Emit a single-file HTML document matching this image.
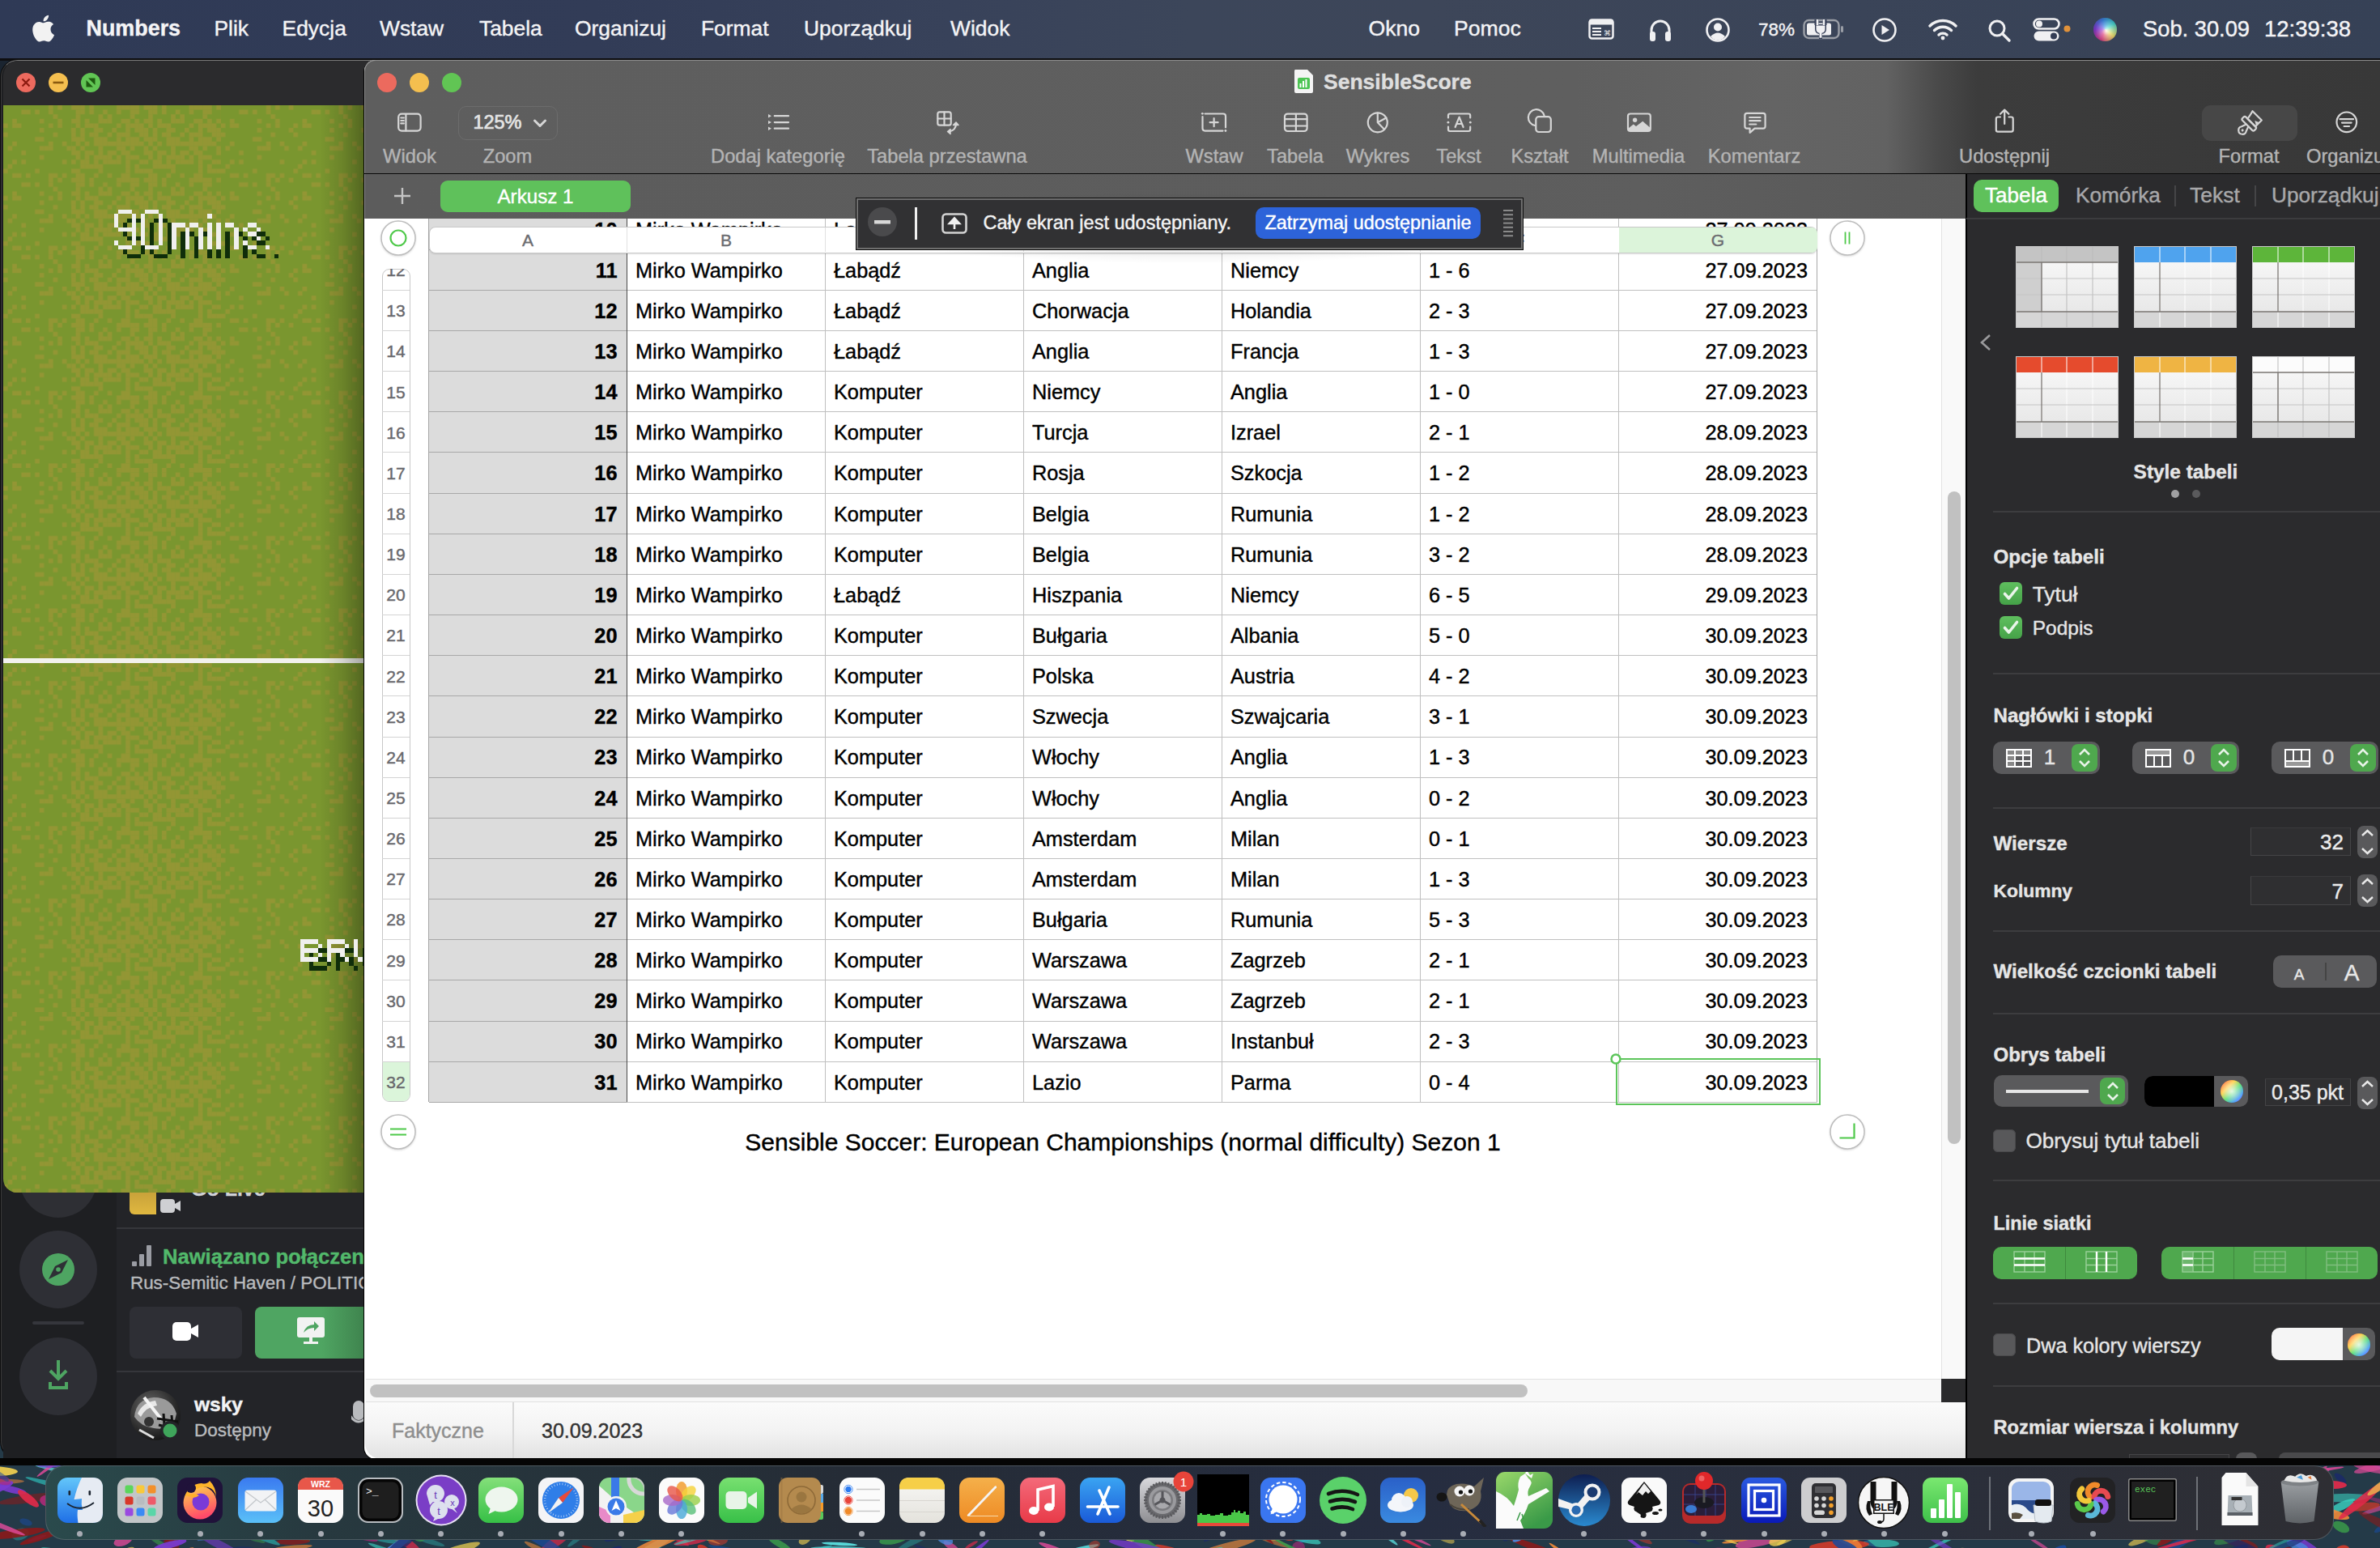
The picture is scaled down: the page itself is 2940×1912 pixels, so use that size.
<!DOCTYPE html>
<html><head><meta charset="utf-8"><title>Numbers</title>
<style>
*{margin:0;padding:0;box-sizing:border-box}
html,body{width:2940px;height:1912px;overflow:hidden}
body{position:relative;font-family:"Liberation Sans",sans-serif;background:#1a2430}
.abs{position:absolute}
.t{position:absolute;white-space:nowrap;line-height:1;-webkit-text-stroke:0.4px currentColor}
</style></head><body>

<div class="abs" style="left:0.00px;top:1760.00px;width:2940.00px;height:152.00px;background:#243a48"></div>
<svg class="abs" style="left:0.00px;top:1760.00px;" width="2940" height="152" viewBox="0 1760 2940 152"><ellipse cx="689" cy="1863" rx="18" ry="5" fill="#8a1a1a" opacity="0.77" transform="rotate(6 689 1863)"/><ellipse cx="2688" cy="1853" rx="24" ry="3" fill="#1a2a6a" opacity="0.88" transform="rotate(-2 2688 1853)"/><ellipse cx="1400" cy="1876" rx="10" ry="5" fill="#e02a4a" opacity="0.68" transform="rotate(34 1400 1876)"/><ellipse cx="25" cy="1895" rx="11" ry="7" fill="#2a9a9a" opacity="0.51" transform="rotate(-16 25 1895)"/><ellipse cx="2559" cy="1854" rx="30" ry="6" fill="#1a2a6a" opacity="0.69" transform="rotate(23 2559 1854)"/><ellipse cx="2150" cy="1868" rx="39" ry="2" fill="#b02a7a" opacity="0.56" transform="rotate(-32 2150 1868)"/><ellipse cx="627" cy="1920" rx="20" ry="5" fill="#3ad0c0" opacity="0.88" transform="rotate(-6 627 1920)"/><ellipse cx="1691" cy="1862" rx="19" ry="3" fill="#b02a7a" opacity="0.92" transform="rotate(15 1691 1862)"/><ellipse cx="2532" cy="1924" rx="28" ry="2" fill="#e02a4a" opacity="0.74" transform="rotate(-14 2532 1924)"/><ellipse cx="1684" cy="1804" rx="28" ry="5" fill="#f0d050" opacity="0.56" transform="rotate(-19 1684 1804)"/><ellipse cx="1416" cy="1876" rx="22" ry="3" fill="#d03a2a" opacity="0.57" transform="rotate(-7 1416 1876)"/><ellipse cx="856" cy="1894" rx="36" ry="2" fill="#f0d050" opacity="0.67" transform="rotate(21 856 1894)"/><ellipse cx="1727" cy="1864" rx="37" ry="3" fill="#f08a3a" opacity="0.64" transform="rotate(40 1727 1864)"/><ellipse cx="209" cy="1871" rx="6" ry="3" fill="#3a9a4a" opacity="0.62" transform="rotate(-17 209 1871)"/><ellipse cx="2035" cy="1922" rx="17" ry="3" fill="#1a4a9a" opacity="0.67" transform="rotate(32 2035 1922)"/><ellipse cx="1352" cy="1860" rx="28" ry="5" fill="#4a8ae0" opacity="0.94" transform="rotate(-32 1352 1860)"/><ellipse cx="2398" cy="1827" rx="27" ry="5" fill="#7a3ad0" opacity="0.94" transform="rotate(-16 2398 1827)"/><ellipse cx="1533" cy="1864" rx="5" ry="4" fill="#f0d050" opacity="0.67" transform="rotate(-15 1533 1864)"/><ellipse cx="1736" cy="1808" rx="27" ry="3" fill="#b02a7a" opacity="0.66" transform="rotate(14 1736 1808)"/><ellipse cx="2087" cy="1890" rx="6" ry="2" fill="#8a1a1a" opacity="0.67" transform="rotate(-38 2087 1890)"/><ellipse cx="1851" cy="1830" rx="26" ry="2" fill="#1a4a9a" opacity="0.67" transform="rotate(-15 1851 1830)"/><ellipse cx="1755" cy="1831" rx="18" ry="6" fill="#2a9a9a" opacity="0.81" transform="rotate(38 1755 1831)"/><ellipse cx="372" cy="1858" rx="28" ry="3" fill="#b02a7a" opacity="0.70" transform="rotate(-25 372 1858)"/><ellipse cx="2060" cy="1804" rx="16" ry="3" fill="#e02a4a" opacity="0.86" transform="rotate(-22 2060 1804)"/><ellipse cx="2843" cy="1801" rx="31" ry="3" fill="#f0d050" opacity="0.60" transform="rotate(-4 2843 1801)"/><ellipse cx="340" cy="1861" rx="12" ry="6" fill="#e02a4a" opacity="0.89" transform="rotate(6 340 1861)"/><ellipse cx="994" cy="1902" rx="8" ry="5" fill="#f0d050" opacity="0.63" transform="rotate(-30 994 1902)"/><ellipse cx="2346" cy="1827" rx="17" ry="4" fill="#3a9a4a" opacity="0.52" transform="rotate(5 2346 1827)"/><ellipse cx="1212" cy="1817" rx="22" ry="6" fill="#f0d050" opacity="0.70" transform="rotate(39 1212 1817)"/><ellipse cx="2811" cy="1915" rx="13" ry="6" fill="#e02a4a" opacity="0.84" transform="rotate(20 2811 1915)"/><ellipse cx="2851" cy="1863" rx="36" ry="6" fill="#e02a4a" opacity="0.63" transform="rotate(7 2851 1863)"/><ellipse cx="2394" cy="1796" rx="37" ry="5" fill="#7a3ad0" opacity="0.90" transform="rotate(-24 2394 1796)"/><ellipse cx="1261" cy="1797" rx="22" ry="2" fill="#4a8ae0" opacity="0.80" transform="rotate(-16 1261 1797)"/><ellipse cx="1544" cy="1846" rx="38" ry="5" fill="#b02a7a" opacity="0.94" transform="rotate(-30 1544 1846)"/><ellipse cx="1592" cy="1900" rx="7" ry="3" fill="#d03a2a" opacity="0.87" transform="rotate(3 1592 1900)"/><ellipse cx="490" cy="1897" rx="37" ry="6" fill="#e02a4a" opacity="0.72" transform="rotate(34 490 1897)"/><ellipse cx="1681" cy="1844" rx="31" ry="3" fill="#f0d050" opacity="0.69" transform="rotate(2 1681 1844)"/><ellipse cx="1389" cy="1895" rx="5" ry="2" fill="#1a4a9a" opacity="0.52" transform="rotate(-36 1389 1895)"/><ellipse cx="1419" cy="1794" rx="30" ry="4" fill="#e04a9a" opacity="0.64" transform="rotate(-15 1419 1794)"/><ellipse cx="1027" cy="1877" rx="26" ry="3" fill="#f08a3a" opacity="0.69" transform="rotate(39 1027 1877)"/><ellipse cx="360" cy="1790" rx="30" ry="6" fill="#f0d050" opacity="0.67" transform="rotate(-26 360 1790)"/><ellipse cx="1781" cy="1896" rx="18" ry="6" fill="#f0d050" opacity="0.52" transform="rotate(31 1781 1896)"/><ellipse cx="1850" cy="1893" rx="16" ry="7" fill="#3a9a4a" opacity="0.61" transform="rotate(-3 1850 1893)"/><ellipse cx="1577" cy="1884" rx="8" ry="4" fill="#3a9a4a" opacity="0.51" transform="rotate(-30 1577 1884)"/><ellipse cx="950" cy="1921" rx="25" ry="6" fill="#d03a2a" opacity="0.56" transform="rotate(-3 950 1921)"/><ellipse cx="2403" cy="1879" rx="36" ry="6" fill="#8a1a1a" opacity="0.64" transform="rotate(-31 2403 1879)"/><ellipse cx="1565" cy="1900" rx="30" ry="4" fill="#f08a3a" opacity="0.52" transform="rotate(22 1565 1900)"/><ellipse cx="254" cy="1803" rx="36" ry="2" fill="#2a9a9a" opacity="0.88" transform="rotate(-13 254 1803)"/><ellipse cx="56" cy="1806" rx="22" ry="5" fill="#3ad0c0" opacity="0.86" transform="rotate(6 56 1806)"/><ellipse cx="88" cy="1894" rx="23" ry="5" fill="#d03a2a" opacity="0.54" transform="rotate(4 88 1894)"/><ellipse cx="1629" cy="1864" rx="35" ry="2" fill="#d03a2a" opacity="0.58" transform="rotate(-21 1629 1864)"/><ellipse cx="725" cy="1873" rx="31" ry="4" fill="#b02a7a" opacity="0.92" transform="rotate(8 725 1873)"/><ellipse cx="1639" cy="1920" rx="18" ry="3" fill="#7a3ad0" opacity="0.84" transform="rotate(-7 1639 1920)"/><ellipse cx="459" cy="1883" rx="31" ry="5" fill="#4a8ae0" opacity="0.57" transform="rotate(15 459 1883)"/><ellipse cx="1175" cy="1910" rx="11" ry="4" fill="#e04a9a" opacity="0.73" transform="rotate(33 1175 1910)"/><ellipse cx="1300" cy="1887" rx="12" ry="3" fill="#f08a3a" opacity="0.73" transform="rotate(-28 1300 1887)"/><ellipse cx="2766" cy="1905" rx="24" ry="6" fill="#8a1a1a" opacity="0.69" transform="rotate(16 2766 1905)"/><ellipse cx="2524" cy="1869" rx="14" ry="3" fill="#2a9a9a" opacity="0.86" transform="rotate(-19 2524 1869)"/><ellipse cx="578" cy="1867" rx="13" ry="4" fill="#e02a4a" opacity="0.95" transform="rotate(-29 578 1867)"/><ellipse cx="1409" cy="1871" rx="21" ry="6" fill="#e02a4a" opacity="0.51" transform="rotate(12 1409 1871)"/><ellipse cx="2939" cy="1800" rx="38" ry="6" fill="#7a3ad0" opacity="0.71" transform="rotate(37 2939 1800)"/><ellipse cx="664" cy="1822" rx="30" ry="5" fill="#f08a3a" opacity="0.61" transform="rotate(28 664 1822)"/><ellipse cx="545" cy="1825" rx="12" ry="5" fill="#e02a4a" opacity="0.92" transform="rotate(-37 545 1825)"/><ellipse cx="486" cy="1796" rx="11" ry="2" fill="#5ae0e0" opacity="0.54" transform="rotate(-33 486 1796)"/><ellipse cx="2465" cy="1829" rx="17" ry="5" fill="#8a1a1a" opacity="0.51" transform="rotate(-13 2465 1829)"/><ellipse cx="968" cy="1841" rx="8" ry="5" fill="#1a2a6a" opacity="0.68" transform="rotate(36 968 1841)"/><ellipse cx="1602" cy="1806" rx="15" ry="5" fill="#d03a2a" opacity="0.74" transform="rotate(-5 1602 1806)"/><ellipse cx="728" cy="1861" rx="30" ry="5" fill="#b02a7a" opacity="0.63" transform="rotate(21 728 1861)"/><ellipse cx="1994" cy="1878" rx="33" ry="3" fill="#5ae0e0" opacity="0.65" transform="rotate(36 1994 1878)"/><ellipse cx="1667" cy="1861" rx="28" ry="4" fill="#2a9a9a" opacity="0.81" transform="rotate(17 1667 1861)"/><ellipse cx="1668" cy="1815" rx="28" ry="5" fill="#1a4a9a" opacity="0.91" transform="rotate(-10 1668 1815)"/><ellipse cx="1334" cy="1805" rx="25" ry="7" fill="#8a1a1a" opacity="0.77" transform="rotate(18 1334 1805)"/><ellipse cx="1634" cy="1877" rx="21" ry="3" fill="#1a4a9a" opacity="0.55" transform="rotate(16 1634 1877)"/><ellipse cx="520" cy="1865" rx="25" ry="4" fill="#d03a2a" opacity="0.67" transform="rotate(-19 520 1865)"/><ellipse cx="2580" cy="1796" rx="23" ry="3" fill="#5ae0e0" opacity="0.89" transform="rotate(1 2580 1796)"/><ellipse cx="2796" cy="1851" rx="33" ry="2" fill="#e04a9a" opacity="0.55" transform="rotate(28 2796 1851)"/><ellipse cx="786" cy="1803" rx="9" ry="6" fill="#1a2a6a" opacity="0.81" transform="rotate(-31 786 1803)"/><ellipse cx="1670" cy="1880" rx="19" ry="7" fill="#1a4a9a" opacity="0.57" transform="rotate(7 1670 1880)"/><ellipse cx="1167" cy="1816" rx="23" ry="5" fill="#f08a3a" opacity="0.67" transform="rotate(29 1167 1816)"/><ellipse cx="853" cy="1904" rx="21" ry="4" fill="#e02a4a" opacity="0.75" transform="rotate(-9 853 1904)"/><ellipse cx="1718" cy="1876" rx="39" ry="5" fill="#3ad0c0" opacity="0.80" transform="rotate(32 1718 1876)"/><ellipse cx="70" cy="1816" rx="27" ry="2" fill="#5ae0e0" opacity="0.72" transform="rotate(13 70 1816)"/><ellipse cx="1540" cy="1852" rx="12" ry="4" fill="#2a9a9a" opacity="0.92" transform="rotate(25 1540 1852)"/><ellipse cx="2801" cy="1805" rx="15" ry="5" fill="#1a4a9a" opacity="0.86" transform="rotate(-29 2801 1805)"/><ellipse cx="1837" cy="1797" rx="18" ry="3" fill="#d03a2a" opacity="0.51" transform="rotate(-0 1837 1797)"/><ellipse cx="992" cy="1834" rx="17" ry="5" fill="#d03a2a" opacity="0.77" transform="rotate(29 992 1834)"/><ellipse cx="2742" cy="1887" rx="31" ry="3" fill="#5ae0e0" opacity="0.53" transform="rotate(-24 2742 1887)"/><ellipse cx="576" cy="1884" rx="13" ry="3" fill="#5ae0e0" opacity="0.54" transform="rotate(-37 576 1884)"/><ellipse cx="577" cy="1812" rx="22" ry="5" fill="#4a8ae0" opacity="0.59" transform="rotate(28 577 1812)"/><ellipse cx="1437" cy="1793" rx="21" ry="5" fill="#e04a9a" opacity="0.90" transform="rotate(-26 1437 1793)"/><ellipse cx="2125" cy="1840" rx="18" ry="4" fill="#f0d050" opacity="0.94" transform="rotate(-8 2125 1840)"/><ellipse cx="2376" cy="1825" rx="18" ry="6" fill="#4a8ae0" opacity="0.59" transform="rotate(-24 2376 1825)"/><ellipse cx="489" cy="1845" rx="11" ry="2" fill="#d03a2a" opacity="0.70" transform="rotate(9 489 1845)"/><ellipse cx="531" cy="1904" rx="19" ry="3" fill="#2a9a9a" opacity="0.52" transform="rotate(16 531 1904)"/><ellipse cx="1182" cy="1844" rx="6" ry="7" fill="#f08a3a" opacity="0.68" transform="rotate(-21 1182 1844)"/><ellipse cx="548" cy="1835" rx="9" ry="7" fill="#f0d050" opacity="0.83" transform="rotate(-36 548 1835)"/><ellipse cx="800" cy="1896" rx="21" ry="7" fill="#3ad0c0" opacity="0.75" transform="rotate(-1 800 1896)"/><ellipse cx="70" cy="1835" rx="40" ry="3" fill="#2a9a9a" opacity="0.94" transform="rotate(15 70 1835)"/><ellipse cx="1745" cy="1790" rx="6" ry="2" fill="#1a4a9a" opacity="0.72" transform="rotate(0 1745 1790)"/><ellipse cx="544" cy="1859" rx="17" ry="6" fill="#5ae0e0" opacity="0.86" transform="rotate(-2 544 1859)"/><ellipse cx="2714" cy="1917" rx="6" ry="3" fill="#f0d050" opacity="0.68" transform="rotate(11 2714 1917)"/><ellipse cx="2803" cy="1815" rx="19" ry="4" fill="#4a8ae0" opacity="0.81" transform="rotate(-13 2803 1815)"/><ellipse cx="2747" cy="1814" rx="31" ry="6" fill="#e02a4a" opacity="0.66" transform="rotate(35 2747 1814)"/><ellipse cx="528" cy="1898" rx="20" ry="4" fill="#1a2a6a" opacity="0.62" transform="rotate(-2 528 1898)"/><ellipse cx="486" cy="1887" rx="26" ry="5" fill="#3a9a4a" opacity="0.52" transform="rotate(36 486 1887)"/><ellipse cx="492" cy="1891" rx="34" ry="2" fill="#1a2a6a" opacity="0.54" transform="rotate(14 492 1891)"/><ellipse cx="687" cy="1904" rx="27" ry="6" fill="#e02a4a" opacity="0.71" transform="rotate(-36 687 1904)"/><ellipse cx="2569" cy="1877" rx="40" ry="2" fill="#f08a3a" opacity="0.93" transform="rotate(-8 2569 1877)"/><ellipse cx="293" cy="1867" rx="9" ry="2" fill="#8a1a1a" opacity="0.81" transform="rotate(-23 293 1867)"/><ellipse cx="2893" cy="1916" rx="10" ry="7" fill="#d03a2a" opacity="0.94" transform="rotate(-22 2893 1916)"/><ellipse cx="636" cy="1866" rx="20" ry="6" fill="#f0d050" opacity="0.90" transform="rotate(-14 636 1866)"/><ellipse cx="2311" cy="1853" rx="27" ry="2" fill="#5ae0e0" opacity="0.51" transform="rotate(-31 2311 1853)"/><ellipse cx="2860" cy="1817" rx="36" ry="2" fill="#e04a9a" opacity="0.87" transform="rotate(-8 2860 1817)"/><ellipse cx="2008" cy="1805" rx="22" ry="5" fill="#1a2a6a" opacity="0.77" transform="rotate(-12 2008 1805)"/><ellipse cx="1308" cy="1805" rx="34" ry="5" fill="#e02a4a" opacity="0.55" transform="rotate(-10 1308 1805)"/><ellipse cx="3" cy="1830" rx="27" ry="3" fill="#f08a3a" opacity="0.53" transform="rotate(-1 3 1830)"/><ellipse cx="1627" cy="1889" rx="20" ry="5" fill="#f0d050" opacity="0.61" transform="rotate(1 1627 1889)"/><ellipse cx="2477" cy="1798" rx="13" ry="4" fill="#3ad0c0" opacity="0.57" transform="rotate(-23 2477 1798)"/><ellipse cx="2754" cy="1888" rx="36" ry="7" fill="#f0d050" opacity="0.82" transform="rotate(-3 2754 1888)"/><ellipse cx="2521" cy="1840" rx="12" ry="5" fill="#3a9a4a" opacity="0.85" transform="rotate(-1 2521 1840)"/><ellipse cx="1193" cy="1925" rx="37" ry="3" fill="#7a3ad0" opacity="0.90" transform="rotate(-39 1193 1925)"/><ellipse cx="64" cy="1810" rx="23" ry="2" fill="#e04a9a" opacity="0.84" transform="rotate(-37 64 1810)"/><ellipse cx="802" cy="1848" rx="17" ry="6" fill="#1a2a6a" opacity="0.56" transform="rotate(23 802 1848)"/><ellipse cx="1303" cy="1913" rx="21" ry="3" fill="#e04a9a" opacity="0.82" transform="rotate(21 1303 1913)"/><ellipse cx="2890" cy="1922" rx="36" ry="4" fill="#1a4a9a" opacity="0.92" transform="rotate(-5 2890 1922)"/><ellipse cx="1393" cy="1925" rx="13" ry="7" fill="#3ad0c0" opacity="0.71" transform="rotate(-17 1393 1925)"/><ellipse cx="2623" cy="1899" rx="15" ry="3" fill="#5ae0e0" opacity="0.51" transform="rotate(2 2623 1899)"/><ellipse cx="1855" cy="1810" rx="6" ry="7" fill="#2a9a9a" opacity="0.85" transform="rotate(-24 1855 1810)"/><ellipse cx="1368" cy="1922" rx="32" ry="7" fill="#2a9a9a" opacity="0.61" transform="rotate(-1 1368 1922)"/><ellipse cx="805" cy="1912" rx="34" ry="5" fill="#5ae0e0" opacity="0.64" transform="rotate(-32 805 1912)"/><ellipse cx="717" cy="1898" rx="20" ry="3" fill="#2a9a9a" opacity="0.52" transform="rotate(-38 717 1898)"/><ellipse cx="2948" cy="1812" rx="32" ry="5" fill="#1a4a9a" opacity="0.88" transform="rotate(19 2948 1812)"/><ellipse cx="1209" cy="1891" rx="17" ry="2" fill="#2a9a9a" opacity="0.51" transform="rotate(-27 1209 1891)"/><ellipse cx="1896" cy="1911" rx="37" ry="4" fill="#8a1a1a" opacity="0.89" transform="rotate(20 1896 1911)"/><ellipse cx="2893" cy="1860" rx="18" ry="5" fill="#3ad0c0" opacity="0.81" transform="rotate(-25 2893 1860)"/><ellipse cx="2936" cy="1864" rx="19" ry="3" fill="#e04a9a" opacity="0.62" transform="rotate(-18 2936 1864)"/><ellipse cx="823" cy="1862" rx="25" ry="2" fill="#2a9a9a" opacity="0.88" transform="rotate(-7 823 1862)"/><ellipse cx="2446" cy="1916" rx="26" ry="2" fill="#f0d050" opacity="0.55" transform="rotate(8 2446 1916)"/><ellipse cx="353" cy="1896" rx="31" ry="3" fill="#3a9a4a" opacity="0.67" transform="rotate(13 353 1896)"/><ellipse cx="1514" cy="1911" rx="39" ry="5" fill="#f08a3a" opacity="0.66" transform="rotate(-15 1514 1911)"/><ellipse cx="1929" cy="1917" rx="19" ry="2" fill="#f08a3a" opacity="0.92" transform="rotate(36 1929 1917)"/><ellipse cx="926" cy="1843" rx="15" ry="2" fill="#3ad0c0" opacity="0.90" transform="rotate(-7 926 1843)"/><ellipse cx="1456" cy="1919" rx="31" ry="5" fill="#d03a2a" opacity="0.88" transform="rotate(19 1456 1919)"/><ellipse cx="1861" cy="1900" rx="5" ry="3" fill="#1a2a6a" opacity="0.62" transform="rotate(-34 1861 1900)"/><ellipse cx="1419" cy="1826" rx="24" ry="2" fill="#f08a3a" opacity="0.58" transform="rotate(-1 1419 1826)"/><ellipse cx="427" cy="1885" rx="29" ry="4" fill="#3a9a4a" opacity="0.56" transform="rotate(12 427 1885)"/><ellipse cx="143" cy="1893" rx="11" ry="3" fill="#e02a4a" opacity="0.57" transform="rotate(-30 143 1893)"/><ellipse cx="1542" cy="1811" rx="12" ry="6" fill="#3a9a4a" opacity="0.94" transform="rotate(-9 1542 1811)"/><ellipse cx="817" cy="1808" rx="10" ry="2" fill="#b02a7a" opacity="0.77" transform="rotate(35 817 1808)"/><ellipse cx="2765" cy="1791" rx="18" ry="2" fill="#e04a9a" opacity="0.66" transform="rotate(-20 2765 1791)"/><ellipse cx="2813" cy="1855" rx="30" ry="3" fill="#2a9a9a" opacity="0.74" transform="rotate(19 2813 1855)"/><ellipse cx="2525" cy="1850" rx="19" ry="4" fill="#3ad0c0" opacity="0.74" transform="rotate(-5 2525 1850)"/><ellipse cx="2462" cy="1817" rx="26" ry="7" fill="#e02a4a" opacity="0.64" transform="rotate(20 2462 1817)"/><ellipse cx="2539" cy="1919" rx="16" ry="6" fill="#1a4a9a" opacity="0.94" transform="rotate(-36 2539 1919)"/><ellipse cx="1200" cy="1908" rx="9" ry="2" fill="#e02a4a" opacity="0.68" transform="rotate(-30 1200 1908)"/><ellipse cx="1675" cy="1841" rx="29" ry="3" fill="#e04a9a" opacity="0.70" transform="rotate(3 1675 1841)"/><ellipse cx="416" cy="1871" rx="16" ry="4" fill="#b02a7a" opacity="0.77" transform="rotate(11 416 1871)"/><ellipse cx="2073" cy="1894" rx="30" ry="3" fill="#1a2a6a" opacity="0.63" transform="rotate(27 2073 1894)"/><ellipse cx="2891" cy="1826" rx="9" ry="4" fill="#1a2a6a" opacity="0.83" transform="rotate(40 2891 1826)"/><ellipse cx="721" cy="1849" rx="14" ry="2" fill="#b02a7a" opacity="0.89" transform="rotate(3 721 1849)"/><ellipse cx="2920" cy="1861" rx="20" ry="5" fill="#d03a2a" opacity="0.75" transform="rotate(-7 2920 1861)"/><ellipse cx="1799" cy="1829" rx="13" ry="4" fill="#f08a3a" opacity="0.66" transform="rotate(39 1799 1829)"/><ellipse cx="620" cy="1864" rx="36" ry="4" fill="#e02a4a" opacity="0.75" transform="rotate(-9 620 1864)"/><ellipse cx="15" cy="1840" rx="18" ry="4" fill="#7a3ad0" opacity="0.89" transform="rotate(12 15 1840)"/><ellipse cx="1722" cy="1810" rx="13" ry="4" fill="#f0d050" opacity="0.90" transform="rotate(-40 1722 1810)"/><ellipse cx="603" cy="1849" rx="12" ry="2" fill="#1a2a6a" opacity="0.74" transform="rotate(34 603 1849)"/><ellipse cx="2177" cy="1902" rx="34" ry="7" fill="#e04a9a" opacity="0.76" transform="rotate(-13 2177 1902)"/><ellipse cx="1498" cy="1915" rx="13" ry="2" fill="#3ad0c0" opacity="0.59" transform="rotate(-17 1498 1915)"/><ellipse cx="2434" cy="1871" rx="8" ry="2" fill="#b02a7a" opacity="0.72" transform="rotate(-9 2434 1871)"/><ellipse cx="2917" cy="1854" rx="10" ry="3" fill="#8a1a1a" opacity="0.78" transform="rotate(-5 2917 1854)"/><ellipse cx="1946" cy="1849" rx="8" ry="7" fill="#1a2a6a" opacity="0.53" transform="rotate(30 1946 1849)"/><ellipse cx="2594" cy="1891" rx="16" ry="6" fill="#b02a7a" opacity="0.69" transform="rotate(-2 2594 1891)"/><ellipse cx="2645" cy="1902" rx="17" ry="4" fill="#f0d050" opacity="0.65" transform="rotate(-22 2645 1902)"/><ellipse cx="1912" cy="1919" rx="7" ry="4" fill="#7a3ad0" opacity="0.74" transform="rotate(35 1912 1919)"/><ellipse cx="1690" cy="1802" rx="13" ry="4" fill="#e02a4a" opacity="0.68" transform="rotate(33 1690 1802)"/><ellipse cx="1005" cy="1852" rx="39" ry="3" fill="#f0d050" opacity="0.90" transform="rotate(-16 1005 1852)"/><ellipse cx="376" cy="1862" rx="27" ry="3" fill="#5ae0e0" opacity="0.76" transform="rotate(29 376 1862)"/><ellipse cx="2133" cy="1861" rx="21" ry="5" fill="#e02a4a" opacity="0.59" transform="rotate(-15 2133 1861)"/><ellipse cx="2577" cy="1819" rx="34" ry="7" fill="#d03a2a" opacity="0.73" transform="rotate(34 2577 1819)"/><ellipse cx="2490" cy="1833" rx="31" ry="3" fill="#f08a3a" opacity="0.88" transform="rotate(-9 2490 1833)"/><ellipse cx="2462" cy="1798" rx="19" ry="4" fill="#1a4a9a" opacity="0.66" transform="rotate(-17 2462 1798)"/><ellipse cx="137" cy="1920" rx="31" ry="3" fill="#3ad0c0" opacity="0.75" transform="rotate(-5 137 1920)"/><ellipse cx="712" cy="1884" rx="13" ry="5" fill="#f0d050" opacity="0.81" transform="rotate(-21 712 1884)"/><ellipse cx="1561" cy="1871" rx="20" ry="2" fill="#3ad0c0" opacity="0.53" transform="rotate(-5 1561 1871)"/><ellipse cx="2324" cy="1906" rx="22" ry="5" fill="#3ad0c0" opacity="0.69" transform="rotate(2 2324 1906)"/><ellipse cx="1455" cy="1843" rx="23" ry="4" fill="#3a9a4a" opacity="0.72" transform="rotate(40 1455 1843)"/><ellipse cx="513" cy="1887" rx="17" ry="6" fill="#f0d050" opacity="0.66" transform="rotate(-14 513 1887)"/><ellipse cx="417" cy="1830" rx="27" ry="2" fill="#7a3ad0" opacity="0.72" transform="rotate(-4 417 1830)"/><ellipse cx="1717" cy="1901" rx="12" ry="2" fill="#5ae0e0" opacity="0.77" transform="rotate(38 1717 1901)"/><ellipse cx="1721" cy="1882" rx="15" ry="3" fill="#3a9a4a" opacity="0.84" transform="rotate(27 1721 1882)"/><ellipse cx="848" cy="1791" rx="29" ry="6" fill="#b02a7a" opacity="0.67" transform="rotate(-6 848 1791)"/><ellipse cx="521" cy="1830" rx="12" ry="6" fill="#1a2a6a" opacity="0.75" transform="rotate(-31 521 1830)"/><ellipse cx="933" cy="1888" rx="11" ry="4" fill="#f08a3a" opacity="0.75" transform="rotate(33 933 1888)"/><ellipse cx="1070" cy="1888" rx="26" ry="5" fill="#1a4a9a" opacity="0.58" transform="rotate(0 1070 1888)"/><ellipse cx="280" cy="1863" rx="37" ry="6" fill="#4a8ae0" opacity="0.62" transform="rotate(-15 280 1863)"/><ellipse cx="1409" cy="1882" rx="13" ry="3" fill="#f08a3a" opacity="0.71" transform="rotate(36 1409 1882)"/><ellipse cx="1273" cy="1825" rx="39" ry="3" fill="#f0d050" opacity="0.93" transform="rotate(22 1273 1825)"/><ellipse cx="1967" cy="1823" rx="14" ry="3" fill="#b02a7a" opacity="0.54" transform="rotate(32 1967 1823)"/><ellipse cx="2077" cy="1891" rx="13" ry="4" fill="#d03a2a" opacity="0.84" transform="rotate(-14 2077 1891)"/><ellipse cx="473" cy="1880" rx="14" ry="4" fill="#b02a7a" opacity="0.70" transform="rotate(32 473 1880)"/><ellipse cx="1256" cy="1866" rx="25" ry="7" fill="#3a9a4a" opacity="0.74" transform="rotate(-19 1256 1866)"/><ellipse cx="1725" cy="1842" rx="7" ry="2" fill="#8a1a1a" opacity="0.86" transform="rotate(-40 1725 1842)"/><ellipse cx="371" cy="1888" rx="12" ry="5" fill="#8a1a1a" opacity="0.52" transform="rotate(-10 371 1888)"/><ellipse cx="1639" cy="1891" rx="37" ry="3" fill="#1a4a9a" opacity="0.93" transform="rotate(-23 1639 1891)"/><ellipse cx="200" cy="1848" rx="15" ry="2" fill="#b02a7a" opacity="0.77" transform="rotate(13 200 1848)"/><ellipse cx="460" cy="1808" rx="27" ry="6" fill="#1a4a9a" opacity="0.81" transform="rotate(-32 460 1808)"/><ellipse cx="1854" cy="1860" rx="30" ry="5" fill="#8a1a1a" opacity="0.62" transform="rotate(9 1854 1860)"/><ellipse cx="2069" cy="1790" rx="15" ry="5" fill="#1a4a9a" opacity="0.65" transform="rotate(-39 2069 1790)"/><ellipse cx="2145" cy="1903" rx="18" ry="2" fill="#f08a3a" opacity="0.86" transform="rotate(-9 2145 1903)"/><ellipse cx="1306" cy="1880" rx="16" ry="3" fill="#e04a9a" opacity="0.50" transform="rotate(-21 1306 1880)"/><ellipse cx="620" cy="1811" rx="19" ry="4" fill="#f0d050" opacity="0.80" transform="rotate(-31 620 1811)"/><ellipse cx="706" cy="1803" rx="19" ry="5" fill="#f08a3a" opacity="0.76" transform="rotate(-24 706 1803)"/><ellipse cx="771" cy="1893" rx="26" ry="5" fill="#1a2a6a" opacity="0.76" transform="rotate(-23 771 1893)"/><ellipse cx="1878" cy="1898" rx="11" ry="4" fill="#4a8ae0" opacity="0.92" transform="rotate(-32 1878 1898)"/><ellipse cx="1714" cy="1874" rx="20" ry="2" fill="#4a8ae0" opacity="0.66" transform="rotate(-27 1714 1874)"/><ellipse cx="2958" cy="1806" rx="22" ry="4" fill="#f08a3a" opacity="0.85" transform="rotate(19 2958 1806)"/><ellipse cx="41" cy="1793" rx="27" ry="2" fill="#4a8ae0" opacity="0.91" transform="rotate(30 41 1793)"/><ellipse cx="123" cy="1881" rx="16" ry="4" fill="#3ad0c0" opacity="0.86" transform="rotate(22 123 1881)"/><ellipse cx="901" cy="1866" rx="19" ry="5" fill="#d03a2a" opacity="0.59" transform="rotate(37 901 1866)"/><ellipse cx="229" cy="1891" rx="24" ry="6" fill="#4a8ae0" opacity="0.57" transform="rotate(-29 229 1891)"/><ellipse cx="2846" cy="1831" rx="35" ry="4" fill="#e04a9a" opacity="0.80" transform="rotate(-35 2846 1831)"/><ellipse cx="2740" cy="1847" rx="30" ry="5" fill="#3a9a4a" opacity="0.65" transform="rotate(-5 2740 1847)"/><ellipse cx="2775" cy="1834" rx="22" ry="5" fill="#5ae0e0" opacity="0.62" transform="rotate(-2 2775 1834)"/><ellipse cx="1046" cy="1878" rx="31" ry="7" fill="#e04a9a" opacity="0.82" transform="rotate(20 1046 1878)"/><ellipse cx="1768" cy="1880" rx="40" ry="2" fill="#3a9a4a" opacity="0.58" transform="rotate(-21 1768 1880)"/><ellipse cx="272" cy="1814" rx="23" ry="3" fill="#7a3ad0" opacity="0.76" transform="rotate(-6 272 1814)"/><ellipse cx="1104" cy="1901" rx="18" ry="6" fill="#3a9a4a" opacity="0.83" transform="rotate(-11 1104 1901)"/><ellipse cx="792" cy="1820" rx="13" ry="3" fill="#f0d050" opacity="0.69" transform="rotate(-38 792 1820)"/><ellipse cx="2498" cy="1872" rx="19" ry="4" fill="#4a8ae0" opacity="0.69" transform="rotate(0 2498 1872)"/><ellipse cx="576" cy="1843" rx="28" ry="5" fill="#7a3ad0" opacity="0.75" transform="rotate(-38 576 1843)"/><ellipse cx="2017" cy="1920" rx="8" ry="6" fill="#3a9a4a" opacity="0.90" transform="rotate(22 2017 1920)"/><ellipse cx="344" cy="1870" rx="38" ry="3" fill="#e02a4a" opacity="0.69" transform="rotate(-30 344 1870)"/><ellipse cx="2936" cy="1811" rx="29" ry="5" fill="#e04a9a" opacity="0.70" transform="rotate(-15 2936 1811)"/><ellipse cx="2746" cy="1824" rx="6" ry="7" fill="#b02a7a" opacity="0.60" transform="rotate(4 2746 1824)"/><ellipse cx="341" cy="1817" rx="12" ry="4" fill="#e02a4a" opacity="0.92" transform="rotate(-22 341 1817)"/><ellipse cx="663" cy="1912" rx="17" ry="3" fill="#f08a3a" opacity="0.59" transform="rotate(27 663 1912)"/><ellipse cx="2154" cy="1790" rx="28" ry="6" fill="#f08a3a" opacity="0.84" transform="rotate(35 2154 1790)"/><ellipse cx="2423" cy="1800" rx="14" ry="3" fill="#1a4a9a" opacity="0.60" transform="rotate(-12 2423 1800)"/><ellipse cx="576" cy="1874" rx="32" ry="4" fill="#3ad0c0" opacity="0.91" transform="rotate(-36 576 1874)"/><ellipse cx="771" cy="1829" rx="38" ry="3" fill="#7a3ad0" opacity="0.66" transform="rotate(-24 771 1829)"/><ellipse cx="244" cy="1847" rx="32" ry="5" fill="#5ae0e0" opacity="0.77" transform="rotate(12 244 1847)"/><ellipse cx="728" cy="1807" rx="25" ry="2" fill="#e02a4a" opacity="0.77" transform="rotate(-14 728 1807)"/><ellipse cx="646" cy="1796" rx="32" ry="5" fill="#d03a2a" opacity="0.65" transform="rotate(-7 646 1796)"/><ellipse cx="847" cy="1856" rx="32" ry="4" fill="#5ae0e0" opacity="0.50" transform="rotate(-27 847 1856)"/><ellipse cx="2313" cy="1840" rx="35" ry="3" fill="#e02a4a" opacity="0.88" transform="rotate(1 2313 1840)"/><ellipse cx="1098" cy="1839" rx="18" ry="2" fill="#4a8ae0" opacity="0.75" transform="rotate(-14 1098 1839)"/><ellipse cx="1576" cy="1791" rx="8" ry="3" fill="#f08a3a" opacity="0.55" transform="rotate(39 1576 1791)"/><ellipse cx="2562" cy="1814" rx="33" ry="3" fill="#d03a2a" opacity="0.50" transform="rotate(-11 2562 1814)"/><ellipse cx="639" cy="1835" rx="6" ry="5" fill="#3a9a4a" opacity="0.79" transform="rotate(-27 639 1835)"/><ellipse cx="1476" cy="1837" rx="22" ry="2" fill="#e04a9a" opacity="0.89" transform="rotate(14 1476 1837)"/><ellipse cx="1614" cy="1801" rx="36" ry="2" fill="#d03a2a" opacity="0.55" transform="rotate(-24 1614 1801)"/><ellipse cx="228" cy="1835" rx="33" ry="2" fill="#e04a9a" opacity="0.73" transform="rotate(-37 228 1835)"/><ellipse cx="2774" cy="1819" rx="30" ry="6" fill="#f0d050" opacity="0.64" transform="rotate(-16 2774 1819)"/><ellipse cx="2825" cy="1906" rx="30" ry="5" fill="#2a9a9a" opacity="0.76" transform="rotate(-23 2825 1906)"/><ellipse cx="362" cy="1904" rx="21" ry="4" fill="#8a1a1a" opacity="0.78" transform="rotate(-2 362 1904)"/><ellipse cx="2705" cy="1831" rx="27" ry="2" fill="#5ae0e0" opacity="0.90" transform="rotate(-27 2705 1831)"/><ellipse cx="1285" cy="1843" rx="23" ry="5" fill="#b02a7a" opacity="0.66" transform="rotate(-17 1285 1843)"/><ellipse cx="2218" cy="1813" rx="18" ry="3" fill="#3a9a4a" opacity="0.77" transform="rotate(18 2218 1813)"/><ellipse cx="1186" cy="1919" rx="20" ry="3" fill="#d03a2a" opacity="0.50" transform="rotate(10 1186 1919)"/><ellipse cx="2168" cy="1849" rx="7" ry="5" fill="#4a8ae0" opacity="0.77" transform="rotate(13 2168 1849)"/><ellipse cx="1820" cy="1857" rx="23" ry="4" fill="#e02a4a" opacity="0.88" transform="rotate(19 1820 1857)"/><ellipse cx="2955" cy="1802" rx="29" ry="6" fill="#5ae0e0" opacity="0.82" transform="rotate(-5 2955 1802)"/><ellipse cx="583" cy="1825" rx="10" ry="5" fill="#f0d050" opacity="0.95" transform="rotate(-19 583 1825)"/><ellipse cx="2771" cy="1874" rx="13" ry="5" fill="#d03a2a" opacity="0.80" transform="rotate(-17 2771 1874)"/><ellipse cx="2403" cy="1881" rx="5" ry="4" fill="#e04a9a" opacity="0.91" transform="rotate(8 2403 1881)"/><ellipse cx="1877" cy="1896" rx="11" ry="4" fill="#f0d050" opacity="0.89" transform="rotate(-0 1877 1896)"/><ellipse cx="1526" cy="1836" rx="7" ry="5" fill="#b02a7a" opacity="0.53" transform="rotate(30 1526 1836)"/><ellipse cx="2429" cy="1814" rx="22" ry="3" fill="#1a4a9a" opacity="0.76" transform="rotate(28 2429 1814)"/><ellipse cx="691" cy="1886" rx="27" ry="2" fill="#5ae0e0" opacity="0.81" transform="rotate(4 691 1886)"/><ellipse cx="930" cy="1867" rx="25" ry="3" fill="#5ae0e0" opacity="0.76" transform="rotate(25 930 1867)"/><ellipse cx="424" cy="1848" rx="30" ry="2" fill="#7a3ad0" opacity="0.51" transform="rotate(-8 424 1848)"/><ellipse cx="1908" cy="1894" rx="8" ry="7" fill="#3a9a4a" opacity="0.56" transform="rotate(-16 1908 1894)"/><ellipse cx="518" cy="1898" rx="8" ry="6" fill="#3a9a4a" opacity="0.69" transform="rotate(15 518 1898)"/><ellipse cx="725" cy="1800" rx="20" ry="7" fill="#b02a7a" opacity="0.91" transform="rotate(-25 725 1800)"/><ellipse cx="1018" cy="1846" rx="6" ry="3" fill="#f0d050" opacity="0.73" transform="rotate(-11 1018 1846)"/><ellipse cx="2211" cy="1900" rx="18" ry="3" fill="#f0d050" opacity="0.66" transform="rotate(-27 2211 1900)"/><ellipse cx="2175" cy="1823" rx="10" ry="3" fill="#1a4a9a" opacity="0.71" transform="rotate(6 2175 1823)"/><ellipse cx="2847" cy="1909" rx="26" ry="6" fill="#7a3ad0" opacity="0.84" transform="rotate(31 2847 1909)"/><ellipse cx="1186" cy="1825" rx="18" ry="5" fill="#d03a2a" opacity="0.79" transform="rotate(-23 1186 1825)"/><ellipse cx="608" cy="1892" rx="25" ry="6" fill="#b02a7a" opacity="0.88" transform="rotate(-19 608 1892)"/><ellipse cx="2063" cy="1877" rx="28" ry="6" fill="#1a4a9a" opacity="0.73" transform="rotate(11 2063 1877)"/><ellipse cx="831" cy="1922" rx="36" ry="6" fill="#3ad0c0" opacity="0.59" transform="rotate(18 831 1922)"/><ellipse cx="2049" cy="1844" rx="34" ry="5" fill="#f08a3a" opacity="0.67" transform="rotate(2 2049 1844)"/><ellipse cx="1735" cy="1851" rx="28" ry="6" fill="#1a2a6a" opacity="0.76" transform="rotate(-31 1735 1851)"/><ellipse cx="2797" cy="1879" rx="25" ry="6" fill="#2a9a9a" opacity="0.87" transform="rotate(36 2797 1879)"/><ellipse cx="1609" cy="1917" rx="16" ry="3" fill="#1a2a6a" opacity="0.62" transform="rotate(2 1609 1917)"/><ellipse cx="2756" cy="1899" rx="22" ry="6" fill="#3a9a4a" opacity="0.61" transform="rotate(-19 2756 1899)"/><ellipse cx="1995" cy="1869" rx="32" ry="4" fill="#f08a3a" opacity="0.51" transform="rotate(26 1995 1869)"/><ellipse cx="1664" cy="1856" rx="7" ry="4" fill="#7a3ad0" opacity="0.68" transform="rotate(-31 1664 1856)"/><ellipse cx="1205" cy="1831" rx="27" ry="5" fill="#e02a4a" opacity="0.94" transform="rotate(-34 1205 1831)"/><ellipse cx="192" cy="1824" rx="32" ry="2" fill="#4a8ae0" opacity="0.61" transform="rotate(-35 192 1824)"/><ellipse cx="1589" cy="1828" rx="27" ry="3" fill="#8a1a1a" opacity="0.65" transform="rotate(10 1589 1828)"/><ellipse cx="1194" cy="1924" rx="39" ry="2" fill="#f08a3a" opacity="0.79" transform="rotate(10 1194 1924)"/><ellipse cx="296" cy="1838" rx="24" ry="2" fill="#3a9a4a" opacity="0.70" transform="rotate(38 296 1838)"/><ellipse cx="2658" cy="1901" rx="12" ry="6" fill="#3a9a4a" opacity="0.55" transform="rotate(22 2658 1901)"/><ellipse cx="243" cy="1799" rx="30" ry="5" fill="#e02a4a" opacity="0.70" transform="rotate(-24 243 1799)"/><ellipse cx="240" cy="1837" rx="36" ry="4" fill="#1a4a9a" opacity="0.60" transform="rotate(-29 240 1837)"/><ellipse cx="1425" cy="1845" rx="29" ry="6" fill="#f08a3a" opacity="0.87" transform="rotate(10 1425 1845)"/><ellipse cx="1036" cy="1799" rx="11" ry="5" fill="#2a9a9a" opacity="0.85" transform="rotate(-4 1036 1799)"/><ellipse cx="684" cy="1805" rx="11" ry="2" fill="#7a3ad0" opacity="0.60" transform="rotate(-15 684 1805)"/><ellipse cx="2292" cy="1916" rx="15" ry="4" fill="#4a8ae0" opacity="0.55" transform="rotate(-3 2292 1916)"/><ellipse cx="2872" cy="1868" rx="31" ry="6" fill="#f08a3a" opacity="0.90" transform="rotate(13 2872 1868)"/><ellipse cx="1552" cy="1803" rx="21" ry="6" fill="#7a3ad0" opacity="0.68" transform="rotate(24 1552 1803)"/><ellipse cx="1774" cy="1805" rx="13" ry="4" fill="#1a2a6a" opacity="0.53" transform="rotate(-27 1774 1805)"/><ellipse cx="1391" cy="1899" rx="11" ry="3" fill="#f0d050" opacity="0.93" transform="rotate(25 1391 1899)"/><ellipse cx="1381" cy="1884" rx="15" ry="6" fill="#d03a2a" opacity="0.66" transform="rotate(24 1381 1884)"/><ellipse cx="1686" cy="1793" rx="18" ry="2" fill="#1a4a9a" opacity="0.51" transform="rotate(-19 1686 1793)"/><ellipse cx="818" cy="1886" rx="40" ry="5" fill="#e02a4a" opacity="0.69" transform="rotate(35 818 1886)"/><ellipse cx="2652" cy="1797" rx="17" ry="6" fill="#b02a7a" opacity="0.83" transform="rotate(-24 2652 1797)"/><ellipse cx="935" cy="1868" rx="24" ry="5" fill="#1a4a9a" opacity="0.54" transform="rotate(-9 935 1868)"/><ellipse cx="1723" cy="1856" rx="23" ry="2" fill="#3ad0c0" opacity="0.78" transform="rotate(37 1723 1856)"/><ellipse cx="2794" cy="1861" rx="31" ry="5" fill="#f08a3a" opacity="0.83" transform="rotate(-22 2794 1861)"/><ellipse cx="1153" cy="1919" rx="27" ry="3" fill="#1a2a6a" opacity="0.56" transform="rotate(25 1153 1919)"/><ellipse cx="2075" cy="1875" rx="38" ry="2" fill="#1a4a9a" opacity="0.70" transform="rotate(0 2075 1875)"/><ellipse cx="2179" cy="1846" rx="33" ry="6" fill="#4a8ae0" opacity="0.94" transform="rotate(5 2179 1846)"/><ellipse cx="1569" cy="1897" rx="16" ry="5" fill="#f0d050" opacity="0.64" transform="rotate(9 1569 1897)"/><ellipse cx="296" cy="1914" rx="18" ry="4" fill="#1a2a6a" opacity="0.54" transform="rotate(-3 296 1914)"/><ellipse cx="669" cy="1903" rx="30" ry="6" fill="#1a4a9a" opacity="0.76" transform="rotate(29 669 1903)"/><ellipse cx="2112" cy="1819" rx="20" ry="2" fill="#7a3ad0" opacity="0.63" transform="rotate(7 2112 1819)"/><ellipse cx="2328" cy="1800" rx="26" ry="3" fill="#2a9a9a" opacity="0.69" transform="rotate(-37 2328 1800)"/><ellipse cx="1138" cy="1899" rx="35" ry="4" fill="#2a9a9a" opacity="0.50" transform="rotate(-28 1138 1899)"/><ellipse cx="2843" cy="1845" rx="9" ry="2" fill="#1a2a6a" opacity="0.79" transform="rotate(15 2843 1845)"/><ellipse cx="316" cy="1867" rx="37" ry="7" fill="#7a3ad0" opacity="0.78" transform="rotate(23 316 1867)"/><ellipse cx="1844" cy="1832" rx="27" ry="5" fill="#f0d050" opacity="0.65" transform="rotate(-18 1844 1832)"/><ellipse cx="-12" cy="1841" rx="30" ry="6" fill="#7a3ad0" opacity="0.94" transform="rotate(-20 -12 1841)"/><ellipse cx="226" cy="1900" rx="25" ry="2" fill="#8a1a1a" opacity="0.67" transform="rotate(-8 226 1900)"/><ellipse cx="37" cy="1851" rx="39" ry="5" fill="#8a1a1a" opacity="0.57" transform="rotate(-8 37 1851)"/><ellipse cx="2238" cy="1803" rx="8" ry="2" fill="#e02a4a" opacity="0.81" transform="rotate(-39 2238 1803)"/><ellipse cx="913" cy="1897" rx="7" ry="3" fill="#d03a2a" opacity="0.71" transform="rotate(-13 913 1897)"/><ellipse cx="2549" cy="1823" rx="11" ry="6" fill="#b02a7a" opacity="0.93" transform="rotate(-26 2549 1823)"/><ellipse cx="1049" cy="1865" rx="36" ry="6" fill="#1a4a9a" opacity="0.65" transform="rotate(-5 1049 1865)"/><ellipse cx="506" cy="1820" rx="36" ry="2" fill="#4a8ae0" opacity="0.71" transform="rotate(-16 506 1820)"/><ellipse cx="845" cy="1803" rx="7" ry="2" fill="#d03a2a" opacity="0.75" transform="rotate(32 845 1803)"/><ellipse cx="730" cy="1913" rx="12" ry="2" fill="#8a1a1a" opacity="0.85" transform="rotate(19 730 1913)"/><ellipse cx="1546" cy="1885" rx="35" ry="3" fill="#8a1a1a" opacity="0.86" transform="rotate(39 1546 1885)"/><ellipse cx="2232" cy="1800" rx="35" ry="4" fill="#2a9a9a" opacity="0.63" transform="rotate(-20 2232 1800)"/><ellipse cx="900" cy="1840" rx="40" ry="4" fill="#4a8ae0" opacity="0.85" transform="rotate(-16 900 1840)"/><ellipse cx="1295" cy="1925" rx="35" ry="6" fill="#1a2a6a" opacity="0.81" transform="rotate(17 1295 1925)"/><ellipse cx="756" cy="1916" rx="13" ry="4" fill="#1a2a6a" opacity="0.91" transform="rotate(-24 756 1916)"/><ellipse cx="1073" cy="1804" rx="39" ry="4" fill="#8a1a1a" opacity="0.80" transform="rotate(-25 1073 1804)"/><ellipse cx="130" cy="1798" rx="26" ry="2" fill="#f08a3a" opacity="0.90" transform="rotate(-16 130 1798)"/><ellipse cx="513" cy="1850" rx="10" ry="2" fill="#4a8ae0" opacity="0.77" transform="rotate(39 513 1850)"/><ellipse cx="1517" cy="1884" rx="36" ry="4" fill="#1a2a6a" opacity="0.69" transform="rotate(-34 1517 1884)"/><ellipse cx="2526" cy="1867" rx="14" ry="7" fill="#d03a2a" opacity="0.73" transform="rotate(28 2526 1867)"/><ellipse cx="1434" cy="1825" rx="16" ry="3" fill="#3a9a4a" opacity="0.53" transform="rotate(24 1434 1825)"/><ellipse cx="32" cy="1880" rx="8" ry="4" fill="#1a4a9a" opacity="0.57" transform="rotate(18 32 1880)"/><ellipse cx="1488" cy="1822" rx="17" ry="4" fill="#2a9a9a" opacity="0.50" transform="rotate(-8 1488 1822)"/><ellipse cx="2457" cy="1865" rx="15" ry="7" fill="#1a4a9a" opacity="0.66" transform="rotate(32 2457 1865)"/><ellipse cx="640" cy="1801" rx="9" ry="3" fill="#7a3ad0" opacity="0.50" transform="rotate(-34 640 1801)"/><ellipse cx="1200" cy="1883" rx="23" ry="4" fill="#d03a2a" opacity="0.73" transform="rotate(-14 1200 1883)"/><ellipse cx="749" cy="1837" rx="12" ry="3" fill="#1a2a6a" opacity="0.77" transform="rotate(25 749 1837)"/><ellipse cx="1773" cy="1877" rx="27" ry="6" fill="#1a2a6a" opacity="0.71" transform="rotate(27 1773 1877)"/><ellipse cx="999" cy="1919" rx="31" ry="3" fill="#2a9a9a" opacity="0.74" transform="rotate(-20 999 1919)"/><ellipse cx="913" cy="1870" rx="6" ry="5" fill="#1a4a9a" opacity="0.74" transform="rotate(21 913 1870)"/><ellipse cx="853" cy="1902" rx="21" ry="2" fill="#3ad0c0" opacity="0.66" transform="rotate(-16 853 1902)"/><ellipse cx="806" cy="1820" rx="40" ry="3" fill="#7a3ad0" opacity="0.59" transform="rotate(-21 806 1820)"/><ellipse cx="1091" cy="1876" rx="6" ry="4" fill="#3a9a4a" opacity="0.76" transform="rotate(-17 1091 1876)"/><ellipse cx="2124" cy="1884" rx="18" ry="4" fill="#1a2a6a" opacity="0.52" transform="rotate(11 2124 1884)"/><ellipse cx="1512" cy="1858" rx="11" ry="3" fill="#e02a4a" opacity="0.53" transform="rotate(-15 1512 1858)"/><ellipse cx="2954" cy="1858" rx="32" ry="3" fill="#b02a7a" opacity="0.50" transform="rotate(16 2954 1858)"/><ellipse cx="35" cy="1851" rx="16" ry="5" fill="#e02a4a" opacity="0.92" transform="rotate(38 35 1851)"/><ellipse cx="371" cy="1884" rx="17" ry="2" fill="#7a3ad0" opacity="0.78" transform="rotate(-30 371 1884)"/><ellipse cx="2147" cy="1869" rx="12" ry="3" fill="#e04a9a" opacity="0.89" transform="rotate(12 2147 1869)"/><ellipse cx="2531" cy="1831" rx="12" ry="5" fill="#f0d050" opacity="0.79" transform="rotate(-16 2531 1831)"/><ellipse cx="2316" cy="1838" rx="25" ry="5" fill="#1a2a6a" opacity="0.86" transform="rotate(-24 2316 1838)"/><ellipse cx="359" cy="1912" rx="27" ry="3" fill="#f08a3a" opacity="0.66" transform="rotate(-6 359 1912)"/><ellipse cx="2604" cy="1852" rx="8" ry="2" fill="#8a1a1a" opacity="0.83" transform="rotate(-5 2604 1852)"/><ellipse cx="1787" cy="1850" rx="15" ry="4" fill="#2a9a9a" opacity="0.57" transform="rotate(20 1787 1850)"/><ellipse cx="2690" cy="1797" rx="7" ry="3" fill="#e04a9a" opacity="0.76" transform="rotate(2 2690 1797)"/><ellipse cx="2119" cy="1833" rx="32" ry="2" fill="#e02a4a" opacity="0.76" transform="rotate(-24 2119 1833)"/><ellipse cx="1333" cy="1914" rx="25" ry="3" fill="#5ae0e0" opacity="0.87" transform="rotate(-14 1333 1914)"/><ellipse cx="2295" cy="1817" rx="31" ry="7" fill="#f08a3a" opacity="0.73" transform="rotate(28 2295 1817)"/><ellipse cx="2332" cy="1819" rx="40" ry="2" fill="#1a2a6a" opacity="0.85" transform="rotate(-19 2332 1819)"/><ellipse cx="866" cy="1896" rx="23" ry="4" fill="#d03a2a" opacity="0.67" transform="rotate(-6 866 1896)"/><ellipse cx="1374" cy="1822" rx="22" ry="6" fill="#d03a2a" opacity="0.83" transform="rotate(40 1374 1822)"/><ellipse cx="2650" cy="1891" rx="10" ry="4" fill="#8a1a1a" opacity="0.95" transform="rotate(28 2650 1891)"/><ellipse cx="2423" cy="1886" rx="32" ry="7" fill="#3a9a4a" opacity="0.77" transform="rotate(-13 2423 1886)"/><ellipse cx="340" cy="1872" rx="27" ry="3" fill="#7a3ad0" opacity="0.54" transform="rotate(-20 340 1872)"/><ellipse cx="1047" cy="1860" rx="26" ry="7" fill="#d03a2a" opacity="0.75" transform="rotate(-2 1047 1860)"/><ellipse cx="1101" cy="1862" rx="21" ry="2" fill="#2a9a9a" opacity="0.64" transform="rotate(-15 1101 1862)"/><ellipse cx="2562" cy="1832" rx="26" ry="2" fill="#b02a7a" opacity="0.61" transform="rotate(-18 2562 1832)"/><ellipse cx="2140" cy="1852" rx="10" ry="3" fill="#f0d050" opacity="0.87" transform="rotate(-20 2140 1852)"/><ellipse cx="235" cy="1867" rx="18" ry="3" fill="#1a2a6a" opacity="0.92" transform="rotate(30 235 1867)"/><ellipse cx="1559" cy="1793" rx="8" ry="6" fill="#e02a4a" opacity="0.75" transform="rotate(19 1559 1793)"/><ellipse cx="1148" cy="1872" rx="38" ry="2" fill="#1a2a6a" opacity="0.77" transform="rotate(-24 1148 1872)"/><ellipse cx="2515" cy="1878" rx="17" ry="3" fill="#1a2a6a" opacity="0.90" transform="rotate(29 2515 1878)"/><ellipse cx="1684" cy="1800" rx="38" ry="4" fill="#f08a3a" opacity="0.67" transform="rotate(20 1684 1800)"/><ellipse cx="577" cy="1790" rx="30" ry="6" fill="#2a9a9a" opacity="0.65" transform="rotate(22 577 1790)"/><ellipse cx="303" cy="1861" rx="21" ry="3" fill="#b02a7a" opacity="0.66" transform="rotate(4 303 1861)"/><ellipse cx="2527" cy="1849" rx="23" ry="5" fill="#3a9a4a" opacity="0.67" transform="rotate(37 2527 1849)"/><ellipse cx="749" cy="1891" rx="19" ry="5" fill="#7a3ad0" opacity="0.53" transform="rotate(-16 749 1891)"/><ellipse cx="1604" cy="1911" rx="8" ry="7" fill="#b02a7a" opacity="0.62" transform="rotate(-1 1604 1911)"/><ellipse cx="1745" cy="1899" rx="25" ry="2" fill="#e04a9a" opacity="0.76" transform="rotate(24 1745 1899)"/><ellipse cx="1599" cy="1896" rx="34" ry="6" fill="#3ad0c0" opacity="0.72" transform="rotate(17 1599 1896)"/><ellipse cx="2562" cy="1793" rx="36" ry="3" fill="#3a9a4a" opacity="0.78" transform="rotate(-11 2562 1793)"/><ellipse cx="1309" cy="1868" rx="16" ry="3" fill="#b02a7a" opacity="0.91" transform="rotate(33 1309 1868)"/><ellipse cx="766" cy="1858" rx="39" ry="2" fill="#d03a2a" opacity="0.67" transform="rotate(9 766 1858)"/><ellipse cx="2363" cy="1820" rx="33" ry="4" fill="#2a9a9a" opacity="0.81" transform="rotate(-37 2363 1820)"/><ellipse cx="2359" cy="1885" rx="35" ry="6" fill="#f0d050" opacity="0.76" transform="rotate(-13 2359 1885)"/><ellipse cx="2662" cy="1800" rx="26" ry="6" fill="#f08a3a" opacity="0.89" transform="rotate(-2 2662 1800)"/><ellipse cx="2022" cy="1897" rx="21" ry="4" fill="#d03a2a" opacity="0.52" transform="rotate(27 2022 1897)"/><ellipse cx="624" cy="1871" rx="19" ry="7" fill="#8a1a1a" opacity="0.67" transform="rotate(-32 624 1871)"/><ellipse cx="59" cy="1854" rx="10" ry="7" fill="#b02a7a" opacity="0.88" transform="rotate(13 59 1854)"/><ellipse cx="1986" cy="1852" rx="31" ry="6" fill="#e02a4a" opacity="0.95" transform="rotate(11 1986 1852)"/><ellipse cx="2077" cy="1797" rx="21" ry="7" fill="#e02a4a" opacity="0.93" transform="rotate(5 2077 1797)"/><ellipse cx="46" cy="1900" rx="12" ry="2" fill="#7a3ad0" opacity="0.81" transform="rotate(-19 46 1900)"/><ellipse cx="2047" cy="1823" rx="23" ry="5" fill="#3ad0c0" opacity="0.79" transform="rotate(-30 2047 1823)"/><ellipse cx="481" cy="1900" rx="27" ry="6" fill="#2a9a9a" opacity="0.72" transform="rotate(8 481 1900)"/><ellipse cx="2700" cy="1817" rx="23" ry="4" fill="#f08a3a" opacity="0.54" transform="rotate(-19 2700 1817)"/><ellipse cx="2953" cy="1830" rx="17" ry="4" fill="#4a8ae0" opacity="0.67" transform="rotate(-23 2953 1830)"/><ellipse cx="2809" cy="1801" rx="8" ry="2" fill="#7a3ad0" opacity="0.69" transform="rotate(0 2809 1801)"/><ellipse cx="273" cy="1909" rx="40" ry="5" fill="#7a3ad0" opacity="0.58" transform="rotate(28 273 1909)"/><ellipse cx="202" cy="1828" rx="39" ry="4" fill="#2a9a9a" opacity="0.58" transform="rotate(39 202 1828)"/><ellipse cx="2131" cy="1917" rx="26" ry="5" fill="#b02a7a" opacity="0.85" transform="rotate(3 2131 1917)"/><ellipse cx="885" cy="1859" rx="24" ry="6" fill="#b02a7a" opacity="0.68" transform="rotate(13 885 1859)"/><ellipse cx="2395" cy="1801" rx="11" ry="2" fill="#b02a7a" opacity="0.78" transform="rotate(-18 2395 1801)"/><ellipse cx="286" cy="1851" rx="26" ry="4" fill="#5ae0e0" opacity="0.52" transform="rotate(28 286 1851)"/><ellipse cx="583" cy="1923" rx="21" ry="5" fill="#3ad0c0" opacity="0.83" transform="rotate(5 583 1923)"/><ellipse cx="2039" cy="1827" rx="28" ry="5" fill="#e04a9a" opacity="0.58" transform="rotate(22 2039 1827)"/><ellipse cx="2516" cy="1814" rx="12" ry="4" fill="#3a9a4a" opacity="0.55" transform="rotate(13 2516 1814)"/><ellipse cx="1569" cy="1851" rx="29" ry="6" fill="#f08a3a" opacity="0.91" transform="rotate(-22 1569 1851)"/><ellipse cx="1387" cy="1858" rx="6" ry="6" fill="#f08a3a" opacity="0.65" transform="rotate(-8 1387 1858)"/><ellipse cx="853" cy="1794" rx="12" ry="5" fill="#e02a4a" opacity="0.84" transform="rotate(-11 853 1794)"/><ellipse cx="2760" cy="1916" rx="18" ry="5" fill="#1a2a6a" opacity="0.70" transform="rotate(-22 2760 1916)"/><ellipse cx="1901" cy="1839" rx="30" ry="2" fill="#2a9a9a" opacity="0.53" transform="rotate(13 1901 1839)"/><ellipse cx="2315" cy="1911" rx="39" ry="2" fill="#1a2a6a" opacity="0.60" transform="rotate(39 2315 1911)"/><ellipse cx="1849" cy="1836" rx="35" ry="5" fill="#8a1a1a" opacity="0.88" transform="rotate(-18 1849 1836)"/><ellipse cx="1728" cy="1898" rx="39" ry="2" fill="#e02a4a" opacity="0.88" transform="rotate(27 1728 1898)"/><ellipse cx="893" cy="1836" rx="31" ry="7" fill="#4a8ae0" opacity="0.80" transform="rotate(-19 893 1836)"/><ellipse cx="1873" cy="1825" rx="11" ry="4" fill="#1a2a6a" opacity="0.80" transform="rotate(5 1873 1825)"/><ellipse cx="1080" cy="1880" rx="20" ry="5" fill="#3a9a4a" opacity="0.65" transform="rotate(13 1080 1880)"/><ellipse cx="479" cy="1841" rx="30" ry="6" fill="#3ad0c0" opacity="0.81" transform="rotate(-9 479 1841)"/><ellipse cx="484" cy="1914" rx="31" ry="5" fill="#4a8ae0" opacity="0.93" transform="rotate(-36 484 1914)"/><ellipse cx="491" cy="1920" rx="39" ry="3" fill="#3ad0c0" opacity="0.64" transform="rotate(21 491 1920)"/><ellipse cx="535" cy="1871" rx="15" ry="5" fill="#5ae0e0" opacity="0.66" transform="rotate(22 535 1871)"/><ellipse cx="962" cy="1847" rx="30" ry="3" fill="#4a8ae0" opacity="0.63" transform="rotate(26 962 1847)"/><ellipse cx="83" cy="1923" rx="34" ry="5" fill="#3ad0c0" opacity="0.55" transform="rotate(19 83 1923)"/><ellipse cx="510" cy="1795" rx="19" ry="6" fill="#f0d050" opacity="0.89" transform="rotate(-1 510 1795)"/><ellipse cx="1188" cy="1892" rx="9" ry="2" fill="#1a2a6a" opacity="0.77" transform="rotate(-22 1188 1892)"/><ellipse cx="216" cy="1843" rx="30" ry="3" fill="#1a4a9a" opacity="0.74" transform="rotate(21 216 1843)"/><ellipse cx="106" cy="1871" rx="15" ry="4" fill="#d03a2a" opacity="0.62" transform="rotate(-1 106 1871)"/><ellipse cx="153" cy="1919" rx="13" ry="2" fill="#7a3ad0" opacity="0.51" transform="rotate(-6 153 1919)"/><ellipse cx="2459" cy="1884" rx="15" ry="5" fill="#1a4a9a" opacity="0.81" transform="rotate(13 2459 1884)"/><ellipse cx="651" cy="1824" rx="23" ry="2" fill="#5ae0e0" opacity="0.95" transform="rotate(32 651 1824)"/><ellipse cx="1031" cy="1883" rx="21" ry="6" fill="#1a2a6a" opacity="0.70" transform="rotate(23 1031 1883)"/><ellipse cx="2146" cy="1822" rx="40" ry="5" fill="#4a8ae0" opacity="0.57" transform="rotate(-32 2146 1822)"/><ellipse cx="193" cy="1833" rx="8" ry="2" fill="#7a3ad0" opacity="0.57" transform="rotate(-16 193 1833)"/><ellipse cx="825" cy="1858" rx="10" ry="5" fill="#1a2a6a" opacity="0.93" transform="rotate(18 825 1858)"/><ellipse cx="304" cy="1879" rx="13" ry="7" fill="#e04a9a" opacity="0.60" transform="rotate(-28 304 1879)"/><ellipse cx="1322" cy="1893" rx="24" ry="7" fill="#3ad0c0" opacity="0.51" transform="rotate(-5 1322 1893)"/><ellipse cx="52" cy="1898" rx="29" ry="4" fill="#8a1a1a" opacity="0.90" transform="rotate(-19 52 1898)"/><ellipse cx="1819" cy="1806" rx="39" ry="4" fill="#5ae0e0" opacity="0.77" transform="rotate(-5 1819 1806)"/><ellipse cx="320" cy="1897" rx="28" ry="4" fill="#2a9a9a" opacity="0.81" transform="rotate(23 320 1897)"/><ellipse cx="1896" cy="1802" rx="23" ry="2" fill="#1a2a6a" opacity="0.61" transform="rotate(-20 1896 1802)"/><ellipse cx="837" cy="1897" rx="18" ry="3" fill="#8a1a1a" opacity="0.75" transform="rotate(15 837 1897)"/><ellipse cx="2215" cy="1863" rx="6" ry="4" fill="#f0d050" opacity="0.94" transform="rotate(-4 2215 1863)"/><ellipse cx="2793" cy="1867" rx="22" ry="2" fill="#e02a4a" opacity="0.56" transform="rotate(-10 2793 1867)"/><ellipse cx="557" cy="1918" rx="38" ry="6" fill="#f0d050" opacity="0.73" transform="rotate(-19 557 1918)"/><ellipse cx="1458" cy="1791" rx="7" ry="4" fill="#1a2a6a" opacity="0.57" transform="rotate(8 1458 1791)"/><ellipse cx="1581" cy="1812" rx="27" ry="2" fill="#5ae0e0" opacity="0.63" transform="rotate(38 1581 1812)"/><ellipse cx="517" cy="1793" rx="22" ry="4" fill="#5ae0e0" opacity="0.55" transform="rotate(-20 517 1793)"/><ellipse cx="2687" cy="1909" rx="23" ry="5" fill="#1a4a9a" opacity="0.76" transform="rotate(-26 2687 1909)"/><ellipse cx="1932" cy="1833" rx="14" ry="2" fill="#f0d050" opacity="0.54" transform="rotate(17 1932 1833)"/><ellipse cx="900" cy="1847" rx="23" ry="3" fill="#3ad0c0" opacity="0.82" transform="rotate(39 900 1847)"/><ellipse cx="2112" cy="1833" rx="39" ry="4" fill="#8a1a1a" opacity="0.69" transform="rotate(-22 2112 1833)"/><ellipse cx="68" cy="1800" rx="22" ry="5" fill="#4a8ae0" opacity="0.74" transform="rotate(31 68 1800)"/><ellipse cx="1399" cy="1840" rx="22" ry="4" fill="#1a2a6a" opacity="0.51" transform="rotate(-26 1399 1840)"/><ellipse cx="512" cy="1846" rx="18" ry="5" fill="#d03a2a" opacity="0.88" transform="rotate(-6 512 1846)"/><ellipse cx="1042" cy="1867" rx="12" ry="6" fill="#b02a7a" opacity="0.69" transform="rotate(-0 1042 1867)"/><ellipse cx="2434" cy="1887" rx="12" ry="2" fill="#e04a9a" opacity="0.68" transform="rotate(-31 2434 1887)"/><ellipse cx="2272" cy="1909" rx="37" ry="6" fill="#d03a2a" opacity="0.91" transform="rotate(-3 2272 1909)"/><ellipse cx="866" cy="1830" rx="24" ry="6" fill="#1a2a6a" opacity="0.62" transform="rotate(14 866 1830)"/><ellipse cx="1000" cy="1851" rx="12" ry="2" fill="#3a9a4a" opacity="0.73" transform="rotate(-12 1000 1851)"/><ellipse cx="1" cy="1827" rx="13" ry="6" fill="#b02a7a" opacity="0.62" transform="rotate(21 1 1827)"/><ellipse cx="279" cy="1892" rx="37" ry="3" fill="#4a8ae0" opacity="0.51" transform="rotate(-17 279 1892)"/><ellipse cx="336" cy="1882" rx="18" ry="3" fill="#8a1a1a" opacity="0.58" transform="rotate(25 336 1882)"/><ellipse cx="1904" cy="1816" rx="31" ry="4" fill="#1a2a6a" opacity="0.80" transform="rotate(-37 1904 1816)"/><ellipse cx="966" cy="1876" rx="9" ry="6" fill="#b02a7a" opacity="0.82" transform="rotate(-18 966 1876)"/><ellipse cx="2892" cy="1850" rx="35" ry="5" fill="#3ad0c0" opacity="0.58" transform="rotate(-2 2892 1850)"/><ellipse cx="887" cy="1882" rx="37" ry="3" fill="#3a9a4a" opacity="0.73" transform="rotate(-3 887 1882)"/><ellipse cx="1671" cy="1883" rx="14" ry="4" fill="#e04a9a" opacity="0.56" transform="rotate(-3 1671 1883)"/><ellipse cx="2596" cy="1891" rx="24" ry="4" fill="#7a3ad0" opacity="0.67" transform="rotate(-4 2596 1891)"/><ellipse cx="789" cy="1918" rx="18" ry="3" fill="#8a1a1a" opacity="0.82" transform="rotate(-2 789 1918)"/><ellipse cx="2867" cy="1859" rx="11" ry="7" fill="#f08a3a" opacity="0.51" transform="rotate(37 2867 1859)"/><ellipse cx="1227" cy="1859" rx="40" ry="3" fill="#f08a3a" opacity="0.70" transform="rotate(-16 1227 1859)"/><ellipse cx="2196" cy="1903" rx="11" ry="6" fill="#f0d050" opacity="0.80" transform="rotate(-18 2196 1903)"/><ellipse cx="2699" cy="1821" rx="38" ry="3" fill="#1a2a6a" opacity="0.71" transform="rotate(14 2699 1821)"/><ellipse cx="905" cy="1799" rx="25" ry="5" fill="#1a2a6a" opacity="0.52" transform="rotate(8 905 1799)"/><ellipse cx="426" cy="1862" rx="17" ry="2" fill="#e02a4a" opacity="0.55" transform="rotate(4 426 1862)"/><ellipse cx="2274" cy="1896" rx="31" ry="7" fill="#f08a3a" opacity="0.75" transform="rotate(32 2274 1896)"/><ellipse cx="730" cy="1861" rx="14" ry="3" fill="#2a9a9a" opacity="0.83" transform="rotate(-21 730 1861)"/><ellipse cx="1167" cy="1901" rx="11" ry="6" fill="#4a8ae0" opacity="0.78" transform="rotate(26 1167 1901)"/><ellipse cx="2126" cy="1848" rx="20" ry="6" fill="#b02a7a" opacity="0.50" transform="rotate(38 2126 1848)"/><ellipse cx="654" cy="1887" rx="14" ry="6" fill="#4a8ae0" opacity="0.69" transform="rotate(-30 654 1887)"/><ellipse cx="2285" cy="1822" rx="20" ry="7" fill="#e02a4a" opacity="0.61" transform="rotate(-35 2285 1822)"/><ellipse cx="203" cy="1857" rx="28" ry="6" fill="#3ad0c0" opacity="0.94" transform="rotate(-30 203 1857)"/><ellipse cx="72" cy="1801" rx="22" ry="5" fill="#f0d050" opacity="0.87" transform="rotate(25 72 1801)"/><ellipse cx="926" cy="1791" rx="34" ry="5" fill="#d03a2a" opacity="0.56" transform="rotate(15 926 1791)"/><ellipse cx="2704" cy="1829" rx="12" ry="4" fill="#5ae0e0" opacity="0.73" transform="rotate(-13 2704 1829)"/><ellipse cx="2335" cy="1883" rx="38" ry="2" fill="#1a2a6a" opacity="0.81" transform="rotate(17 2335 1883)"/><ellipse cx="612" cy="1879" rx="34" ry="5" fill="#1a4a9a" opacity="0.61" transform="rotate(-23 612 1879)"/><ellipse cx="2552" cy="1894" rx="29" ry="2" fill="#1a4a9a" opacity="0.66" transform="rotate(10 2552 1894)"/><ellipse cx="1971" cy="1842" rx="18" ry="3" fill="#1a2a6a" opacity="0.92" transform="rotate(38 1971 1842)"/><ellipse cx="2918" cy="1853" rx="37" ry="5" fill="#e02a4a" opacity="0.88" transform="rotate(-39 2918 1853)"/><ellipse cx="1274" cy="1799" rx="31" ry="4" fill="#e02a4a" opacity="0.80" transform="rotate(14 1274 1799)"/><ellipse cx="331" cy="1825" rx="17" ry="6" fill="#8a1a1a" opacity="0.87" transform="rotate(31 331 1825)"/><ellipse cx="2472" cy="1797" rx="6" ry="2" fill="#8a1a1a" opacity="0.87" transform="rotate(27 2472 1797)"/><ellipse cx="2529" cy="1847" rx="7" ry="7" fill="#3ad0c0" opacity="0.82" transform="rotate(1 2529 1847)"/><ellipse cx="1674" cy="1857" rx="16" ry="2" fill="#e04a9a" opacity="0.58" transform="rotate(7 1674 1857)"/><ellipse cx="1566" cy="1803" rx="35" ry="2" fill="#b02a7a" opacity="0.84" transform="rotate(28 1566 1803)"/><ellipse cx="855" cy="1892" rx="10" ry="5" fill="#b02a7a" opacity="0.73" transform="rotate(19 855 1892)"/><ellipse cx="1876" cy="1835" rx="25" ry="5" fill="#7a3ad0" opacity="0.72" transform="rotate(-40 1876 1835)"/><ellipse cx="2950" cy="1882" rx="20" ry="4" fill="#1a4a9a" opacity="0.63" transform="rotate(-32 2950 1882)"/><ellipse cx="1376" cy="1886" rx="28" ry="2" fill="#3a9a4a" opacity="0.52" transform="rotate(40 1376 1886)"/><ellipse cx="1191" cy="1852" rx="8" ry="6" fill="#b02a7a" opacity="0.88" transform="rotate(-25 1191 1852)"/><ellipse cx="1018" cy="1848" rx="24" ry="6" fill="#2a9a9a" opacity="0.94" transform="rotate(29 1018 1848)"/><ellipse cx="2129" cy="1829" rx="29" ry="3" fill="#1a4a9a" opacity="0.65" transform="rotate(-35 2129 1829)"/><ellipse cx="161" cy="1913" rx="5" ry="2" fill="#f0d050" opacity="0.65" transform="rotate(-8 161 1913)"/><ellipse cx="2404" cy="1903" rx="38" ry="2" fill="#3ad0c0" opacity="0.72" transform="rotate(-26 2404 1903)"/><ellipse cx="2285" cy="1887" rx="30" ry="4" fill="#7a3ad0" opacity="0.65" transform="rotate(-15 2285 1887)"/><ellipse cx="212" cy="1908" rx="10" ry="6" fill="#8a1a1a" opacity="0.63" transform="rotate(22 212 1908)"/><ellipse cx="1172" cy="1892" rx="18" ry="3" fill="#4a8ae0" opacity="0.72" transform="rotate(-6 1172 1892)"/><ellipse cx="1910" cy="1827" rx="34" ry="6" fill="#5ae0e0" opacity="0.73" transform="rotate(-15 1910 1827)"/><ellipse cx="913" cy="1917" rx="39" ry="3" fill="#1a4a9a" opacity="0.67" transform="rotate(12 913 1917)"/><ellipse cx="1544" cy="1871" rx="14" ry="6" fill="#1a2a6a" opacity="0.71" transform="rotate(15 1544 1871)"/><ellipse cx="973" cy="1827" rx="18" ry="4" fill="#f0d050" opacity="0.70" transform="rotate(27 973 1827)"/><ellipse cx="1197" cy="1804" rx="36" ry="4" fill="#4a8ae0" opacity="0.79" transform="rotate(22 1197 1804)"/><ellipse cx="670" cy="1808" rx="34" ry="2" fill="#d03a2a" opacity="0.72" transform="rotate(27 670 1808)"/><ellipse cx="2221" cy="1868" rx="23" ry="5" fill="#f08a3a" opacity="0.57" transform="rotate(-2 2221 1868)"/><ellipse cx="2509" cy="1884" rx="15" ry="3" fill="#3ad0c0" opacity="0.84" transform="rotate(-29 2509 1884)"/><ellipse cx="2723" cy="1825" rx="9" ry="3" fill="#e02a4a" opacity="0.66" transform="rotate(-17 2723 1825)"/><ellipse cx="1398" cy="1796" rx="19" ry="3" fill="#d03a2a" opacity="0.76" transform="rotate(-29 1398 1796)"/><ellipse cx="1407" cy="1902" rx="40" ry="6" fill="#3a9a4a" opacity="0.79" transform="rotate(31 1407 1902)"/><ellipse cx="695" cy="1892" rx="26" ry="3" fill="#5ae0e0" opacity="0.89" transform="rotate(-10 695 1892)"/><ellipse cx="1963" cy="1832" rx="31" ry="3" fill="#7a3ad0" opacity="0.85" transform="rotate(-36 1963 1832)"/><ellipse cx="812" cy="1906" rx="36" ry="6" fill="#f08a3a" opacity="0.85" transform="rotate(-22 812 1906)"/><ellipse cx="204" cy="1910" rx="27" ry="3" fill="#3a9a4a" opacity="0.63" transform="rotate(32 204 1910)"/><ellipse cx="276" cy="1795" rx="24" ry="3" fill="#3ad0c0" opacity="0.68" transform="rotate(-39 276 1795)"/><ellipse cx="2101" cy="1872" rx="34" ry="5" fill="#e02a4a" opacity="0.80" transform="rotate(-7 2101 1872)"/><ellipse cx="695" cy="1893" rx="13" ry="5" fill="#f0d050" opacity="0.73" transform="rotate(-20 695 1893)"/><ellipse cx="1286" cy="1842" rx="8" ry="7" fill="#b02a7a" opacity="0.88" transform="rotate(-39 1286 1842)"/><ellipse cx="1823" cy="1837" rx="14" ry="3" fill="#3ad0c0" opacity="0.66" transform="rotate(35 1823 1837)"/><ellipse cx="1390" cy="1836" rx="39" ry="2" fill="#f08a3a" opacity="0.71" transform="rotate(6 1390 1836)"/><ellipse cx="890" cy="1842" rx="38" ry="5" fill="#8a1a1a" opacity="0.66" transform="rotate(-21 890 1842)"/><ellipse cx="836" cy="1814" rx="23" ry="3" fill="#f08a3a" opacity="0.74" transform="rotate(-21 836 1814)"/><ellipse cx="-10" cy="1817" rx="32" ry="6" fill="#f0d050" opacity="0.93" transform="rotate(1 -10 1817)"/><ellipse cx="214" cy="1851" rx="33" ry="2" fill="#f0d050" opacity="0.64" transform="rotate(22 214 1851)"/><ellipse cx="449" cy="1899" rx="18" ry="3" fill="#b02a7a" opacity="0.75" transform="rotate(13 449 1899)"/><ellipse cx="878" cy="1817" rx="22" ry="4" fill="#3a9a4a" opacity="0.68" transform="rotate(18 878 1817)"/><ellipse cx="2611" cy="1799" rx="29" ry="6" fill="#2a9a9a" opacity="0.71" transform="rotate(-8 2611 1799)"/><ellipse cx="377" cy="1820" rx="19" ry="3" fill="#e02a4a" opacity="0.78" transform="rotate(-36 377 1820)"/><ellipse cx="975" cy="1881" rx="13" ry="6" fill="#3ad0c0" opacity="0.72" transform="rotate(31 975 1881)"/><ellipse cx="2881" cy="1834" rx="18" ry="5" fill="#e02a4a" opacity="0.93" transform="rotate(1 2881 1834)"/><ellipse cx="887" cy="1903" rx="12" ry="6" fill="#d03a2a" opacity="0.56" transform="rotate(-5 887 1903)"/><ellipse cx="2574" cy="1853" rx="31" ry="4" fill="#d03a2a" opacity="0.62" transform="rotate(-16 2574 1853)"/><ellipse cx="544" cy="1827" rx="22" ry="3" fill="#4a8ae0" opacity="0.79" transform="rotate(-22 544 1827)"/><ellipse cx="254" cy="1805" rx="7" ry="2" fill="#4a8ae0" opacity="0.78" transform="rotate(13 254 1805)"/><ellipse cx="2696" cy="1905" rx="40" ry="2" fill="#e02a4a" opacity="0.85" transform="rotate(-15 2696 1905)"/><ellipse cx="2048" cy="1815" rx="32" ry="2" fill="#8a1a1a" opacity="0.78" transform="rotate(10 2048 1815)"/><ellipse cx="1019" cy="1925" rx="13" ry="6" fill="#f0d050" opacity="0.64" transform="rotate(-10 1019 1925)"/><ellipse cx="2401" cy="1909" rx="39" ry="3" fill="#7a3ad0" opacity="0.65" transform="rotate(32 2401 1909)"/><ellipse cx="418" cy="1890" rx="17" ry="4" fill="#e02a4a" opacity="0.58" transform="rotate(16 418 1890)"/><ellipse cx="938" cy="1855" rx="24" ry="2" fill="#1a4a9a" opacity="0.55" transform="rotate(28 938 1855)"/><ellipse cx="963" cy="1907" rx="16" ry="4" fill="#3a9a4a" opacity="0.86" transform="rotate(29 963 1907)"/><ellipse cx="164" cy="1835" rx="34" ry="5" fill="#e02a4a" opacity="0.93" transform="rotate(11 164 1835)"/><ellipse cx="2517" cy="1810" rx="5" ry="4" fill="#3a9a4a" opacity="0.51" transform="rotate(2 2517 1810)"/><ellipse cx="2768" cy="1908" rx="28" ry="5" fill="#1a2a6a" opacity="0.71" transform="rotate(23 2768 1908)"/><ellipse cx="232" cy="1915" rx="8" ry="2" fill="#f08a3a" opacity="0.64" transform="rotate(-27 232 1915)"/><ellipse cx="816" cy="1866" rx="37" ry="5" fill="#f0d050" opacity="0.88" transform="rotate(31 816 1866)"/><ellipse cx="1694" cy="1885" rx="38" ry="7" fill="#8a1a1a" opacity="0.60" transform="rotate(15 1694 1885)"/><ellipse cx="49" cy="1793" rx="6" ry="3" fill="#f08a3a" opacity="0.60" transform="rotate(6 49 1793)"/><ellipse cx="252" cy="1792" rx="5" ry="2" fill="#b02a7a" opacity="0.92" transform="rotate(30 252 1792)"/><ellipse cx="1611" cy="1840" rx="10" ry="5" fill="#f0d050" opacity="0.78" transform="rotate(-18 1611 1840)"/><ellipse cx="829" cy="1884" rx="5" ry="3" fill="#e02a4a" opacity="0.50" transform="rotate(-14 829 1884)"/><ellipse cx="2116" cy="1897" rx="10" ry="5" fill="#3a9a4a" opacity="0.74" transform="rotate(-37 2116 1897)"/><ellipse cx="1241" cy="1838" rx="32" ry="6" fill="#3a9a4a" opacity="0.64" transform="rotate(22 1241 1838)"/><ellipse cx="2838" cy="1909" rx="14" ry="5" fill="#4a8ae0" opacity="0.76" transform="rotate(18 2838 1909)"/><ellipse cx="2540" cy="1831" rx="7" ry="6" fill="#f0d050" opacity="0.79" transform="rotate(-14 2540 1831)"/><ellipse cx="2377" cy="1819" rx="33" ry="6" fill="#2a9a9a" opacity="0.58" transform="rotate(-7 2377 1819)"/><ellipse cx="264" cy="1821" rx="16" ry="3" fill="#f0d050" opacity="0.59" transform="rotate(26 264 1821)"/><ellipse cx="2124" cy="1898" rx="25" ry="2" fill="#f0d050" opacity="0.66" transform="rotate(22 2124 1898)"/><ellipse cx="1899" cy="1859" rx="32" ry="4" fill="#e02a4a" opacity="0.54" transform="rotate(-23 1899 1859)"/><ellipse cx="156" cy="1824" rx="30" ry="2" fill="#3a9a4a" opacity="0.72" transform="rotate(35 156 1824)"/><ellipse cx="2029" cy="1804" rx="37" ry="5" fill="#2a9a9a" opacity="0.89" transform="rotate(-29 2029 1804)"/><ellipse cx="1140" cy="1880" rx="7" ry="3" fill="#e02a4a" opacity="0.91" transform="rotate(-1 1140 1880)"/><ellipse cx="1858" cy="1796" rx="12" ry="2" fill="#e02a4a" opacity="0.57" transform="rotate(-9 1858 1796)"/><ellipse cx="2020" cy="1917" rx="20" ry="6" fill="#7a3ad0" opacity="0.68" transform="rotate(-12 2020 1917)"/><ellipse cx="991" cy="1888" rx="35" ry="4" fill="#e02a4a" opacity="0.63" transform="rotate(-9 991 1888)"/><ellipse cx="902" cy="1874" rx="36" ry="6" fill="#3a9a4a" opacity="0.68" transform="rotate(-2 902 1874)"/><ellipse cx="2280" cy="1910" rx="18" ry="6" fill="#1a4a9a" opacity="0.88" transform="rotate(25 2280 1910)"/><ellipse cx="1165" cy="1818" rx="19" ry="6" fill="#7a3ad0" opacity="0.80" transform="rotate(-31 1165 1818)"/><ellipse cx="2950" cy="1829" rx="31" ry="5" fill="#f0d050" opacity="0.68" transform="rotate(-35 2950 1829)"/><ellipse cx="861" cy="1794" rx="22" ry="3" fill="#e04a9a" opacity="0.60" transform="rotate(-24 861 1794)"/><ellipse cx="2805" cy="1876" rx="22" ry="4" fill="#e02a4a" opacity="0.76" transform="rotate(6 2805 1876)"/><ellipse cx="827" cy="1876" rx="18" ry="4" fill="#5ae0e0" opacity="0.65" transform="rotate(14 827 1876)"/><ellipse cx="2892" cy="1886" rx="11" ry="6" fill="#3a9a4a" opacity="0.85" transform="rotate(26 2892 1886)"/><ellipse cx="2763" cy="1860" rx="36" ry="5" fill="#d03a2a" opacity="0.87" transform="rotate(3 2763 1860)"/><ellipse cx="2822" cy="1910" rx="28" ry="4" fill="#1a2a6a" opacity="0.64" transform="rotate(-22 2822 1910)"/><ellipse cx="1663" cy="1840" rx="25" ry="2" fill="#f08a3a" opacity="0.94" transform="rotate(22 1663 1840)"/><ellipse cx="2044" cy="1875" rx="12" ry="5" fill="#2a9a9a" opacity="0.59" transform="rotate(17 2044 1875)"/><ellipse cx="2480" cy="1862" rx="10" ry="5" fill="#b02a7a" opacity="0.75" transform="rotate(-15 2480 1862)"/><ellipse cx="1608" cy="1918" rx="40" ry="2" fill="#3a9a4a" opacity="0.92" transform="rotate(27 1608 1918)"/><ellipse cx="2519" cy="1907" rx="17" ry="2" fill="#e04a9a" opacity="0.68" transform="rotate(32 2519 1907)"/><ellipse cx="1303" cy="1865" rx="31" ry="6" fill="#d03a2a" opacity="0.55" transform="rotate(0 1303 1865)"/><ellipse cx="1541" cy="1829" rx="24" ry="4" fill="#4a8ae0" opacity="0.81" transform="rotate(28 1541 1829)"/><ellipse cx="2706" cy="1863" rx="16" ry="5" fill="#e04a9a" opacity="0.92" transform="rotate(-28 2706 1863)"/><ellipse cx="1983" cy="1852" rx="33" ry="3" fill="#4a8ae0" opacity="0.52" transform="rotate(21 1983 1852)"/><ellipse cx="2928" cy="1813" rx="23" ry="5" fill="#e04a9a" opacity="0.67" transform="rotate(14 2928 1813)"/><ellipse cx="2827" cy="1918" rx="8" ry="7" fill="#8a1a1a" opacity="0.71" transform="rotate(24 2827 1918)"/><ellipse cx="1038" cy="1913" rx="37" ry="3" fill="#5ae0e0" opacity="0.71" transform="rotate(1 1038 1913)"/><ellipse cx="176" cy="1844" rx="12" ry="5" fill="#b02a7a" opacity="0.86" transform="rotate(27 176 1844)"/><ellipse cx="869" cy="1913" rx="8" ry="4" fill="#d03a2a" opacity="0.90" transform="rotate(28 869 1913)"/><ellipse cx="2867" cy="1820" rx="11" ry="4" fill="#e04a9a" opacity="0.72" transform="rotate(-27 2867 1820)"/><ellipse cx="2682" cy="1836" rx="35" ry="3" fill="#5ae0e0" opacity="0.86" transform="rotate(3 2682 1836)"/><ellipse cx="992" cy="1826" rx="27" ry="4" fill="#1a4a9a" opacity="0.68" transform="rotate(17 992 1826)"/><ellipse cx="2108" cy="1818" rx="16" ry="3" fill="#f08a3a" opacity="0.90" transform="rotate(-36 2108 1818)"/><ellipse cx="768" cy="1879" rx="14" ry="4" fill="#b02a7a" opacity="0.86" transform="rotate(-14 768 1879)"/><ellipse cx="20" cy="1894" rx="36" ry="5" fill="#8a1a1a" opacity="0.90" transform="rotate(-8 20 1894)"/><ellipse cx="61" cy="1806" rx="19" ry="7" fill="#7a3ad0" opacity="0.69" transform="rotate(-1 61 1806)"/><ellipse cx="1352" cy="1908" rx="7" ry="5" fill="#d03a2a" opacity="0.51" transform="rotate(-13 1352 1908)"/><ellipse cx="1455" cy="1839" rx="9" ry="2" fill="#f0d050" opacity="0.71" transform="rotate(36 1455 1839)"/><ellipse cx="1506" cy="1858" rx="14" ry="7" fill="#b02a7a" opacity="0.92" transform="rotate(11 1506 1858)"/><ellipse cx="1669" cy="1828" rx="15" ry="2" fill="#4a8ae0" opacity="0.90" transform="rotate(-22 1669 1828)"/><ellipse cx="2269" cy="1819" rx="8" ry="4" fill="#3a9a4a" opacity="0.79" transform="rotate(13 2269 1819)"/><ellipse cx="2766" cy="1860" rx="25" ry="3" fill="#4a8ae0" opacity="0.77" transform="rotate(-5 2766 1860)"/><ellipse cx="792" cy="1808" rx="31" ry="2" fill="#e02a4a" opacity="0.60" transform="rotate(-21 792 1808)"/><ellipse cx="654" cy="1824" rx="33" ry="2" fill="#7a3ad0" opacity="0.81" transform="rotate(3 654 1824)"/><ellipse cx="579" cy="1889" rx="14" ry="5" fill="#3ad0c0" opacity="0.57" transform="rotate(8 579 1889)"/><ellipse cx="702" cy="1845" rx="34" ry="6" fill="#3a9a4a" opacity="0.79" transform="rotate(33 702 1845)"/><ellipse cx="1958" cy="1839" rx="34" ry="7" fill="#5ae0e0" opacity="0.78" transform="rotate(-15 1958 1839)"/><ellipse cx="635" cy="1805" rx="21" ry="6" fill="#b02a7a" opacity="0.52" transform="rotate(-27 635 1805)"/><ellipse cx="1951" cy="1812" rx="25" ry="5" fill="#b02a7a" opacity="0.64" transform="rotate(-37 1951 1812)"/><ellipse cx="2427" cy="1818" rx="31" ry="2" fill="#e04a9a" opacity="0.91" transform="rotate(-16 2427 1818)"/><ellipse cx="1046" cy="1918" rx="23" ry="5" fill="#2a9a9a" opacity="0.89" transform="rotate(0 1046 1918)"/><ellipse cx="1564" cy="1923" rx="8" ry="6" fill="#3ad0c0" opacity="0.91" transform="rotate(-16 1564 1923)"/><ellipse cx="2305" cy="1814" rx="35" ry="4" fill="#2a9a9a" opacity="0.60" transform="rotate(-20 2305 1814)"/><ellipse cx="1294" cy="1833" rx="13" ry="3" fill="#3ad0c0" opacity="0.69" transform="rotate(-36 1294 1833)"/><ellipse cx="2020" cy="1907" rx="32" ry="2" fill="#7a3ad0" opacity="0.92" transform="rotate(37 2020 1907)"/><ellipse cx="256" cy="1796" rx="17" ry="4" fill="#e04a9a" opacity="0.81" transform="rotate(-38 256 1796)"/><ellipse cx="2342" cy="1825" rx="32" ry="6" fill="#d03a2a" opacity="0.55" transform="rotate(-19 2342 1825)"/><ellipse cx="2456" cy="1798" rx="17" ry="5" fill="#3a9a4a" opacity="0.69" transform="rotate(-37 2456 1798)"/><ellipse cx="1013" cy="1848" rx="12" ry="7" fill="#3a9a4a" opacity="0.65" transform="rotate(34 1013 1848)"/><ellipse cx="2082" cy="1851" rx="26" ry="2" fill="#d03a2a" opacity="0.69" transform="rotate(30 2082 1851)"/><ellipse cx="1766" cy="1822" rx="34" ry="3" fill="#5ae0e0" opacity="0.55" transform="rotate(5 1766 1822)"/><ellipse cx="2681" cy="1899" rx="19" ry="4" fill="#8a1a1a" opacity="0.86" transform="rotate(-32 2681 1899)"/><ellipse cx="2728" cy="1809" rx="6" ry="6" fill="#b02a7a" opacity="0.91" transform="rotate(10 2728 1809)"/><ellipse cx="302" cy="1796" rx="12" ry="2" fill="#e02a4a" opacity="0.67" transform="rotate(22 302 1796)"/><ellipse cx="2711" cy="1847" rx="37" ry="4" fill="#e04a9a" opacity="0.84" transform="rotate(8 2711 1847)"/><ellipse cx="2210" cy="1806" rx="39" ry="2" fill="#1a4a9a" opacity="0.74" transform="rotate(18 2210 1806)"/><ellipse cx="408" cy="1833" rx="27" ry="2" fill="#f0d050" opacity="0.75" transform="rotate(-35 408 1833)"/><ellipse cx="2576" cy="1889" rx="10" ry="2" fill="#1a2a6a" opacity="0.87" transform="rotate(-14 2576 1889)"/><ellipse cx="385" cy="1859" rx="23" ry="3" fill="#8a1a1a" opacity="0.61" transform="rotate(35 385 1859)"/><ellipse cx="2516" cy="1794" rx="12" ry="2" fill="#1a2a6a" opacity="0.75" transform="rotate(4 2516 1794)"/><ellipse cx="1524" cy="1828" rx="8" ry="7" fill="#4a8ae0" opacity="0.86" transform="rotate(-37 1524 1828)"/><ellipse cx="1100" cy="1853" rx="36" ry="7" fill="#f0d050" opacity="0.53" transform="rotate(-5 1100 1853)"/><ellipse cx="2076" cy="1874" rx="12" ry="3" fill="#b02a7a" opacity="0.91" transform="rotate(39 2076 1874)"/><ellipse cx="1430" cy="1812" rx="36" ry="3" fill="#f0d050" opacity="0.52" transform="rotate(-38 1430 1812)"/><ellipse cx="2629" cy="1863" rx="36" ry="5" fill="#2a9a9a" opacity="0.55" transform="rotate(40 2629 1863)"/><ellipse cx="371" cy="1881" rx="22" ry="6" fill="#e04a9a" opacity="0.63" transform="rotate(31 371 1881)"/><ellipse cx="977" cy="1829" rx="18" ry="3" fill="#e02a4a" opacity="0.75" transform="rotate(-31 977 1829)"/><ellipse cx="571" cy="1922" rx="10" ry="5" fill="#1a2a6a" opacity="0.89" transform="rotate(-17 571 1922)"/><ellipse cx="1327" cy="1824" rx="37" ry="3" fill="#5ae0e0" opacity="0.81" transform="rotate(-5 1327 1824)"/><ellipse cx="2737" cy="1825" rx="22" ry="5" fill="#b02a7a" opacity="0.92" transform="rotate(-5 2737 1825)"/><ellipse cx="1270" cy="1841" rx="38" ry="5" fill="#e04a9a" opacity="0.63" transform="rotate(-15 1270 1841)"/><ellipse cx="660" cy="1811" rx="19" ry="6" fill="#8a1a1a" opacity="0.93" transform="rotate(11 660 1811)"/><ellipse cx="1275" cy="1801" rx="9" ry="2" fill="#d03a2a" opacity="0.69" transform="rotate(24 1275 1801)"/><ellipse cx="105" cy="1858" rx="20" ry="3" fill="#3ad0c0" opacity="0.61" transform="rotate(-15 105 1858)"/><ellipse cx="1060" cy="1844" rx="37" ry="6" fill="#f08a3a" opacity="0.65" transform="rotate(-21 1060 1844)"/><ellipse cx="968" cy="1846" rx="7" ry="5" fill="#3ad0c0" opacity="0.92" transform="rotate(18 968 1846)"/><ellipse cx="1672" cy="1890" rx="20" ry="5" fill="#e02a4a" opacity="0.57" transform="rotate(-30 1672 1890)"/><ellipse cx="1549" cy="1880" rx="28" ry="6" fill="#3ad0c0" opacity="0.57" transform="rotate(-21 1549 1880)"/><ellipse cx="2" cy="1823" rx="11" ry="3" fill="#1a4a9a" opacity="0.52" transform="rotate(37 2 1823)"/><ellipse cx="1532" cy="1866" rx="38" ry="6" fill="#1a4a9a" opacity="0.84" transform="rotate(-9 1532 1866)"/><ellipse cx="931" cy="1792" rx="6" ry="7" fill="#2a9a9a" opacity="0.72" transform="rotate(-4 931 1792)"/><ellipse cx="1037" cy="1907" rx="22" ry="2" fill="#5ae0e0" opacity="0.94" transform="rotate(3 1037 1907)"/><ellipse cx="1565" cy="1919" rx="7" ry="6" fill="#3a9a4a" opacity="0.58" transform="rotate(20 1565 1919)"/><ellipse cx="271" cy="1794" rx="26" ry="2" fill="#8a1a1a" opacity="0.58" transform="rotate(19 271 1794)"/><ellipse cx="152" cy="1903" rx="12" ry="6" fill="#e04a9a" opacity="0.79" transform="rotate(-20 152 1903)"/><ellipse cx="210" cy="1908" rx="21" ry="4" fill="#7a3ad0" opacity="0.94" transform="rotate(-14 210 1908)"/><ellipse cx="304" cy="1897" rx="25" ry="3" fill="#3a9a4a" opacity="0.52" transform="rotate(20 304 1897)"/><ellipse cx="500" cy="1870" rx="9" ry="2" fill="#1a4a9a" opacity="0.72" transform="rotate(-33 500 1870)"/><ellipse cx="2560" cy="1822" rx="14" ry="7" fill="#1a4a9a" opacity="0.76" transform="rotate(-22 2560 1822)"/><ellipse cx="2318" cy="1894" rx="31" ry="2" fill="#f0d050" opacity="0.56" transform="rotate(-18 2318 1894)"/><ellipse cx="2" cy="1885" rx="31" ry="3" fill="#e04a9a" opacity="0.82" transform="rotate(21 2 1885)"/><ellipse cx="2529" cy="1857" rx="17" ry="2" fill="#5ae0e0" opacity="0.64" transform="rotate(10 2529 1857)"/><ellipse cx="2010" cy="1831" rx="19" ry="6" fill="#5ae0e0" opacity="0.61" transform="rotate(-28 2010 1831)"/><ellipse cx="1442" cy="1859" rx="10" ry="5" fill="#8a1a1a" opacity="0.70" transform="rotate(-35 1442 1859)"/><ellipse cx="283" cy="1863" rx="32" ry="2" fill="#e04a9a" opacity="0.86" transform="rotate(5 283 1863)"/><ellipse cx="1631" cy="1923" rx="11" ry="2" fill="#b02a7a" opacity="0.57" transform="rotate(-3 1631 1923)"/><ellipse cx="2540" cy="1839" rx="18" ry="3" fill="#4a8ae0" opacity="0.67" transform="rotate(26 2540 1839)"/><ellipse cx="1409" cy="1911" rx="40" ry="5" fill="#7a3ad0" opacity="0.78" transform="rotate(11 1409 1911)"/><ellipse cx="2947" cy="1885" rx="38" ry="5" fill="#8a1a1a" opacity="0.58" transform="rotate(28 2947 1885)"/><ellipse cx="2790" cy="1884" rx="30" ry="3" fill="#3a9a4a" opacity="0.68" transform="rotate(-38 2790 1884)"/><ellipse cx="2476" cy="1830" rx="22" ry="3" fill="#8a1a1a" opacity="0.75" transform="rotate(-37 2476 1830)"/><ellipse cx="1185" cy="1823" rx="30" ry="2" fill="#d03a2a" opacity="0.73" transform="rotate(-18 1185 1823)"/><ellipse cx="496" cy="1907" rx="22" ry="6" fill="#1a2a6a" opacity="0.75" transform="rotate(-35 496 1907)"/><ellipse cx="467" cy="1897" rx="23" ry="2" fill="#e04a9a" opacity="0.66" transform="rotate(6 467 1897)"/><ellipse cx="1376" cy="1918" rx="21" ry="5" fill="#2a9a9a" opacity="0.78" transform="rotate(-6 1376 1918)"/><ellipse cx="790" cy="1797" rx="13" ry="6" fill="#3a9a4a" opacity="0.92" transform="rotate(6 790 1797)"/><ellipse cx="933" cy="1794" rx="31" ry="5" fill="#f08a3a" opacity="0.63" transform="rotate(25 933 1794)"/></svg>
<div class="abs" style="left:0.00px;top:0.00px;width:2940.00px;height:72.00px;background:linear-gradient(90deg,#2f3a56 0%,#323c57 25%,#38425a 40%,#3c465a 50%,#3d4659 60%,#3a4458 78%,#364156 100%)"></div>
<div class="abs" style="left:0.00px;top:72.00px;width:2940.00px;height:3.00px;background:#0e0e10"></div>
<div class="t" style="top:21.73px;font-size:26.9px;color:#f4f4f6;font-weight:bold;left:106.50px;">Numbers</div>
<div class="t" style="top:22.15px;font-size:26.4px;color:#f4f4f6;left:264.50px;">Plik</div>
<div class="t" style="top:22.15px;font-size:26.4px;color:#f4f4f6;left:348.60px;">Edycja</div>
<div class="t" style="top:22.15px;font-size:26.4px;color:#f4f4f6;left:469.00px;">Wstaw</div>
<div class="t" style="top:22.15px;font-size:26.4px;color:#f4f4f6;left:592.00px;">Tabela</div>
<div class="t" style="top:22.15px;font-size:26.4px;color:#f4f4f6;left:710.00px;">Organizuj</div>
<div class="t" style="top:22.15px;font-size:26.4px;color:#f4f4f6;left:866.00px;">Format</div>
<div class="t" style="top:22.15px;font-size:26.4px;color:#f4f4f6;left:993.00px;">Uporządkuj</div>
<div class="t" style="top:22.15px;font-size:26.4px;color:#f4f4f6;left:1174.00px;">Widok</div>
<div class="t" style="top:21.98px;font-size:26.6px;color:#f4f4f6;left:1690.50px;">Okno</div>
<div class="t" style="top:21.98px;font-size:26.6px;color:#f4f4f6;left:1796.00px;">Pomoc</div>
<svg class="abs" style="left:38.00px;top:16.00px;" width="30" height="38" viewBox="0 0 30 38"><path fill="#f2f2f2" d="M24.5 20.2c0-4.1 3.4-6.1 3.5-6.2-1.9-2.8-4.9-3.2-6-3.2-2.5-.3-5 1.5-6.2 1.5-1.3 0-3.3-1.5-5.4-1.4-2.8 0-5.3 1.6-6.8 4.1-2.9 5-.7 12.4 2.1 16.5 1.4 2 3 4.2 5.2 4.1 2.1-.1 2.9-1.3 5.4-1.3s3.2 1.3 5.4 1.3c2.3 0 3.7-2 5.1-4 1.6-2.3 2.2-4.5 2.3-4.6-.1 0-4.5-1.7-4.6-6.8zM20.4 8c1.1-1.4 1.9-3.3 1.7-5.2-1.6.1-3.6 1.1-4.8 2.5-1 1.2-2 3.1-1.7 5 1.8.1 3.6-.9 4.8-2.3z"/></svg>
<svg class="abs" style="left:1962.00px;top:23.00px;" width="32" height="26" viewBox="0 0 32 26"><rect x="1.5" y="1.5" width="29" height="23" rx="3" fill="none" stroke="#f0f0f2" stroke-width="2.5"/><rect x="1.5" y="1.5" width="29" height="6" fill="#f0f0f2"/><g fill="#f0f0f2"><rect x="5" y="11" width="11" height="2"/><rect x="5" y="15" width="11" height="2"/><rect x="5" y="19" width="11" height="2"/></g><text x="23" y="21" font-size="9" fill="#f0f0f2" text-anchor="middle" font-family="Liberation Sans">&#8984;</text></svg>
<svg class="abs" style="left:2036.00px;top:22.00px;" width="30" height="30" viewBox="0 0 30 30"><path d="M4 20 V15 A11 11 0 0 1 26 15 V20" fill="none" stroke="#f0f0f2" stroke-width="3"/><rect x="2" y="17" width="7" height="12" rx="3" fill="#f0f0f2"/><rect x="21" y="17" width="7" height="12" rx="3" fill="#f0f0f2"/></svg>
<svg class="abs" style="left:2106.00px;top:21.00px;" width="32" height="32" viewBox="0 0 32 32"><circle cx="16" cy="16" r="13.5" fill="none" stroke="#f0f0f2" stroke-width="2.6"/><circle cx="16" cy="12.5" r="5" fill="#f0f0f2"/><path d="M7 24 Q16 15 25 24 L22 27 Q16 30 10 27Z" fill="#f0f0f2"/></svg>
<div class="t" style="top:25.95px;font-size:22.5px;color:#f2f2f4;left:2172.00px;">78%</div>
<svg class="abs" style="left:2227.00px;top:22.00px;" width="52" height="28" viewBox="0 0 52 28"><rect x="1.5" y="3" width="43" height="22" rx="6" fill="none" stroke="#9a9ea6" stroke-width="2.4"/><rect x="47" y="10" width="3" height="8" rx="1.5" fill="#9a9ea6"/><rect x="5" y="6.5" width="30" height="15" rx="2.5" fill="#f0f0f2"/><path d="M17 2 v7 M27 2 v7" stroke="#343d55" stroke-width="5"/><path d="M15 8 h14 v6 q0 5 -5 6 v6 h-4 v-6 q-5 -1 -5 -6z" fill="#343d55"/><path d="M18 2 v7 M26 2 v7" stroke="#f0f0f2" stroke-width="2.6"/><path d="M16.5 9.5 h11 v4.5 q0 4 -4 4.8 v6 h-3 v-6 q-4 -.8 -4 -4.8z" fill="#f0f0f2"/></svg>
<svg class="abs" style="left:2312.00px;top:21.00px;" width="32" height="32" viewBox="0 0 32 32"><circle cx="16" cy="16" r="13.5" fill="none" stroke="#f0f0f2" stroke-width="2.6"/><path d="M12.5 10 L22 16 L12.5 22Z" fill="#f0f0f2"/></svg>
<svg class="abs" style="left:2382.00px;top:22.00px;" width="36" height="28" viewBox="0 0 36 28"><path d="M2 10 A23 23 0 0 1 34 10" fill="none" stroke="#f0f0f2" stroke-width="3.4" stroke-linecap="round"/><path d="M7.5 15.5 A15 15 0 0 1 28.5 15.5" fill="none" stroke="#f0f0f2" stroke-width="3.4" stroke-linecap="round"/><path d="M13 21 A7.5 7.5 0 0 1 23 21" fill="none" stroke="#f0f0f2" stroke-width="3.4" stroke-linecap="round"/><circle cx="18" cy="25" r="2.4" fill="#f0f0f2"/></svg>
<svg class="abs" style="left:2455.00px;top:23.00px;" width="30" height="30" viewBox="0 0 30 30"><circle cx="12" cy="12" r="9" fill="none" stroke="#f0f0f2" stroke-width="3"/><path d="M18.5 18.5 L27 27" stroke="#f0f0f2" stroke-width="3.4" stroke-linecap="round"/></svg>
<svg class="abs" style="left:2511.00px;top:22.00px;" width="34" height="30" viewBox="0 0 34 30"><rect x="1.5" y="1.5" width="31" height="12" rx="6" fill="none" stroke="#f0f0f2" stroke-width="2.6"/><circle cx="8" cy="7.5" r="4" fill="#f0f0f2"/><rect x="1.5" y="16.5" width="31" height="12" rx="6" fill="#f0f0f2"/><circle cx="26" cy="22.5" r="4" fill="#343d55"/></svg>
<svg class="abs" style="left:2549.00px;top:31.00px;" width="9" height="9" viewBox="0 0 9 9"><circle cx="4.5" cy="4.5" r="4" fill="#e0913a"/></svg>
<div class="abs" style="left:2586.00px;top:22.00px;width:29.00px;height:29.00px;border-radius:50%;background:conic-gradient(from 200deg,#e23a7a,#8a3ad8,#3a8ae8,#3ad8c8,#e8d84a,#e23a7a)"></div>
<div class="abs" style="left:2586.00px;top:22.00px;width:29.00px;height:29.00px;border-radius:50%;background:radial-gradient(circle at 55% 55%,rgba(255,255,255,.9) 0,rgba(255,255,255,.35) 25%,rgba(40,30,80,.2) 60%,rgba(30,20,60,.55) 100%)"></div>
<div class="t" style="top:21.89px;font-size:27.3px;color:#f4f4f6;left:2647.00px;">Sob. 30.09</div>
<div class="t" style="top:21.72px;font-size:27.5px;color:#f4f4f6;left:2797.00px;">12:39:38</div>
<div class="abs" style="left:0.00px;top:73.00px;width:470.00px;height:1730.00px;background:#0c0c0d;border-radius:22px 0 0 22px"></div>
<div class="abs" style="left:1.00px;top:74.00px;width:470.00px;height:1727.00px;background:#1e1f22;border-radius:21px 0 0 21px;border-top:1.5px solid #7a7a7a;border-left:1px solid #3a3a3a"></div>
<div class="abs" style="left:4.00px;top:75.00px;width:460.00px;height:55.00px;background:#2b2b2d;border-radius:19px 0 0 0"></div>
<svg class="abs" style="left:19.00px;top:89.00px;" width="26" height="26" viewBox="0 0 26 26"><circle cx="13" cy="13" r="12" fill="#ed6a5e"/><path d="M8.5 8.5 L17.5 17.5 M17.5 8.5 L8.5 17.5" stroke="#8c1a10" stroke-width="2.2"/></svg>
<svg class="abs" style="left:59.00px;top:89.00px;" width="26" height="26" viewBox="0 0 26 26"><circle cx="13" cy="13" r="12" fill="#f5bf4f"/><path d="M6.5 13 H19.5" stroke="#8a5a10" stroke-width="2.6"/></svg>
<svg class="abs" style="left:99.00px;top:89.00px;" width="26" height="26" viewBox="0 0 26 26"><circle cx="13" cy="13" r="12" fill="#61c554"/><path d="M7.5 18.5 L7.5 10 L16 18.5Z M18.5 7.5 L10 7.5 L18.5 16Z" fill="#1e5a10"/></svg>
<div class="abs" style="left:4px;top:130px;width:446px;height:1343px;overflow:hidden;border-radius:0 0 0 17px;background:#7a962f">
<svg class="abs" style="left:0;top:0" width="446" height="1343"><defs><pattern id="pitchS" width="89.6" height="89.6" patternUnits="userSpaceOnUse"><g fill="#939634" transform="scale(5.6)"><rect x="10" y="0" width="1" height="1"/><rect x="12" y="0" width="1" height="1"/><rect x="15" y="0" width="1" height="1"/><rect x="4" y="1" width="1" height="1"/><rect x="5" y="1" width="1" height="1"/><rect x="7" y="1" width="1" height="1"/><rect x="10" y="1" width="1" height="1"/><rect x="11" y="2" width="1" height="1"/><rect x="2" y="3" width="1" height="1"/><rect x="8" y="3" width="1" height="1"/><rect x="12" y="3" width="1" height="1"/><rect x="0" y="4" width="1" height="1"/><rect x="2" y="4" width="1" height="1"/><rect x="3" y="4" width="1" height="1"/><rect x="10" y="4" width="1" height="1"/><rect x="12" y="4" width="1" height="1"/><rect x="8" y="5" width="1" height="1"/><rect x="15" y="5" width="1" height="1"/><rect x="0" y="6" width="1" height="1"/><rect x="11" y="6" width="1" height="1"/><rect x="7" y="7" width="1" height="1"/><rect x="8" y="7" width="1" height="1"/><rect x="2" y="8" width="1" height="1"/><rect x="10" y="8" width="1" height="1"/><rect x="13" y="8" width="1" height="1"/><rect x="1" y="9" width="1" height="1"/><rect x="8" y="9" width="1" height="1"/><rect x="9" y="9" width="1" height="1"/><rect x="10" y="9" width="1" height="1"/><rect x="14" y="9" width="1" height="1"/><rect x="4" y="10" width="1" height="1"/><rect x="8" y="11" width="1" height="1"/><rect x="2" y="12" width="1" height="1"/><rect x="4" y="12" width="1" height="1"/><rect x="13" y="12" width="1" height="1"/><rect x="1" y="13" width="1" height="1"/><rect x="0" y="14" width="1" height="1"/><rect x="7" y="14" width="1" height="1"/><rect x="2" y="15" width="1" height="1"/><rect x="3" y="15" width="1" height="1"/><rect x="5" y="15" width="1" height="1"/><rect x="10" y="15" width="1" height="1"/><rect x="11" y="15" width="1" height="1"/><rect x="13" y="15" width="1" height="1"/></g></pattern><pattern id="pitchD" width="89.6" height="89.6" patternUnits="userSpaceOnUse"><g fill="#939634" transform="scale(5.6)"><rect x="0" y="0" width="1" height="1"/><rect x="1" y="0" width="1" height="1"/><rect x="3" y="0" width="1" height="1"/><rect x="9" y="0" width="1" height="1"/><rect x="10" y="0" width="1" height="1"/><rect x="11" y="0" width="1" height="1"/><rect x="12" y="0" width="1" height="1"/><rect x="13" y="0" width="1" height="1"/><rect x="15" y="0" width="1" height="1"/><rect x="0" y="1" width="1" height="1"/><rect x="1" y="1" width="1" height="1"/><rect x="3" y="1" width="1" height="1"/><rect x="6" y="1" width="1" height="1"/><rect x="9" y="1" width="1" height="1"/><rect x="12" y="1" width="1" height="1"/><rect x="13" y="1" width="1" height="1"/><rect x="0" y="2" width="1" height="1"/><rect x="5" y="2" width="1" height="1"/><rect x="7" y="2" width="1" height="1"/><rect x="12" y="2" width="1" height="1"/><rect x="0" y="3" width="1" height="1"/><rect x="2" y="3" width="1" height="1"/><rect x="5" y="3" width="1" height="1"/><rect x="6" y="3" width="1" height="1"/><rect x="7" y="3" width="1" height="1"/><rect x="10" y="3" width="1" height="1"/><rect x="11" y="3" width="1" height="1"/><rect x="13" y="3" width="1" height="1"/><rect x="15" y="3" width="1" height="1"/><rect x="0" y="4" width="1" height="1"/><rect x="2" y="4" width="1" height="1"/><rect x="3" y="4" width="1" height="1"/><rect x="4" y="4" width="1" height="1"/><rect x="9" y="4" width="1" height="1"/><rect x="11" y="4" width="1" height="1"/><rect x="12" y="4" width="1" height="1"/><rect x="13" y="4" width="1" height="1"/><rect x="14" y="4" width="1" height="1"/><rect x="1" y="5" width="1" height="1"/><rect x="4" y="5" width="1" height="1"/><rect x="5" y="5" width="1" height="1"/><rect x="8" y="5" width="1" height="1"/><rect x="11" y="5" width="1" height="1"/><rect x="13" y="5" width="1" height="1"/><rect x="14" y="5" width="1" height="1"/><rect x="15" y="5" width="1" height="1"/><rect x="1" y="6" width="1" height="1"/><rect x="3" y="6" width="1" height="1"/><rect x="4" y="6" width="1" height="1"/><rect x="7" y="6" width="1" height="1"/><rect x="9" y="6" width="1" height="1"/><rect x="10" y="6" width="1" height="1"/><rect x="11" y="6" width="1" height="1"/><rect x="14" y="6" width="1" height="1"/><rect x="15" y="6" width="1" height="1"/><rect x="0" y="7" width="1" height="1"/><rect x="1" y="7" width="1" height="1"/><rect x="4" y="7" width="1" height="1"/><rect x="5" y="7" width="1" height="1"/><rect x="6" y="7" width="1" height="1"/><rect x="9" y="7" width="1" height="1"/><rect x="11" y="7" width="1" height="1"/><rect x="12" y="7" width="1" height="1"/><rect x="13" y="7" width="1" height="1"/><rect x="15" y="7" width="1" height="1"/><rect x="0" y="8" width="1" height="1"/><rect x="2" y="8" width="1" height="1"/><rect x="4" y="8" width="1" height="1"/><rect x="5" y="8" width="1" height="1"/><rect x="6" y="8" width="1" height="1"/><rect x="7" y="8" width="1" height="1"/><rect x="8" y="8" width="1" height="1"/><rect x="9" y="8" width="1" height="1"/><rect x="10" y="8" width="1" height="1"/><rect x="11" y="8" width="1" height="1"/><rect x="12" y="8" width="1" height="1"/><rect x="13" y="8" width="1" height="1"/><rect x="14" y="8" width="1" height="1"/><rect x="1" y="9" width="1" height="1"/><rect x="5" y="9" width="1" height="1"/><rect x="9" y="9" width="1" height="1"/><rect x="10" y="9" width="1" height="1"/><rect x="12" y="9" width="1" height="1"/><rect x="15" y="9" width="1" height="1"/><rect x="0" y="10" width="1" height="1"/><rect x="2" y="10" width="1" height="1"/><rect x="3" y="10" width="1" height="1"/><rect x="5" y="10" width="1" height="1"/><rect x="7" y="10" width="1" height="1"/><rect x="8" y="10" width="1" height="1"/><rect x="10" y="10" width="1" height="1"/><rect x="11" y="10" width="1" height="1"/><rect x="15" y="10" width="1" height="1"/><rect x="0" y="11" width="1" height="1"/><rect x="2" y="11" width="1" height="1"/><rect x="4" y="11" width="1" height="1"/><rect x="5" y="11" width="1" height="1"/><rect x="6" y="11" width="1" height="1"/><rect x="7" y="11" width="1" height="1"/><rect x="9" y="11" width="1" height="1"/><rect x="11" y="11" width="1" height="1"/><rect x="12" y="11" width="1" height="1"/><rect x="13" y="11" width="1" height="1"/><rect x="1" y="12" width="1" height="1"/><rect x="2" y="12" width="1" height="1"/><rect x="4" y="12" width="1" height="1"/><rect x="6" y="12" width="1" height="1"/><rect x="7" y="12" width="1" height="1"/><rect x="8" y="12" width="1" height="1"/><rect x="9" y="12" width="1" height="1"/><rect x="11" y="12" width="1" height="1"/><rect x="14" y="12" width="1" height="1"/><rect x="15" y="12" width="1" height="1"/><rect x="1" y="13" width="1" height="1"/><rect x="2" y="13" width="1" height="1"/><rect x="3" y="13" width="1" height="1"/><rect x="4" y="13" width="1" height="1"/><rect x="5" y="13" width="1" height="1"/><rect x="11" y="13" width="1" height="1"/><rect x="13" y="13" width="1" height="1"/><rect x="0" y="14" width="1" height="1"/><rect x="5" y="14" width="1" height="1"/><rect x="11" y="14" width="1" height="1"/><rect x="13" y="14" width="1" height="1"/><rect x="14" y="14" width="1" height="1"/><rect x="15" y="14" width="1" height="1"/><rect x="0" y="15" width="1" height="1"/><rect x="1" y="15" width="1" height="1"/><rect x="4" y="15" width="1" height="1"/><rect x="7" y="15" width="1" height="1"/><rect x="10" y="15" width="1" height="1"/><rect x="11" y="15" width="1" height="1"/></g></pattern><linearGradient id="shd" x1="0" x2="1"><stop offset="0" stop-color="#000" stop-opacity="0"/><stop offset=".5" stop-color="#000" stop-opacity=".12"/><stop offset="1" stop-color="#000" stop-opacity=".32"/></linearGradient></defs><rect width="446" height="1343" fill="url(#pitchS)" shape-rendering="crispEdges"/><rect x="84.0" y="0" width="184.8" height="1343" fill="#7a962f"/><rect x="84.0" y="0" width="184.8" height="1343" fill="url(#pitchD)" shape-rendering="crispEdges"/><rect x="0" y="683" width="446" height="6" fill="#f2f2ee"/><rect x="391" y="0" width="55" height="1343" fill="url(#shd)"/></svg>
<svg class="abs" style="left:0.00px;top:0.00px;" width="446" height="1343" viewBox="0 0 446 1343"><g fill="#0f2d0a" shape-rendering="crispEdges"><rect x="153.40" y="139.80" width="5.50" height="5.50"/><rect x="158.90" y="139.80" width="5.50" height="5.50"/><rect x="164.40" y="139.80" width="5.50" height="5.50"/><rect x="186.40" y="139.80" width="5.50" height="5.50"/><rect x="191.90" y="139.80" width="5.50" height="5.50"/><rect x="197.40" y="139.80" width="5.50" height="5.50"/><rect x="147.90" y="145.30" width="5.50" height="5.50"/><rect x="169.90" y="145.30" width="5.50" height="5.50"/><rect x="180.90" y="145.30" width="5.50" height="5.50"/><rect x="202.90" y="145.30" width="5.50" height="5.50"/><rect x="263.40" y="145.30" width="5.50" height="5.50"/><rect x="147.90" y="150.80" width="5.50" height="5.50"/><rect x="169.90" y="150.80" width="5.50" height="5.50"/><rect x="180.90" y="150.80" width="5.50" height="5.50"/><rect x="202.90" y="150.80" width="5.50" height="5.50"/><rect x="147.90" y="156.30" width="5.50" height="5.50"/><rect x="169.90" y="156.30" width="5.50" height="5.50"/><rect x="180.90" y="156.30" width="5.50" height="5.50"/><rect x="202.90" y="156.30" width="5.50" height="5.50"/><rect x="219.40" y="156.30" width="5.50" height="5.50"/><rect x="224.90" y="156.30" width="5.50" height="5.50"/><rect x="230.40" y="156.30" width="5.50" height="5.50"/><rect x="241.40" y="156.30" width="5.50" height="5.50"/><rect x="246.90" y="156.30" width="5.50" height="5.50"/><rect x="263.40" y="156.30" width="5.50" height="5.50"/><rect x="274.40" y="156.30" width="5.50" height="5.50"/><rect x="285.40" y="156.30" width="5.50" height="5.50"/><rect x="290.90" y="156.30" width="5.50" height="5.50"/><rect x="312.90" y="156.30" width="5.50" height="5.50"/><rect x="318.40" y="156.30" width="5.50" height="5.50"/><rect x="153.40" y="161.80" width="5.50" height="5.50"/><rect x="158.90" y="161.80" width="5.50" height="5.50"/><rect x="164.40" y="161.80" width="5.50" height="5.50"/><rect x="169.90" y="161.80" width="5.50" height="5.50"/><rect x="180.90" y="161.80" width="5.50" height="5.50"/><rect x="202.90" y="161.80" width="5.50" height="5.50"/><rect x="219.40" y="161.80" width="5.50" height="5.50"/><rect x="235.90" y="161.80" width="5.50" height="5.50"/><rect x="252.40" y="161.80" width="5.50" height="5.50"/><rect x="263.40" y="161.80" width="5.50" height="5.50"/><rect x="274.40" y="161.80" width="5.50" height="5.50"/><rect x="296.40" y="161.80" width="5.50" height="5.50"/><rect x="307.40" y="161.80" width="5.50" height="5.50"/><rect x="323.90" y="161.80" width="5.50" height="5.50"/><rect x="169.90" y="167.30" width="5.50" height="5.50"/><rect x="180.90" y="167.30" width="5.50" height="5.50"/><rect x="202.90" y="167.30" width="5.50" height="5.50"/><rect x="219.40" y="167.30" width="5.50" height="5.50"/><rect x="235.90" y="167.30" width="5.50" height="5.50"/><rect x="252.40" y="167.30" width="5.50" height="5.50"/><rect x="263.40" y="167.30" width="5.50" height="5.50"/><rect x="274.40" y="167.30" width="5.50" height="5.50"/><rect x="296.40" y="167.30" width="5.50" height="5.50"/><rect x="312.90" y="167.30" width="5.50" height="5.50"/><rect x="318.40" y="167.30" width="5.50" height="5.50"/><rect x="169.90" y="172.80" width="5.50" height="5.50"/><rect x="180.90" y="172.80" width="5.50" height="5.50"/><rect x="202.90" y="172.80" width="5.50" height="5.50"/><rect x="219.40" y="172.80" width="5.50" height="5.50"/><rect x="235.90" y="172.80" width="5.50" height="5.50"/><rect x="252.40" y="172.80" width="5.50" height="5.50"/><rect x="263.40" y="172.80" width="5.50" height="5.50"/><rect x="274.40" y="172.80" width="5.50" height="5.50"/><rect x="296.40" y="172.80" width="5.50" height="5.50"/><rect x="323.90" y="172.80" width="5.50" height="5.50"/><rect x="147.90" y="178.30" width="5.50" height="5.50"/><rect x="169.90" y="178.30" width="5.50" height="5.50"/><rect x="180.90" y="178.30" width="5.50" height="5.50"/><rect x="202.90" y="178.30" width="5.50" height="5.50"/><rect x="219.40" y="178.30" width="5.50" height="5.50"/><rect x="235.90" y="178.30" width="5.50" height="5.50"/><rect x="252.40" y="178.30" width="5.50" height="5.50"/><rect x="263.40" y="178.30" width="5.50" height="5.50"/><rect x="274.40" y="178.30" width="5.50" height="5.50"/><rect x="296.40" y="178.30" width="5.50" height="5.50"/><rect x="307.40" y="178.30" width="5.50" height="5.50"/><rect x="153.40" y="183.80" width="5.50" height="5.50"/><rect x="158.90" y="183.80" width="5.50" height="5.50"/><rect x="164.40" y="183.80" width="5.50" height="5.50"/><rect x="186.40" y="183.80" width="5.50" height="5.50"/><rect x="191.90" y="183.80" width="5.50" height="5.50"/><rect x="197.40" y="183.80" width="5.50" height="5.50"/><rect x="219.40" y="183.80" width="5.50" height="5.50"/><rect x="235.90" y="183.80" width="5.50" height="5.50"/><rect x="252.40" y="183.80" width="5.50" height="5.50"/><rect x="263.40" y="183.80" width="5.50" height="5.50"/><rect x="274.40" y="183.80" width="5.50" height="5.50"/><rect x="296.40" y="183.80" width="5.50" height="5.50"/><rect x="312.90" y="183.80" width="5.50" height="5.50"/><rect x="318.40" y="183.80" width="5.50" height="5.50"/><rect x="334.90" y="183.80" width="5.50" height="5.50"/></g><g fill="#f0f0ee" shape-rendering="crispEdges"><rect x="142.40" y="128.80" width="5.50" height="5.50"/><rect x="147.90" y="128.80" width="5.50" height="5.50"/><rect x="153.40" y="128.80" width="5.50" height="5.50"/><rect x="175.40" y="128.80" width="5.50" height="5.50"/><rect x="180.90" y="128.80" width="5.50" height="5.50"/><rect x="186.40" y="128.80" width="5.50" height="5.50"/><rect x="136.90" y="134.30" width="5.50" height="5.50"/><rect x="158.90" y="134.30" width="5.50" height="5.50"/><rect x="169.90" y="134.30" width="5.50" height="5.50"/><rect x="191.90" y="134.30" width="5.50" height="5.50"/><rect x="252.40" y="134.30" width="5.50" height="5.50"/><rect x="136.90" y="139.80" width="5.50" height="5.50"/><rect x="158.90" y="139.80" width="5.50" height="5.50"/><rect x="169.90" y="139.80" width="5.50" height="5.50"/><rect x="191.90" y="139.80" width="5.50" height="5.50"/><rect x="136.90" y="145.30" width="5.50" height="5.50"/><rect x="158.90" y="145.30" width="5.50" height="5.50"/><rect x="169.90" y="145.30" width="5.50" height="5.50"/><rect x="191.90" y="145.30" width="5.50" height="5.50"/><rect x="208.40" y="145.30" width="5.50" height="5.50"/><rect x="213.90" y="145.30" width="5.50" height="5.50"/><rect x="219.40" y="145.30" width="5.50" height="5.50"/><rect x="230.40" y="145.30" width="5.50" height="5.50"/><rect x="235.90" y="145.30" width="5.50" height="5.50"/><rect x="252.40" y="145.30" width="5.50" height="5.50"/><rect x="263.40" y="145.30" width="5.50" height="5.50"/><rect x="274.40" y="145.30" width="5.50" height="5.50"/><rect x="279.90" y="145.30" width="5.50" height="5.50"/><rect x="301.90" y="145.30" width="5.50" height="5.50"/><rect x="307.40" y="145.30" width="5.50" height="5.50"/><rect x="142.40" y="150.80" width="5.50" height="5.50"/><rect x="147.90" y="150.80" width="5.50" height="5.50"/><rect x="153.40" y="150.80" width="5.50" height="5.50"/><rect x="158.90" y="150.80" width="5.50" height="5.50"/><rect x="169.90" y="150.80" width="5.50" height="5.50"/><rect x="191.90" y="150.80" width="5.50" height="5.50"/><rect x="208.40" y="150.80" width="5.50" height="5.50"/><rect x="224.90" y="150.80" width="5.50" height="5.50"/><rect x="241.40" y="150.80" width="5.50" height="5.50"/><rect x="252.40" y="150.80" width="5.50" height="5.50"/><rect x="263.40" y="150.80" width="5.50" height="5.50"/><rect x="285.40" y="150.80" width="5.50" height="5.50"/><rect x="296.40" y="150.80" width="5.50" height="5.50"/><rect x="312.90" y="150.80" width="5.50" height="5.50"/><rect x="158.90" y="156.30" width="5.50" height="5.50"/><rect x="169.90" y="156.30" width="5.50" height="5.50"/><rect x="191.90" y="156.30" width="5.50" height="5.50"/><rect x="208.40" y="156.30" width="5.50" height="5.50"/><rect x="224.90" y="156.30" width="5.50" height="5.50"/><rect x="241.40" y="156.30" width="5.50" height="5.50"/><rect x="252.40" y="156.30" width="5.50" height="5.50"/><rect x="263.40" y="156.30" width="5.50" height="5.50"/><rect x="285.40" y="156.30" width="5.50" height="5.50"/><rect x="301.90" y="156.30" width="5.50" height="5.50"/><rect x="307.40" y="156.30" width="5.50" height="5.50"/><rect x="158.90" y="161.80" width="5.50" height="5.50"/><rect x="169.90" y="161.80" width="5.50" height="5.50"/><rect x="191.90" y="161.80" width="5.50" height="5.50"/><rect x="208.40" y="161.80" width="5.50" height="5.50"/><rect x="224.90" y="161.80" width="5.50" height="5.50"/><rect x="241.40" y="161.80" width="5.50" height="5.50"/><rect x="252.40" y="161.80" width="5.50" height="5.50"/><rect x="263.40" y="161.80" width="5.50" height="5.50"/><rect x="285.40" y="161.80" width="5.50" height="5.50"/><rect x="312.90" y="161.80" width="5.50" height="5.50"/><rect x="136.90" y="167.30" width="5.50" height="5.50"/><rect x="158.90" y="167.30" width="5.50" height="5.50"/><rect x="169.90" y="167.30" width="5.50" height="5.50"/><rect x="191.90" y="167.30" width="5.50" height="5.50"/><rect x="208.40" y="167.30" width="5.50" height="5.50"/><rect x="224.90" y="167.30" width="5.50" height="5.50"/><rect x="241.40" y="167.30" width="5.50" height="5.50"/><rect x="252.40" y="167.30" width="5.50" height="5.50"/><rect x="263.40" y="167.30" width="5.50" height="5.50"/><rect x="285.40" y="167.30" width="5.50" height="5.50"/><rect x="296.40" y="167.30" width="5.50" height="5.50"/><rect x="142.40" y="172.80" width="5.50" height="5.50"/><rect x="147.90" y="172.80" width="5.50" height="5.50"/><rect x="153.40" y="172.80" width="5.50" height="5.50"/><rect x="175.40" y="172.80" width="5.50" height="5.50"/><rect x="180.90" y="172.80" width="5.50" height="5.50"/><rect x="186.40" y="172.80" width="5.50" height="5.50"/><rect x="208.40" y="172.80" width="5.50" height="5.50"/><rect x="224.90" y="172.80" width="5.50" height="5.50"/><rect x="241.40" y="172.80" width="5.50" height="5.50"/><rect x="252.40" y="172.80" width="5.50" height="5.50"/><rect x="263.40" y="172.80" width="5.50" height="5.50"/><rect x="285.40" y="172.80" width="5.50" height="5.50"/><rect x="301.90" y="172.80" width="5.50" height="5.50"/><rect x="307.40" y="172.80" width="5.50" height="5.50"/><rect x="323.90" y="172.80" width="5.50" height="5.50"/></g></svg>
<svg class="abs" style="left:0.00px;top:0.00px;" width="446" height="1343" viewBox="0 0 446 1343"><g fill="#0f2d0a" shape-rendering="crispEdges"><rect x="377.80" y="1041.10" width="5.50" height="5.50"/><rect x="383.30" y="1041.10" width="5.50" height="5.50"/><rect x="388.80" y="1041.10" width="5.50" height="5.50"/><rect x="394.30" y="1041.10" width="5.50" height="5.50"/><rect x="410.80" y="1041.10" width="5.50" height="5.50"/><rect x="416.30" y="1041.10" width="5.50" height="5.50"/><rect x="421.80" y="1041.10" width="5.50" height="5.50"/><rect x="427.30" y="1041.10" width="5.50" height="5.50"/><rect x="443.80" y="1041.10" width="5.50" height="5.50"/><rect x="377.80" y="1046.60" width="5.50" height="5.50"/><rect x="399.80" y="1046.60" width="5.50" height="5.50"/><rect x="410.80" y="1046.60" width="5.50" height="5.50"/><rect x="432.80" y="1046.60" width="5.50" height="5.50"/><rect x="443.80" y="1046.60" width="5.50" height="5.50"/><rect x="377.80" y="1052.10" width="5.50" height="5.50"/><rect x="383.30" y="1052.10" width="5.50" height="5.50"/><rect x="388.80" y="1052.10" width="5.50" height="5.50"/><rect x="394.30" y="1052.10" width="5.50" height="5.50"/><rect x="410.80" y="1052.10" width="5.50" height="5.50"/><rect x="416.30" y="1052.10" width="5.50" height="5.50"/><rect x="421.80" y="1052.10" width="5.50" height="5.50"/><rect x="427.30" y="1052.10" width="5.50" height="5.50"/><rect x="443.80" y="1052.10" width="5.50" height="5.50"/><rect x="377.80" y="1057.60" width="5.50" height="5.50"/><rect x="399.80" y="1057.60" width="5.50" height="5.50"/><rect x="410.80" y="1057.60" width="5.50" height="5.50"/><rect x="427.30" y="1057.60" width="5.50" height="5.50"/><rect x="443.80" y="1057.60" width="5.50" height="5.50"/><rect x="377.80" y="1063.10" width="5.50" height="5.50"/><rect x="383.30" y="1063.10" width="5.50" height="5.50"/><rect x="388.80" y="1063.10" width="5.50" height="5.50"/><rect x="394.30" y="1063.10" width="5.50" height="5.50"/><rect x="410.80" y="1063.10" width="5.50" height="5.50"/><rect x="432.80" y="1063.10" width="5.50" height="5.50"/><rect x="449.30" y="1063.10" width="5.50" height="5.50"/></g><g fill="#f0f0ee" shape-rendering="crispEdges"><rect x="366.80" y="1030.10" width="5.50" height="5.50"/><rect x="372.30" y="1030.10" width="5.50" height="5.50"/><rect x="377.80" y="1030.10" width="5.50" height="5.50"/><rect x="383.30" y="1030.10" width="5.50" height="5.50"/><rect x="399.80" y="1030.10" width="5.50" height="5.50"/><rect x="405.30" y="1030.10" width="5.50" height="5.50"/><rect x="410.80" y="1030.10" width="5.50" height="5.50"/><rect x="416.30" y="1030.10" width="5.50" height="5.50"/><rect x="432.80" y="1030.10" width="5.50" height="5.50"/><rect x="366.80" y="1035.60" width="5.50" height="5.50"/><rect x="388.80" y="1035.60" width="5.50" height="5.50"/><rect x="399.80" y="1035.60" width="5.50" height="5.50"/><rect x="421.80" y="1035.60" width="5.50" height="5.50"/><rect x="432.80" y="1035.60" width="5.50" height="5.50"/><rect x="366.80" y="1041.10" width="5.50" height="5.50"/><rect x="372.30" y="1041.10" width="5.50" height="5.50"/><rect x="377.80" y="1041.10" width="5.50" height="5.50"/><rect x="383.30" y="1041.10" width="5.50" height="5.50"/><rect x="399.80" y="1041.10" width="5.50" height="5.50"/><rect x="405.30" y="1041.10" width="5.50" height="5.50"/><rect x="410.80" y="1041.10" width="5.50" height="5.50"/><rect x="416.30" y="1041.10" width="5.50" height="5.50"/><rect x="432.80" y="1041.10" width="5.50" height="5.50"/><rect x="366.80" y="1046.60" width="5.50" height="5.50"/><rect x="388.80" y="1046.60" width="5.50" height="5.50"/><rect x="399.80" y="1046.60" width="5.50" height="5.50"/><rect x="416.30" y="1046.60" width="5.50" height="5.50"/><rect x="432.80" y="1046.60" width="5.50" height="5.50"/><rect x="366.80" y="1052.10" width="5.50" height="5.50"/><rect x="372.30" y="1052.10" width="5.50" height="5.50"/><rect x="377.80" y="1052.10" width="5.50" height="5.50"/><rect x="383.30" y="1052.10" width="5.50" height="5.50"/><rect x="399.80" y="1052.10" width="5.50" height="5.50"/><rect x="421.80" y="1052.10" width="5.50" height="5.50"/><rect x="438.30" y="1052.10" width="5.50" height="5.50"/></g></svg>
</div>
<div class="abs" style="left:4.00px;top:1473.00px;width:140.00px;height:328.00px;background:#1e1f22"></div>
<div class="abs" style="left:144.00px;top:1473.00px;width:310.00px;height:328.00px;background:#232428"></div>
<svg class="abs" style="left:24.00px;top:1473.00px;" width="96" height="31" viewBox="0 0 96 31"><circle cx="48" cy="-17" r="48" fill="#2e2f34"/></svg>
<div class="abs" style="left:160.00px;top:1473.00px;width:33.00px;height:27.00px;background:linear-gradient(#c9a23a,#e0b840);border-radius:0 0 0 6px"></div>
<svg class="abs" style="left:197.00px;top:1479.00px;" width="28" height="22" viewBox="0 0 28 22"><rect x="1" y="2" width="18" height="17" rx="4" fill="#cfd0d3"/><path d="M19 8 L26 4 V17 L19 13Z" fill="#cfd0d3"/></svg>
<div class="abs" style="left:236px;top:1473px;width:200px;height:12px;overflow:hidden"><div class="t" style="left:0;top:-17px;font-size:25px;font-weight:bold;color:#d0d2d6">Go Live</div></div>
<div class="abs" style="left:144.00px;top:1516.00px;width:310.00px;height:2.00px;background:#35363b"></div>
<svg class="abs" style="left:24.00px;top:1520.00px;" width="96" height="96" viewBox="0 0 96 96"><circle cx="48" cy="48" r="48" fill="#2e2f35"/><circle cx="48" cy="48" r="20" fill="#4ea562"/><path d="M60 36 L52 52 L36 60 L44 44Z" fill="#2e2f35"/><circle cx="48" cy="48" r="2.8" fill="#4ea562"/></svg>
<div class="abs" style="left:40.00px;top:1632.00px;width:64.00px;height:4.00px;background:#35363c;border-radius:2px"></div>
<svg class="abs" style="left:24.00px;top:1652.00px;" width="96" height="96" viewBox="0 0 96 96"><circle cx="48" cy="48" r="48" fill="#2e2f35"/><path d="M48 28 V50 M38 41 L48 51 L58 41" fill="none" stroke="#4ea562" stroke-width="4"/><path d="M38 55 V62 H58 V55" fill="none" stroke="#4ea562" stroke-width="4"/></svg>
<svg class="abs" style="left:162.00px;top:1536.00px;" width="28" height="30" viewBox="0 0 28 30"><g fill="#9a9ca3"><rect x="1" y="22" width="6" height="6" rx="1"/><rect x="10" y="13" width="6" height="15" rx="1"/><rect x="19" y="2" width="6" height="26" rx="1"/></g></svg>
<div class="t" style="top:1540.33px;font-size:25.6px;color:#52b96b;font-weight:bold;left:201.00px;">Nawiązano połączenie</div>
<div class="t" style="top:1574.04px;font-size:22.4px;color:#b9bbbe;left:161.00px;">Rus-Semitic Haven / POLITICS</div>
<div class="abs" style="left:160.00px;top:1614.00px;width:139.00px;height:64.00px;background:#2e2f35;border-radius:8px"></div>
<svg class="abs" style="left:212.00px;top:1632.00px;" width="34" height="24" viewBox="0 0 34 24"><rect x="1" y="1" width="23" height="23" rx="5" fill="#fff"/><path d="M24 9 L33 4 V20 L24 15Z" fill="#fff"/></svg>
<div class="abs" style="left:315.00px;top:1614.00px;width:150.00px;height:64.00px;background:linear-gradient(90deg,#4fa562 0%,#4fa562 55%,#3a7a48 100%);border-radius:8px"></div>
<svg class="abs" style="left:366.00px;top:1626.00px;" width="36" height="36" viewBox="0 0 36 36"><rect x="1" y="1" width="34" height="25" rx="3" fill="#f2f2f2"/><path d="M9 20 Q12 10 22 10 V6 L28 12 L22 18 V14 Q14 14 9 20Z" fill="#4fa562"/><rect x="16" y="26" width="4" height="6" fill="#f2f2f2"/><rect x="9" y="31" width="18" height="3" fill="#f2f2f2"/></svg>
<div class="abs" style="left:144.00px;top:1693.00px;width:310.00px;height:2.00px;background:#35363b"></div>
<svg class="abs" style="left:160.00px;top:1716.00px;" width="64" height="64" viewBox="0 0 64 64"><defs><clipPath id="avc"><circle cx="32" cy="32" r="31"/></clipPath><radialGradient id="av" cx="40%" cy="35%" r="70%"><stop offset="0" stop-color="#6a6a6a"/><stop offset=".7" stop-color="#2a2a2a"/><stop offset="1" stop-color="#111"/></radialGradient></defs><g clip-path="url(#avc)"><rect width="64" height="64" fill="url(#av)"/><path d="M6 34 Q8 12 30 10 Q52 10 58 30 L54 46 Q40 50 30 48 Q14 46 6 34Z" fill="#9a9a9a"/><path d="M10 30 Q16 16 32 14 L34 20 Q20 22 14 34Z" fill="#e8e8e8"/><path d="M18 10 L40 38" stroke="#f4f4f4" stroke-width="4"/><path d="M34 36 L60 40 M36 44 L58 50 M42 30 L44 58 M52 32 L54 58" stroke="#111" stroke-width="3"/><circle cx="24" cy="40" r="6" fill="#333"/><path d="M12 50 L30 60" stroke="#ddd" stroke-width="3"/></g><circle cx="50" cy="51" r="12" fill="#232428"/><circle cx="50" cy="51" r="8.5" fill="#3fa55b"/></svg>
<div class="t" style="top:1723.26px;font-size:24.5px;color:#f2f3f5;font-weight:bold;left:240.00px;">wsky</div>
<div class="t" style="top:1755.95px;font-size:22.5px;color:#b9bbbe;left:240.00px;">Dostępny</div>
<svg class="abs" style="left:434.00px;top:1730.00px;" width="20" height="40" viewBox="0 0 20 40"><rect x="2" y="0" width="14" height="24" rx="7" fill="#b9bbbe"/><path d="M-2 18 Q9 34 20 18" fill="none" stroke="#b9bbbe" stroke-width="3"/></svg>
<div class="abs" style="left:449.00px;top:73.50px;width:2492.00px;height:1729.00px;background:#000;border-radius:15px 0 0 15px"></div>
<div class="abs" style="left:450.00px;top:74.00px;width:2490.00px;height:1728.00px;background:#fff;border-radius:14px 0 0 14px;overflow:hidden"></div>
<div class="abs" style="left:450.00px;top:74.00px;width:2490.00px;height:140.00px;background:linear-gradient(90deg,#5e5e5e 0%,#5f5f5f 60%,#646464 70%,#626262 75.5%,#4a4a4a 78%,#3c3c3c 80%,#383838 100%);border-radius:14px 0 0 0;border-top:1.5px solid #8c8c8c;border-left:1.5px solid #8a8a8a"></div>
<div class="abs" style="left:450.00px;top:213.50px;width:2490.00px;height:1.50px;background:#0a0a0a"></div>
<div class="abs" style="left:450.00px;top:215.00px;width:1978.00px;height:55.00px;background:linear-gradient(90deg,#5c5c5c 0%,#5d5d5d 70%,#5e5e5e 80%,#585858 100%);border-left:1.5px solid #8a8a8a"></div>
<div class="abs" style="left:466.00px;top:90.00px;width:24.00px;height:24.00px;background:#ec6a5e;border-radius:50%"></div>
<div class="abs" style="left:506.00px;top:90.00px;width:24.00px;height:24.00px;background:#f4bf4f;border-radius:50%"></div>
<div class="abs" style="left:546.00px;top:90.00px;width:24.00px;height:24.00px;background:#61c554;border-radius:50%"></div>
<svg class="abs" style="left:1598.00px;top:86.00px;" width="25" height="29" viewBox="0 0 25 29"><path d="M2 0 H17 L24 7 V27 Q24 29 22 29 H3 Q1 29 1 27 V2 Q1 0 2 0Z" fill="#f4f4f4"/><rect x="5" y="10" width="15" height="14" rx="2" fill="#4cc452"/><g fill="#fff"><rect x="7.5" y="17" width="2" height="5"/><rect x="11" y="14" width="2" height="8"/><rect x="14.5" y="12" width="2" height="10"/></g></svg>
<div class="t" style="top:87.57px;font-size:26.5px;color:#dedede;font-weight:bold;left:1635.00px;">SensibleScore</div>
<div class="t" style="top:182.44px;font-size:23.7px;color:#b4b4b4;left:506.00px;transform:translateX(-50%);">Widok</div>
<div class="t" style="top:182.44px;font-size:23.7px;color:#b4b4b4;left:627.00px;transform:translateX(-50%);">Zoom</div>
<div class="t" style="top:182.44px;font-size:23.7px;color:#b4b4b4;left:961.00px;transform:translateX(-50%);">Dodaj kategorię</div>
<div class="t" style="top:182.44px;font-size:23.7px;color:#b4b4b4;left:1170.00px;transform:translateX(-50%);">Tabela przestawna</div>
<div class="t" style="top:182.44px;font-size:23.7px;color:#b4b4b4;left:1500.00px;transform:translateX(-50%);">Wstaw</div>
<div class="t" style="top:182.44px;font-size:23.7px;color:#b4b4b4;left:1600.00px;transform:translateX(-50%);">Tabela</div>
<div class="t" style="top:182.44px;font-size:23.7px;color:#b4b4b4;left:1702.00px;transform:translateX(-50%);">Wykres</div>
<div class="t" style="top:182.44px;font-size:23.7px;color:#b4b4b4;left:1802.00px;transform:translateX(-50%);">Tekst</div>
<div class="t" style="top:182.44px;font-size:23.7px;color:#b4b4b4;left:1902.00px;transform:translateX(-50%);">Kształt</div>
<div class="t" style="top:182.44px;font-size:23.7px;color:#b4b4b4;left:2024.00px;transform:translateX(-50%);">Multimedia</div>
<div class="t" style="top:182.44px;font-size:23.7px;color:#b4b4b4;left:2167.00px;transform:translateX(-50%);">Komentarz</div>
<div class="t" style="top:182.44px;font-size:23.7px;color:#b4b4b4;left:2476.00px;transform:translateX(-50%);">Udostępnij</div>
<div class="t" style="top:182.44px;font-size:23.7px;color:#b4b4b4;left:2778.00px;transform:translateX(-50%);">Format</div>
<div class="t" style="top:182.44px;font-size:23.7px;color:#b4b4b4;left:2849.00px;">Organizuj</div>
<div class="abs" style="left:566.40px;top:130.50px;width:123.00px;height:42.50px;border:1.5px solid #6c6c6c;border-radius:10px"></div>
<div class="t" style="top:140.41px;font-size:23.5px;color:#e4e4e4;left:584.40px;-webkit-text-stroke:0.7px #e4e4e4;">125%</div>
<svg class="abs" style="left:657.00px;top:145.00px;" width="20" height="14" viewBox="0 0 20 14"><path d="M3.5 4 L10 10.5 L16.5 4" fill="none" stroke="#d6d6d6" stroke-width="3" stroke-linecap="round" stroke-linejoin="round"/></svg>
<div class="abs" style="left:2720.30px;top:130.00px;width:117.40px;height:43.80px;background:#474747;border-radius:11px"></div>
<svg class="abs" style="left:450px;top:125px" width="2490" height="55" viewBox="450 125 2490 55"><rect x="492.2" y="140.7" width="27.4" height="20.9" rx="4" fill="none" stroke="#d6d6d6" stroke-width="2.2" stroke-linecap="round" stroke-linejoin="round"/><path d="M501.4 141 V161.4" fill="none" stroke="#d6d6d6" stroke-width="2.2" stroke-linecap="round" stroke-linejoin="round"/><path d="M495.3 145.5 H498.8 M495.3 149 H498.8 M495.3 152.4 H498.8" fill="none" stroke="#d6d6d6" stroke-width="2.2" stroke-linecap="round" stroke-linejoin="round" stroke-width="1.8"/><g fill="#d6d6d6"><path d="M949 141 L953 143.2 L949 145.4Z"/><path d="M949 148.9 L953 151.1 L949 153.3Z"/><path d="M949 156.5 L953 158.7 L949 160.9Z"/></g><path d="M956.8 143.2 H974 M956.8 151.1 H974 M956.8 158.7 H974" fill="none" stroke="#d6d6d6" stroke-width="2.2" stroke-linecap="round" stroke-linejoin="round"/><rect x="1158.3" y="138.4" width="16.4" height="16.3" rx="2.5" fill="none" stroke="#d6d6d6" stroke-width="2.2" stroke-linecap="round" stroke-linejoin="round"/><path d="M1166.5 138.6 V154.6 M1158.5 146.5 H1174.6" fill="none" stroke="#d6d6d6" stroke-width="2.2" stroke-linecap="round" stroke-linejoin="round" stroke-width="1.8"/><path d="M1172.5 162.5 Q1180.5 161 1181 153.5" fill="none" stroke="#d6d6d6" stroke-width="2.2" stroke-linecap="round" stroke-linejoin="round" stroke-width="2"/><path d="M1177.5 154.5 L1181 151 L1184 154.5Z M1174 159.5 L1170.5 162.5 L1174 165.5Z" fill="#d6d6d6" stroke="#d6d6d6" stroke-width="1.5" stroke-linejoin="round"/><path d="M1488.5 140.5 H1511 Q1514 140.5 1514 143.5 V157.5 M1510.5 161.6 H1488.5 Q1485.5 161.6 1485.5 158.6 V144" fill="none" stroke="#d6d6d6" stroke-width="2.2" stroke-linecap="round" stroke-linejoin="round"/><circle cx="1485.3" cy="140.3" r="1.4" fill="#d6d6d6"/><circle cx="1513.9" cy="161.5" r="1.4" fill="#d6d6d6"/><path d="M1499.6 146.2 V156.2 M1494.6 151.2 H1504.6" fill="none" stroke="#d6d6d6" stroke-width="2.2" stroke-linecap="round" stroke-linejoin="round"/><rect x="1587" y="140.6" width="27.6" height="21.4" rx="3.5" fill="none" stroke="#d6d6d6" stroke-width="2.2" stroke-linecap="round" stroke-linejoin="round"/><path d="M1600.9 140.8 V161.8 M1587.2 147.2 H1614.4 M1587.2 155.5 H1614.4" fill="none" stroke="#d6d6d6" stroke-width="2.2" stroke-linecap="round" stroke-linejoin="round" stroke-width="1.9"/><circle cx="1701.8" cy="151.3" r="12" fill="none" stroke="#d6d6d6" stroke-width="2.2" stroke-linecap="round" stroke-linejoin="round"/><path d="M1701.8 139.5 V151.3 L1712.5 145.5 M1701.8 151.3 L1709.8 159.6" fill="none" stroke="#d6d6d6" stroke-width="2.2" stroke-linecap="round" stroke-linejoin="round" stroke-width="1.9"/><path d="M1789 145.5 V142.5 Q1789 140.5 1791 140.5 H1814 Q1816.2 140.5 1816.2 142.5 V145.5 M1816.2 156.5 V159.8 Q1816.2 162 1814 162 H1791 Q1789 162 1789 159.8 V156.5" fill="none" stroke="#d6d6d6" stroke-width="2.2" stroke-linecap="round" stroke-linejoin="round"/><circle cx="1788.9" cy="151.2" r="1.4" fill="#d6d6d6"/><circle cx="1816.3" cy="151.2" r="1.4" fill="#d6d6d6"/><path d="M1797.6 157 L1802.6 144.6 L1807.6 157 M1799.3 153 H1805.9" fill="none" stroke="#d6d6d6" stroke-width="2.2" stroke-linecap="round" stroke-linejoin="round" stroke-width="1.8"/><path d="M1907.5 142.5 A10 10 0 1 0 1896 155" fill="none" stroke="#d6d6d6" stroke-width="2.2" stroke-linecap="round" stroke-linejoin="round"/><rect x="1897.3" y="144.2" width="18.5" height="18.8" rx="3.5" fill="none" stroke="#d6d6d6" stroke-width="2.2" stroke-linecap="round" stroke-linejoin="round"/><rect x="2011" y="140.5" width="27.8" height="21.4" rx="3" fill="none" stroke="#d6d6d6" stroke-width="2.2" stroke-linecap="round" stroke-linejoin="round"/><circle cx="2019.6" cy="148.3" r="2.7" fill="#d6d6d6"/><path d="M2011.5 158.5 L2017.8 153.4 L2021 156 L2029.3 149.8 L2038.5 157.8 V160 Q2038.5 161.5 2037 161.5 H2013 Q2011.5 161.5 2011.5 160Z" fill="#d6d6d6"/><path d="M2158 139.8 H2178 Q2180.6 139.8 2180.6 142.4 V156 Q2180.6 158.6 2178 158.6 H2167.5 L2161.6 163.8 V158.6 H2158 Q2155.4 158.6 2155.4 156 V142.4 Q2155.4 139.8 2158 139.8Z" fill="none" stroke="#d6d6d6" stroke-width="2.2" stroke-linecap="round" stroke-linejoin="round"/><path d="M2161.2 145 H2174.6 M2161.2 149.2 H2174.6 M2161.2 153.5 H2169.3" fill="none" stroke="#d6d6d6" stroke-width="2.2" stroke-linecap="round" stroke-linejoin="round" stroke-width="1.8"/><path d="M2471 144.5 H2468 Q2465.8 144.5 2465.8 146.7 V160.4 Q2465.8 162.6 2468 162.6 H2484.5 Q2486.7 162.6 2486.7 160.4 V146.7 Q2486.7 144.5 2484.5 144.5 H2481.5" fill="none" stroke="#d6d6d6" stroke-width="2.2" stroke-linecap="round" stroke-linejoin="round" stroke-width="2"/><path d="M2476.2 153 V135.8 M2471 140.8 L2476.2 135.6 L2481.4 140.8" fill="none" stroke="#d6d6d6" stroke-width="2.2" stroke-linecap="round" stroke-linejoin="round" stroke-width="2"/><g transform="translate(-2.5 4.5) rotate(45 2779 150)"><path d="M2771 133.5 H2787 V144.5 H2773.5 Q2772.5 138.5 2771 133.5Z" fill="none" stroke="#d6d6d6" stroke-width="2.2" stroke-linecap="round" stroke-linejoin="round" stroke-width="2"/><path d="M2787 138 L2782.5 140 L2787 142.5Z" fill="#d6d6d6" stroke="#d6d6d6" stroke-width="1"/><rect x="2768.5" y="144.5" width="21" height="6" rx="2" fill="none" stroke="#d6d6d6" stroke-width="2.2" stroke-linecap="round" stroke-linejoin="round" stroke-width="2"/><path d="M2777.2 150.5 L2775 156.5 A4.8 4.8 0 1 0 2783 156.5 L2780.8 150.5" fill="none" stroke="#d6d6d6" stroke-width="2.2" stroke-linecap="round" stroke-linejoin="round" stroke-width="2"/><circle cx="2779" cy="159" r="1.5" fill="#d6d6d6"/></g><circle cx="2898.8" cy="150.8" r="12.3" fill="none" stroke="#d6d6d6" stroke-width="2.2" stroke-linecap="round" stroke-linejoin="round"/><path d="M2890.5 147.2 H2907 M2893 151.6 H2904.6 M2895.6 156 H2902" fill="none" stroke="#d6d6d6" stroke-width="2.2" stroke-linecap="round" stroke-linejoin="round" stroke-width="2"/></svg>
<svg class="abs" style="left:486.00px;top:231.00px;" width="22" height="22" viewBox="0 0 22 22"><path d="M11 1 V21 M1 11 H21" stroke="#c4c4c4" stroke-width="2.4"/></svg>
<div class="abs" style="left:544.00px;top:222.50px;width:235.00px;height:39.00px;background:#5fc15b;border-radius:9px"></div>
<div class="t" style="top:230.51px;font-size:24.2px;color:#fff;left:661.50px;transform:translateX(-50%);">Arkusz 1</div>
<div class="abs" style="left:452px;top:270px;width:1946px;height:1433px;overflow:hidden;background:#fff">
<div class="abs" style="left:77.50px;top:-11.95px;width:245.00px;height:1103.30px;background:#dcdcdc"></div>
<div class="abs" style="left:77.50px;top:37.70px;width:245.00px;height:1.00px;background:#a8a8a8"></div>
<div class="abs" style="left:322.50px;top:37.70px;width:1470.00px;height:1.00px;background:#c0c0c0"></div>
<div class="abs" style="left:77.50px;top:87.85px;width:245.00px;height:1.00px;background:#a8a8a8"></div>
<div class="abs" style="left:322.50px;top:87.85px;width:1470.00px;height:1.00px;background:#c0c0c0"></div>
<div class="abs" style="left:77.50px;top:138.00px;width:245.00px;height:1.00px;background:#a8a8a8"></div>
<div class="abs" style="left:322.50px;top:138.00px;width:1470.00px;height:1.00px;background:#c0c0c0"></div>
<div class="abs" style="left:77.50px;top:188.15px;width:245.00px;height:1.00px;background:#a8a8a8"></div>
<div class="abs" style="left:322.50px;top:188.15px;width:1470.00px;height:1.00px;background:#c0c0c0"></div>
<div class="abs" style="left:77.50px;top:238.30px;width:245.00px;height:1.00px;background:#a8a8a8"></div>
<div class="abs" style="left:322.50px;top:238.30px;width:1470.00px;height:1.00px;background:#c0c0c0"></div>
<div class="abs" style="left:77.50px;top:288.45px;width:245.00px;height:1.00px;background:#a8a8a8"></div>
<div class="abs" style="left:322.50px;top:288.45px;width:1470.00px;height:1.00px;background:#c0c0c0"></div>
<div class="abs" style="left:77.50px;top:338.60px;width:245.00px;height:1.00px;background:#a8a8a8"></div>
<div class="abs" style="left:322.50px;top:338.60px;width:1470.00px;height:1.00px;background:#c0c0c0"></div>
<div class="abs" style="left:77.50px;top:388.75px;width:245.00px;height:1.00px;background:#a8a8a8"></div>
<div class="abs" style="left:322.50px;top:388.75px;width:1470.00px;height:1.00px;background:#c0c0c0"></div>
<div class="abs" style="left:77.50px;top:438.90px;width:245.00px;height:1.00px;background:#a8a8a8"></div>
<div class="abs" style="left:322.50px;top:438.90px;width:1470.00px;height:1.00px;background:#c0c0c0"></div>
<div class="abs" style="left:77.50px;top:489.05px;width:245.00px;height:1.00px;background:#a8a8a8"></div>
<div class="abs" style="left:322.50px;top:489.05px;width:1470.00px;height:1.00px;background:#c0c0c0"></div>
<div class="abs" style="left:77.50px;top:539.20px;width:245.00px;height:1.00px;background:#a8a8a8"></div>
<div class="abs" style="left:322.50px;top:539.20px;width:1470.00px;height:1.00px;background:#c0c0c0"></div>
<div class="abs" style="left:77.50px;top:589.35px;width:245.00px;height:1.00px;background:#a8a8a8"></div>
<div class="abs" style="left:322.50px;top:589.35px;width:1470.00px;height:1.00px;background:#c0c0c0"></div>
<div class="abs" style="left:77.50px;top:639.50px;width:245.00px;height:1.00px;background:#a8a8a8"></div>
<div class="abs" style="left:322.50px;top:639.50px;width:1470.00px;height:1.00px;background:#c0c0c0"></div>
<div class="abs" style="left:77.50px;top:689.65px;width:245.00px;height:1.00px;background:#a8a8a8"></div>
<div class="abs" style="left:322.50px;top:689.65px;width:1470.00px;height:1.00px;background:#c0c0c0"></div>
<div class="abs" style="left:77.50px;top:739.80px;width:245.00px;height:1.00px;background:#a8a8a8"></div>
<div class="abs" style="left:322.50px;top:739.80px;width:1470.00px;height:1.00px;background:#c0c0c0"></div>
<div class="abs" style="left:77.50px;top:789.95px;width:245.00px;height:1.00px;background:#a8a8a8"></div>
<div class="abs" style="left:322.50px;top:789.95px;width:1470.00px;height:1.00px;background:#c0c0c0"></div>
<div class="abs" style="left:77.50px;top:840.10px;width:245.00px;height:1.00px;background:#a8a8a8"></div>
<div class="abs" style="left:322.50px;top:840.10px;width:1470.00px;height:1.00px;background:#c0c0c0"></div>
<div class="abs" style="left:77.50px;top:890.25px;width:245.00px;height:1.00px;background:#a8a8a8"></div>
<div class="abs" style="left:322.50px;top:890.25px;width:1470.00px;height:1.00px;background:#c0c0c0"></div>
<div class="abs" style="left:77.50px;top:940.40px;width:245.00px;height:1.00px;background:#a8a8a8"></div>
<div class="abs" style="left:322.50px;top:940.40px;width:1470.00px;height:1.00px;background:#c0c0c0"></div>
<div class="abs" style="left:77.50px;top:990.55px;width:245.00px;height:1.00px;background:#a8a8a8"></div>
<div class="abs" style="left:322.50px;top:990.55px;width:1470.00px;height:1.00px;background:#c0c0c0"></div>
<div class="abs" style="left:77.50px;top:1040.70px;width:245.00px;height:1.00px;background:#a8a8a8"></div>
<div class="abs" style="left:322.50px;top:1040.70px;width:1470.00px;height:1.00px;background:#c0c0c0"></div>
<div class="abs" style="left:77.50px;top:1090.85px;width:245.00px;height:1.00px;background:#a8a8a8"></div>
<div class="abs" style="left:322.50px;top:1090.85px;width:1470.00px;height:1.00px;background:#c0c0c0"></div>
<div class="abs" style="left:77.00px;top:-11.95px;width:1.00px;height:1103.30px;#b0b0b0;background:#a8a8a8"></div>
<div class="abs" style="left:321.75px;top:-11.95px;width:1.50px;height:1103.30px;background:#4a4a4a"></div>
<div class="abs" style="left:567.00px;top:-11.95px;width:1.00px;height:1103.30px;background:#c0c0c0"></div>
<div class="abs" style="left:812.00px;top:-11.95px;width:1.00px;height:1103.30px;background:#c0c0c0"></div>
<div class="abs" style="left:1057.00px;top:-11.95px;width:1.00px;height:1103.30px;background:#c0c0c0"></div>
<div class="abs" style="left:1302.00px;top:-11.95px;width:1.00px;height:1103.30px;background:#c0c0c0"></div>
<div class="abs" style="left:1547.00px;top:-11.95px;width:1.00px;height:1103.30px;background:#c0c0c0"></div>
<div class="abs" style="left:1792.00px;top:-11.95px;width:1.00px;height:1103.30px;#b0b0b0;background:#a8a8a8"></div>
<div class="t" style="top:2.48px;font-size:25.3px;color:#000;font-weight:bold;right:1635.50px;">10</div>
<div class="t" style="top:2.48px;font-size:25.3px;color:#000;left:333.00px;">Mirko Wampirko</div>
<div class="t" style="top:2.48px;font-size:25.3px;color:#000;left:578.00px;">Łabądź</div>
<div class="t" style="top:2.48px;font-size:25.3px;color:#000;left:823.00px;">Anglia</div>
<div class="t" style="top:2.48px;font-size:25.3px;color:#000;left:1068.00px;">Anglia</div>
<div class="t" style="top:2.48px;font-size:25.3px;color:#000;left:1313.00px;">1 - 1</div>
<div class="t" style="top:2.48px;font-size:25.3px;color:#000;right:165.00px;">27.09.2023</div>
<div class="t" style="top:51.63px;font-size:25.3px;color:#000;font-weight:bold;right:1635.50px;">11</div>
<div class="t" style="top:51.63px;font-size:25.3px;color:#000;left:333.00px;">Mirko Wampirko</div>
<div class="t" style="top:51.63px;font-size:25.3px;color:#000;left:578.00px;">Łabądź</div>
<div class="t" style="top:51.63px;font-size:25.3px;color:#000;left:823.00px;">Anglia</div>
<div class="t" style="top:51.63px;font-size:25.3px;color:#000;left:1068.00px;">Niemcy</div>
<div class="t" style="top:51.63px;font-size:25.3px;color:#000;left:1313.00px;">1 - 6</div>
<div class="t" style="top:51.63px;font-size:25.3px;color:#000;right:165.00px;">27.09.2023</div>
<div class="t" style="top:101.78px;font-size:25.3px;color:#000;font-weight:bold;right:1635.50px;">12</div>
<div class="t" style="top:101.78px;font-size:25.3px;color:#000;left:333.00px;">Mirko Wampirko</div>
<div class="t" style="top:101.78px;font-size:25.3px;color:#000;left:578.00px;">Łabądź</div>
<div class="t" style="top:101.78px;font-size:25.3px;color:#000;left:823.00px;">Chorwacja</div>
<div class="t" style="top:101.78px;font-size:25.3px;color:#000;left:1068.00px;">Holandia</div>
<div class="t" style="top:101.78px;font-size:25.3px;color:#000;left:1313.00px;">2 - 3</div>
<div class="t" style="top:101.78px;font-size:25.3px;color:#000;right:165.00px;">27.09.2023</div>
<div class="t" style="top:151.93px;font-size:25.3px;color:#000;font-weight:bold;right:1635.50px;">13</div>
<div class="t" style="top:151.93px;font-size:25.3px;color:#000;left:333.00px;">Mirko Wampirko</div>
<div class="t" style="top:151.93px;font-size:25.3px;color:#000;left:578.00px;">Łabądź</div>
<div class="t" style="top:151.93px;font-size:25.3px;color:#000;left:823.00px;">Anglia</div>
<div class="t" style="top:151.93px;font-size:25.3px;color:#000;left:1068.00px;">Francja</div>
<div class="t" style="top:151.93px;font-size:25.3px;color:#000;left:1313.00px;">1 - 3</div>
<div class="t" style="top:151.93px;font-size:25.3px;color:#000;right:165.00px;">27.09.2023</div>
<div class="t" style="top:202.08px;font-size:25.3px;color:#000;font-weight:bold;right:1635.50px;">14</div>
<div class="t" style="top:202.08px;font-size:25.3px;color:#000;left:333.00px;">Mirko Wampirko</div>
<div class="t" style="top:202.08px;font-size:25.3px;color:#000;left:578.00px;">Komputer</div>
<div class="t" style="top:202.08px;font-size:25.3px;color:#000;left:823.00px;">Niemcy</div>
<div class="t" style="top:202.08px;font-size:25.3px;color:#000;left:1068.00px;">Anglia</div>
<div class="t" style="top:202.08px;font-size:25.3px;color:#000;left:1313.00px;">1 - 0</div>
<div class="t" style="top:202.08px;font-size:25.3px;color:#000;right:165.00px;">27.09.2023</div>
<div class="t" style="top:252.23px;font-size:25.3px;color:#000;font-weight:bold;right:1635.50px;">15</div>
<div class="t" style="top:252.23px;font-size:25.3px;color:#000;left:333.00px;">Mirko Wampirko</div>
<div class="t" style="top:252.23px;font-size:25.3px;color:#000;left:578.00px;">Komputer</div>
<div class="t" style="top:252.23px;font-size:25.3px;color:#000;left:823.00px;">Turcja</div>
<div class="t" style="top:252.23px;font-size:25.3px;color:#000;left:1068.00px;">Izrael</div>
<div class="t" style="top:252.23px;font-size:25.3px;color:#000;left:1313.00px;">2 - 1</div>
<div class="t" style="top:252.23px;font-size:25.3px;color:#000;right:165.00px;">28.09.2023</div>
<div class="t" style="top:302.38px;font-size:25.3px;color:#000;font-weight:bold;right:1635.50px;">16</div>
<div class="t" style="top:302.38px;font-size:25.3px;color:#000;left:333.00px;">Mirko Wampirko</div>
<div class="t" style="top:302.38px;font-size:25.3px;color:#000;left:578.00px;">Komputer</div>
<div class="t" style="top:302.38px;font-size:25.3px;color:#000;left:823.00px;">Rosja</div>
<div class="t" style="top:302.38px;font-size:25.3px;color:#000;left:1068.00px;">Szkocja</div>
<div class="t" style="top:302.38px;font-size:25.3px;color:#000;left:1313.00px;">1 - 2</div>
<div class="t" style="top:302.38px;font-size:25.3px;color:#000;right:165.00px;">28.09.2023</div>
<div class="t" style="top:352.53px;font-size:25.3px;color:#000;font-weight:bold;right:1635.50px;">17</div>
<div class="t" style="top:352.53px;font-size:25.3px;color:#000;left:333.00px;">Mirko Wampirko</div>
<div class="t" style="top:352.53px;font-size:25.3px;color:#000;left:578.00px;">Komputer</div>
<div class="t" style="top:352.53px;font-size:25.3px;color:#000;left:823.00px;">Belgia</div>
<div class="t" style="top:352.53px;font-size:25.3px;color:#000;left:1068.00px;">Rumunia</div>
<div class="t" style="top:352.53px;font-size:25.3px;color:#000;left:1313.00px;">1 - 2</div>
<div class="t" style="top:352.53px;font-size:25.3px;color:#000;right:165.00px;">28.09.2023</div>
<div class="t" style="top:402.68px;font-size:25.3px;color:#000;font-weight:bold;right:1635.50px;">18</div>
<div class="t" style="top:402.68px;font-size:25.3px;color:#000;left:333.00px;">Mirko Wampirko</div>
<div class="t" style="top:402.68px;font-size:25.3px;color:#000;left:578.00px;">Komputer</div>
<div class="t" style="top:402.68px;font-size:25.3px;color:#000;left:823.00px;">Belgia</div>
<div class="t" style="top:402.68px;font-size:25.3px;color:#000;left:1068.00px;">Rumunia</div>
<div class="t" style="top:402.68px;font-size:25.3px;color:#000;left:1313.00px;">3 - 2</div>
<div class="t" style="top:402.68px;font-size:25.3px;color:#000;right:165.00px;">28.09.2023</div>
<div class="t" style="top:452.83px;font-size:25.3px;color:#000;font-weight:bold;right:1635.50px;">19</div>
<div class="t" style="top:452.83px;font-size:25.3px;color:#000;left:333.00px;">Mirko Wampirko</div>
<div class="t" style="top:452.83px;font-size:25.3px;color:#000;left:578.00px;">Łabądź</div>
<div class="t" style="top:452.83px;font-size:25.3px;color:#000;left:823.00px;">Hiszpania</div>
<div class="t" style="top:452.83px;font-size:25.3px;color:#000;left:1068.00px;">Niemcy</div>
<div class="t" style="top:452.83px;font-size:25.3px;color:#000;left:1313.00px;">6 - 5</div>
<div class="t" style="top:452.83px;font-size:25.3px;color:#000;right:165.00px;">29.09.2023</div>
<div class="t" style="top:502.98px;font-size:25.3px;color:#000;font-weight:bold;right:1635.50px;">20</div>
<div class="t" style="top:502.98px;font-size:25.3px;color:#000;left:333.00px;">Mirko Wampirko</div>
<div class="t" style="top:502.98px;font-size:25.3px;color:#000;left:578.00px;">Komputer</div>
<div class="t" style="top:502.98px;font-size:25.3px;color:#000;left:823.00px;">Bułgaria</div>
<div class="t" style="top:502.98px;font-size:25.3px;color:#000;left:1068.00px;">Albania</div>
<div class="t" style="top:502.98px;font-size:25.3px;color:#000;left:1313.00px;">5 - 0</div>
<div class="t" style="top:502.98px;font-size:25.3px;color:#000;right:165.00px;">30.09.2023</div>
<div class="t" style="top:553.13px;font-size:25.3px;color:#000;font-weight:bold;right:1635.50px;">21</div>
<div class="t" style="top:553.13px;font-size:25.3px;color:#000;left:333.00px;">Mirko Wampirko</div>
<div class="t" style="top:553.13px;font-size:25.3px;color:#000;left:578.00px;">Komputer</div>
<div class="t" style="top:553.13px;font-size:25.3px;color:#000;left:823.00px;">Polska</div>
<div class="t" style="top:553.13px;font-size:25.3px;color:#000;left:1068.00px;">Austria</div>
<div class="t" style="top:553.13px;font-size:25.3px;color:#000;left:1313.00px;">4 - 2</div>
<div class="t" style="top:553.13px;font-size:25.3px;color:#000;right:165.00px;">30.09.2023</div>
<div class="t" style="top:603.28px;font-size:25.3px;color:#000;font-weight:bold;right:1635.50px;">22</div>
<div class="t" style="top:603.28px;font-size:25.3px;color:#000;left:333.00px;">Mirko Wampirko</div>
<div class="t" style="top:603.28px;font-size:25.3px;color:#000;left:578.00px;">Komputer</div>
<div class="t" style="top:603.28px;font-size:25.3px;color:#000;left:823.00px;">Szwecja</div>
<div class="t" style="top:603.28px;font-size:25.3px;color:#000;left:1068.00px;">Szwajcaria</div>
<div class="t" style="top:603.28px;font-size:25.3px;color:#000;left:1313.00px;">3 - 1</div>
<div class="t" style="top:603.28px;font-size:25.3px;color:#000;right:165.00px;">30.09.2023</div>
<div class="t" style="top:653.43px;font-size:25.3px;color:#000;font-weight:bold;right:1635.50px;">23</div>
<div class="t" style="top:653.43px;font-size:25.3px;color:#000;left:333.00px;">Mirko Wampirko</div>
<div class="t" style="top:653.43px;font-size:25.3px;color:#000;left:578.00px;">Komputer</div>
<div class="t" style="top:653.43px;font-size:25.3px;color:#000;left:823.00px;">Włochy</div>
<div class="t" style="top:653.43px;font-size:25.3px;color:#000;left:1068.00px;">Anglia</div>
<div class="t" style="top:653.43px;font-size:25.3px;color:#000;left:1313.00px;">1 - 3</div>
<div class="t" style="top:653.43px;font-size:25.3px;color:#000;right:165.00px;">30.09.2023</div>
<div class="t" style="top:703.58px;font-size:25.3px;color:#000;font-weight:bold;right:1635.50px;">24</div>
<div class="t" style="top:703.58px;font-size:25.3px;color:#000;left:333.00px;">Mirko Wampirko</div>
<div class="t" style="top:703.58px;font-size:25.3px;color:#000;left:578.00px;">Komputer</div>
<div class="t" style="top:703.58px;font-size:25.3px;color:#000;left:823.00px;">Włochy</div>
<div class="t" style="top:703.58px;font-size:25.3px;color:#000;left:1068.00px;">Anglia</div>
<div class="t" style="top:703.58px;font-size:25.3px;color:#000;left:1313.00px;">0 - 2</div>
<div class="t" style="top:703.58px;font-size:25.3px;color:#000;right:165.00px;">30.09.2023</div>
<div class="t" style="top:753.73px;font-size:25.3px;color:#000;font-weight:bold;right:1635.50px;">25</div>
<div class="t" style="top:753.73px;font-size:25.3px;color:#000;left:333.00px;">Mirko Wampirko</div>
<div class="t" style="top:753.73px;font-size:25.3px;color:#000;left:578.00px;">Komputer</div>
<div class="t" style="top:753.73px;font-size:25.3px;color:#000;left:823.00px;">Amsterdam</div>
<div class="t" style="top:753.73px;font-size:25.3px;color:#000;left:1068.00px;">Milan</div>
<div class="t" style="top:753.73px;font-size:25.3px;color:#000;left:1313.00px;">0 - 1</div>
<div class="t" style="top:753.73px;font-size:25.3px;color:#000;right:165.00px;">30.09.2023</div>
<div class="t" style="top:803.88px;font-size:25.3px;color:#000;font-weight:bold;right:1635.50px;">26</div>
<div class="t" style="top:803.88px;font-size:25.3px;color:#000;left:333.00px;">Mirko Wampirko</div>
<div class="t" style="top:803.88px;font-size:25.3px;color:#000;left:578.00px;">Komputer</div>
<div class="t" style="top:803.88px;font-size:25.3px;color:#000;left:823.00px;">Amsterdam</div>
<div class="t" style="top:803.88px;font-size:25.3px;color:#000;left:1068.00px;">Milan</div>
<div class="t" style="top:803.88px;font-size:25.3px;color:#000;left:1313.00px;">1 - 3</div>
<div class="t" style="top:803.88px;font-size:25.3px;color:#000;right:165.00px;">30.09.2023</div>
<div class="t" style="top:854.03px;font-size:25.3px;color:#000;font-weight:bold;right:1635.50px;">27</div>
<div class="t" style="top:854.03px;font-size:25.3px;color:#000;left:333.00px;">Mirko Wampirko</div>
<div class="t" style="top:854.03px;font-size:25.3px;color:#000;left:578.00px;">Komputer</div>
<div class="t" style="top:854.03px;font-size:25.3px;color:#000;left:823.00px;">Bułgaria</div>
<div class="t" style="top:854.03px;font-size:25.3px;color:#000;left:1068.00px;">Rumunia</div>
<div class="t" style="top:854.03px;font-size:25.3px;color:#000;left:1313.00px;">5 - 3</div>
<div class="t" style="top:854.03px;font-size:25.3px;color:#000;right:165.00px;">30.09.2023</div>
<div class="t" style="top:904.18px;font-size:25.3px;color:#000;font-weight:bold;right:1635.50px;">28</div>
<div class="t" style="top:904.18px;font-size:25.3px;color:#000;left:333.00px;">Mirko Wampirko</div>
<div class="t" style="top:904.18px;font-size:25.3px;color:#000;left:578.00px;">Komputer</div>
<div class="t" style="top:904.18px;font-size:25.3px;color:#000;left:823.00px;">Warszawa</div>
<div class="t" style="top:904.18px;font-size:25.3px;color:#000;left:1068.00px;">Zagrzeb</div>
<div class="t" style="top:904.18px;font-size:25.3px;color:#000;left:1313.00px;">2 - 1</div>
<div class="t" style="top:904.18px;font-size:25.3px;color:#000;right:165.00px;">30.09.2023</div>
<div class="t" style="top:954.33px;font-size:25.3px;color:#000;font-weight:bold;right:1635.50px;">29</div>
<div class="t" style="top:954.33px;font-size:25.3px;color:#000;left:333.00px;">Mirko Wampirko</div>
<div class="t" style="top:954.33px;font-size:25.3px;color:#000;left:578.00px;">Komputer</div>
<div class="t" style="top:954.33px;font-size:25.3px;color:#000;left:823.00px;">Warszawa</div>
<div class="t" style="top:954.33px;font-size:25.3px;color:#000;left:1068.00px;">Zagrzeb</div>
<div class="t" style="top:954.33px;font-size:25.3px;color:#000;left:1313.00px;">2 - 1</div>
<div class="t" style="top:954.33px;font-size:25.3px;color:#000;right:165.00px;">30.09.2023</div>
<div class="t" style="top:1004.48px;font-size:25.3px;color:#000;font-weight:bold;right:1635.50px;">30</div>
<div class="t" style="top:1004.48px;font-size:25.3px;color:#000;left:333.00px;">Mirko Wampirko</div>
<div class="t" style="top:1004.48px;font-size:25.3px;color:#000;left:578.00px;">Komputer</div>
<div class="t" style="top:1004.48px;font-size:25.3px;color:#000;left:823.00px;">Warszawa</div>
<div class="t" style="top:1004.48px;font-size:25.3px;color:#000;left:1068.00px;">Instanbuł</div>
<div class="t" style="top:1004.48px;font-size:25.3px;color:#000;left:1313.00px;">2 - 3</div>
<div class="t" style="top:1004.48px;font-size:25.3px;color:#000;right:165.00px;">30.09.2023</div>
<div class="t" style="top:1054.63px;font-size:25.3px;color:#000;font-weight:bold;right:1635.50px;">31</div>
<div class="t" style="top:1054.63px;font-size:25.3px;color:#000;left:333.00px;">Mirko Wampirko</div>
<div class="t" style="top:1054.63px;font-size:25.3px;color:#000;left:578.00px;">Komputer</div>
<div class="t" style="top:1054.63px;font-size:25.3px;color:#000;left:823.00px;">Lazio</div>
<div class="t" style="top:1054.63px;font-size:25.3px;color:#000;left:1068.00px;">Parma</div>
<div class="t" style="top:1054.63px;font-size:25.3px;color:#000;left:1313.00px;">0 - 4</div>
<div class="t" style="top:1054.63px;font-size:25.3px;color:#000;right:165.00px;">30.09.2023</div>
<div class="abs" style="left:19.50px;top:62.00px;width:35.00px;height:1029.35px;background:#fff;border:1px solid #c8c8c8;border-radius:9px 9px 9px 9px;overflow:hidden"></div>
<div class="abs" style="left:20.50px;top:1041.20px;width:33.00px;height:49.15px;background:#dbf5da;border-radius:0 0 8px 8px"></div>
<div class="abs" style="left:20.00px;top:87.85px;width:34.00px;height:1.00px;background:#d4d4d4"></div>
<div class="abs" style="left:20.00px;top:138.00px;width:34.00px;height:1.00px;background:#d4d4d4"></div>
<div class="abs" style="left:20.00px;top:188.15px;width:34.00px;height:1.00px;background:#d4d4d4"></div>
<div class="abs" style="left:20.00px;top:238.30px;width:34.00px;height:1.00px;background:#d4d4d4"></div>
<div class="abs" style="left:20.00px;top:288.45px;width:34.00px;height:1.00px;background:#d4d4d4"></div>
<div class="abs" style="left:20.00px;top:338.60px;width:34.00px;height:1.00px;background:#d4d4d4"></div>
<div class="abs" style="left:20.00px;top:388.75px;width:34.00px;height:1.00px;background:#d4d4d4"></div>
<div class="abs" style="left:20.00px;top:438.90px;width:34.00px;height:1.00px;background:#d4d4d4"></div>
<div class="abs" style="left:20.00px;top:489.05px;width:34.00px;height:1.00px;background:#d4d4d4"></div>
<div class="abs" style="left:20.00px;top:539.20px;width:34.00px;height:1.00px;background:#d4d4d4"></div>
<div class="abs" style="left:20.00px;top:589.35px;width:34.00px;height:1.00px;background:#d4d4d4"></div>
<div class="abs" style="left:20.00px;top:639.50px;width:34.00px;height:1.00px;background:#d4d4d4"></div>
<div class="abs" style="left:20.00px;top:689.65px;width:34.00px;height:1.00px;background:#d4d4d4"></div>
<div class="abs" style="left:20.00px;top:739.80px;width:34.00px;height:1.00px;background:#d4d4d4"></div>
<div class="abs" style="left:20.00px;top:789.95px;width:34.00px;height:1.00px;background:#d4d4d4"></div>
<div class="abs" style="left:20.00px;top:840.10px;width:34.00px;height:1.00px;background:#d4d4d4"></div>
<div class="abs" style="left:20.00px;top:890.25px;width:34.00px;height:1.00px;background:#d4d4d4"></div>
<div class="abs" style="left:20.00px;top:940.40px;width:34.00px;height:1.00px;background:#d4d4d4"></div>
<div class="abs" style="left:20.00px;top:990.55px;width:34.00px;height:1.00px;background:#d4d4d4"></div>
<div class="abs" style="left:20.00px;top:1040.70px;width:34.00px;height:1.00px;background:#d4d4d4"></div>
<div class="abs" style="left:19.5px;top:62px;width:35px;height:1029.35px;overflow:hidden">
<div class="t" style="left:0;width:35px;text-align:center;top:-8.93px;font-size:21px;color:#68686d">12</div>
<div class="t" style="left:0;width:35px;text-align:center;top:41.22px;font-size:21px;color:#68686d">13</div>
<div class="t" style="left:0;width:35px;text-align:center;top:91.37px;font-size:21px;color:#68686d">14</div>
<div class="t" style="left:0;width:35px;text-align:center;top:141.52px;font-size:21px;color:#68686d">15</div>
<div class="t" style="left:0;width:35px;text-align:center;top:191.67px;font-size:21px;color:#68686d">16</div>
<div class="t" style="left:0;width:35px;text-align:center;top:241.82px;font-size:21px;color:#68686d">17</div>
<div class="t" style="left:0;width:35px;text-align:center;top:291.97px;font-size:21px;color:#68686d">18</div>
<div class="t" style="left:0;width:35px;text-align:center;top:342.12px;font-size:21px;color:#68686d">19</div>
<div class="t" style="left:0;width:35px;text-align:center;top:392.27px;font-size:21px;color:#68686d">20</div>
<div class="t" style="left:0;width:35px;text-align:center;top:442.42px;font-size:21px;color:#68686d">21</div>
<div class="t" style="left:0;width:35px;text-align:center;top:492.57px;font-size:21px;color:#68686d">22</div>
<div class="t" style="left:0;width:35px;text-align:center;top:542.72px;font-size:21px;color:#68686d">23</div>
<div class="t" style="left:0;width:35px;text-align:center;top:592.87px;font-size:21px;color:#68686d">24</div>
<div class="t" style="left:0;width:35px;text-align:center;top:643.02px;font-size:21px;color:#68686d">25</div>
<div class="t" style="left:0;width:35px;text-align:center;top:693.17px;font-size:21px;color:#68686d">26</div>
<div class="t" style="left:0;width:35px;text-align:center;top:743.32px;font-size:21px;color:#68686d">27</div>
<div class="t" style="left:0;width:35px;text-align:center;top:793.47px;font-size:21px;color:#68686d">28</div>
<div class="t" style="left:0;width:35px;text-align:center;top:843.62px;font-size:21px;color:#68686d">29</div>
<div class="t" style="left:0;width:35px;text-align:center;top:893.77px;font-size:21px;color:#68686d">30</div>
<div class="t" style="left:0;width:35px;text-align:center;top:943.92px;font-size:21px;color:#68686d">31</div>
<div class="t" style="left:0;width:35px;text-align:center;top:994.07px;font-size:21px;color:#68686d">32</div>
</div>
<div class="abs" style="left:78.00px;top:9.50px;width:1715.00px;height:33.00px;background:#fff;border:1px solid #c9c9c9;border-radius:8px;box-shadow:0 1px 2px rgba(0,0,0,.12)"></div>
<div class="abs" style="left:1547.50px;top:10.50px;width:245.00px;height:31.00px;background:#dcf4da;border-radius:0 7px 7px 0"></div>
<div class="abs" style="left:322.00px;top:11.00px;width:1.00px;height:30.00px;background:#e2e2e2"></div>
<div class="abs" style="left:567.00px;top:11.00px;width:1.00px;height:30.00px;background:#e2e2e2"></div>
<div class="abs" style="left:812.00px;top:11.00px;width:1.00px;height:30.00px;background:#e2e2e2"></div>
<div class="abs" style="left:1057.00px;top:11.00px;width:1.00px;height:30.00px;background:#e2e2e2"></div>
<div class="abs" style="left:1302.00px;top:11.00px;width:1.00px;height:30.00px;background:#e2e2e2"></div>
<div class="t" style="top:16.22px;font-size:21px;color:#6c6c70;left:200.00px;transform:translateX(-50%);">A</div>
<div class="t" style="top:16.22px;font-size:21px;color:#6c6c70;left:445.00px;transform:translateX(-50%);">B</div>
<div class="t" style="top:16.22px;font-size:21px;color:#6c6c70;left:690.00px;transform:translateX(-50%);">C</div>
<div class="t" style="top:16.22px;font-size:21px;color:#6c6c70;left:935.00px;transform:translateX(-50%);">D</div>
<div class="t" style="top:16.22px;font-size:21px;color:#6c6c70;left:1180.00px;transform:translateX(-50%);">E</div>
<div class="t" style="top:16.22px;font-size:21px;color:#6c6c70;left:1425.00px;transform:translateX(-50%);">F</div>
<div class="t" style="top:16.22px;font-size:21px;color:#6c6c70;left:1670.00px;transform:translateX(-50%);">G</div>
<div class="t" style="top:1125.90px;font-size:30px;color:#000;left:935.00px;transform:translateX(-50%);">Sensible Soccer: European Championships (normal difficulty) Sezon 1</div>
<div class="abs" style="left:1543.50px;top:1037.00px;width:253.00px;height:58.00px;border:2.6px solid #5cc55a"></div>
<svg class="abs" style="left:1537.00px;top:1031.00px;" width="14" height="14" viewBox="0 0 14 14"><circle cx="7" cy="7" r="5.5" fill="#fff" stroke="#5cc55a" stroke-width="2.5"/></svg>
<svg class="abs" style="left:17.00px;top:0.60px;filter:drop-shadow(0 1px 1px rgba(0,0,0,.15))" width="46" height="46" viewBox="0 0 46 46"><circle cx="23" cy="23" r="21" fill="#fff" stroke="#bdbdbd" stroke-width="1.5"/><circle cx="23" cy="23" r="9.5" fill="none" stroke="#4fc94a" stroke-width="2.2"/></svg>
<svg class="abs" style="left:1807.00px;top:0.60px;filter:drop-shadow(0 1px 1px rgba(0,0,0,.15))" width="46" height="46" viewBox="0 0 46 46"><circle cx="23" cy="23" r="21" fill="#fff" stroke="#bdbdbd" stroke-width="1.5"/><path d="M20.5 15.5 V30.5 M25.5 15.5 V30.5" stroke="#4fc94a" stroke-width="1.8"/></svg>
<svg class="abs" style="left:17.00px;top:1105.00px;filter:drop-shadow(0 1px 1px rgba(0,0,0,.15))" width="46" height="46" viewBox="0 0 46 46"><circle cx="23" cy="23" r="21" fill="#fff" stroke="#bdbdbd" stroke-width="1.5"/><path d="M13 19.5 H33 M13 26.5 H33" stroke="#4fc94a" stroke-width="2.2"/></svg>
<svg class="abs" style="left:1807.00px;top:1105.00px;filter:drop-shadow(0 1px 1px rgba(0,0,0,.15))" width="46" height="46" viewBox="0 0 46 46"><circle cx="23" cy="23" r="21" fill="#fff" stroke="#bdbdbd" stroke-width="1.5"/><path d="M13.5 30.5 H31.5 V12.5" fill="none" stroke="#4fc94a" stroke-width="2.2"/></svg>
</div>
<div class="abs" style="left:2398.00px;top:270.00px;width:29.50px;height:1433.00px;background:#f9f9f9;border-left:1.5px solid #e3e3e3;border-right:1px solid #eeeeee"></div>
<div class="abs" style="left:2406.00px;top:607.00px;width:16.00px;height:806.00px;background:#c1c1c1;border-radius:8px"></div>
<div class="abs" style="left:452.00px;top:1703.00px;width:1946.00px;height:29.00px;background:#f8f8f8;border-top:1px solid #e2e2e2;border-bottom:1px solid #e2e2e2"></div>
<div class="abs" style="left:457.00px;top:1710.00px;width:1430.00px;height:16.00px;background:#c1c1c1;border-radius:8px"></div>
<div class="abs" style="left:2398.00px;top:1703.00px;width:30.00px;height:29.00px;background:#2a2a2c"></div>
<div class="abs" style="left:451.00px;top:1732.00px;width:1977.00px;height:70.00px;background:linear-gradient(#fbfbfb,#f3f3f3 50%,#e2e2e2);border-radius:0 0 0 20px"></div>
<div class="abs" style="left:633.00px;top:1732.00px;width:1.50px;height:70.00px;background:#d8d8d8"></div>
<div class="t" style="top:1754.84px;font-size:25px;color:#8e8e8e;left:484.00px;">Faktyczne</div>
<div class="t" style="top:1754.84px;font-size:25px;color:#333;left:669.00px;">30.09.2023</div>
<div class="abs" style="left:1040.00px;top:236.00px;width:860.00px;height:90.00px;background:radial-gradient(ellipse at center,rgba(0,0,0,.18),rgba(0,0,0,0) 70%)"></div>
<div class="abs" style="left:1057.00px;top:243.50px;width:825.00px;height:65.00px;background:#0d0d0d"></div>
<div class="abs" style="left:1058.00px;top:244.50px;width:823.00px;height:63.00px;background:#313133;border:2px solid #6e6e6e"></div>
<svg class="abs" style="left:1072.00px;top:256.00px;" width="36" height="36" viewBox="0 0 36 36"><circle cx="18" cy="18" r="18" fill="#4a4a4c"/><rect x="8" y="16" width="20" height="4.5" fill="#d8d8d8"/></svg>
<div class="abs" style="left:1129.50px;top:256.00px;width:3.00px;height:39.50px;background:#f0f0f0"></div>
<svg class="abs" style="left:1163.00px;top:263.00px;" width="32" height="26" viewBox="0 0 32 26"><rect x="1.5" y="1.5" width="29" height="23" rx="4" fill="none" stroke="#d4d4d4" stroke-width="2.6"/><path d="M16 20 V9 M10 13 L16 6.5 L22 13Z" stroke="#f0f0f0" stroke-width="2.6" fill="#f0f0f0"/></svg>
<div class="t" style="top:263.61px;font-size:23.5px;color:#f4f4f4;left:1214.50px;">Cały ekran jest udostępniany.</div>
<div class="abs" style="left:1551.00px;top:256.00px;width:278.00px;height:39.00px;background:#2d63d9;border-radius:10px"></div>
<div class="t" style="top:264.19px;font-size:23.4px;color:#fff;left:1690.00px;transform:translateX(-50%);">Zatrzymaj udostępnianie</div>
<svg class="abs" style="left:1856.00px;top:258.00px;" width="14" height="38" viewBox="0 0 14 38"><g fill="#8a8a8a"><rect x="1" y="1.0" width="12" height="2"/><rect x="1" y="6.2" width="12" height="2"/><rect x="1" y="11.4" width="12" height="2"/><rect x="1" y="16.6" width="12" height="2"/><rect x="1" y="21.8" width="12" height="2"/><rect x="1" y="27.0" width="12" height="2"/><rect x="1" y="32.2" width="12" height="2"/></g></svg>
<div class="abs" style="left:2427.50px;top:215.00px;width:2.50px;height:1587.00px;background:#000"></div>
<div class="abs" style="left:2430.00px;top:215.00px;width:510.00px;height:1587.00px;background:#2b2b2d"></div>
<div class="abs" style="left:2438.00px;top:222.00px;width:105.00px;height:40.00px;background:#5fc15b;border-radius:10px"></div>
<div class="t" style="top:227.91px;font-size:26.1px;color:#fff;left:2490.50px;transform:translateX(-50%);">Tabela</div>
<div class="t" style="top:227.82px;font-size:26.2px;color:#a8a8aa;left:2564.00px;">Komórka</div>
<div class="abs" style="left:2686.00px;top:229.00px;width:1.50px;height:26.00px;background:#454547"></div>
<div class="t" style="top:227.57px;font-size:26.5px;color:#a8a8aa;left:2705.00px;">Tekst</div>
<div class="abs" style="left:2785.00px;top:229.00px;width:1.50px;height:26.00px;background:#454547"></div>
<div class="t" style="top:227.82px;font-size:26.2px;color:#a8a8aa;left:2806.00px;">Uporządkuj</div>
<div class="abs" style="left:2429.00px;top:269.00px;width:511.00px;height:1.50px;background:#3c3c3e"></div>
<svg class="abs" style="left:2490.00px;top:304.00px;" width="127" height="101" viewBox="0 0 127 101"><defs><linearGradient id="tg2490304" x1="0" y1="0" x2="0" y2="1"><stop offset="0" stop-color="#fafafa"/><stop offset="1" stop-color="#e4e4e4"/></linearGradient></defs><rect x="0" y="0" width="127" height="101" fill="url(#tg2490304)"/><rect x="0" y="0" width="127" height="20" fill="#c4c4c4"/><rect x="0" y="81" width="127" height="20" fill="#d6d6d6"/><rect x="0" y="20" width="32" height="61" fill="#cfcfcf"/><line x1="32" y1="0" x2="32" y2="101" stroke="#bbb" stroke-width="1" /><line x1="63" y1="0" x2="63" y2="101" stroke="#bbb" stroke-width="1" /><line x1="95" y1="0" x2="95" y2="101" stroke="#bbb" stroke-width="1" /><line x1="0" y1="40" x2="127" y2="40" stroke="#c4c4c4" stroke-width="1"/><line x1="0" y1="60" x2="127" y2="60" stroke="#c4c4c4" stroke-width="1"/><line x1="0" y1="81" x2="127" y2="81" stroke="#7a7672" stroke-width="1.3"/><line x1="32" y1="20" x2="32" y2="81" stroke="#7a7672" stroke-width="1.3"/><line x1="0" y1="20" x2="127" y2="20" stroke="#7a7672" stroke-width="1.3"/><rect x=".5" y=".5" width="126" height="100" fill="none" stroke="#c8c8c8"/></svg>
<svg class="abs" style="left:2636.00px;top:304.00px;" width="127" height="101" viewBox="0 0 127 101"><defs><linearGradient id="tg2636304" x1="0" y1="0" x2="0" y2="1"><stop offset="0" stop-color="#fafafa"/><stop offset="1" stop-color="#e4e4e4"/></linearGradient></defs><rect x="0" y="0" width="127" height="101" fill="url(#tg2636304)"/><rect x="0" y="0" width="127" height="20" fill="#4fa3ee"/><rect x="0" y="81" width="127" height="20" fill="#d6d6d6"/><line x1="32" y1="0" x2="32" y2="101" stroke="#fff" stroke-width="1" /><line x1="63" y1="0" x2="63" y2="101" stroke="#fff" stroke-width="1" /><line x1="95" y1="0" x2="95" y2="101" stroke="#fff" stroke-width="1" /><line x1="0" y1="40" x2="127" y2="40" stroke="#c4c4c4" stroke-width="1"/><line x1="0" y1="60" x2="127" y2="60" stroke="#c4c4c4" stroke-width="1"/><line x1="0" y1="81" x2="127" y2="81" stroke="#7a7672" stroke-width="1.3"/><line x1="32" y1="20" x2="32" y2="81" stroke="#7a7672" stroke-width="1.3"/><rect x=".5" y=".5" width="126" height="100" fill="none" stroke="#c8c8c8"/></svg>
<svg class="abs" style="left:2782.00px;top:304.00px;" width="127" height="101" viewBox="0 0 127 101"><defs><linearGradient id="tg2782304" x1="0" y1="0" x2="0" y2="1"><stop offset="0" stop-color="#fafafa"/><stop offset="1" stop-color="#e4e4e4"/></linearGradient></defs><rect x="0" y="0" width="127" height="101" fill="url(#tg2782304)"/><rect x="0" y="0" width="127" height="20" fill="#5db53a"/><rect x="0" y="81" width="127" height="20" fill="#d6d6d6"/><line x1="32" y1="0" x2="32" y2="101" stroke="#fff" stroke-width="1" /><line x1="63" y1="0" x2="63" y2="101" stroke="#fff" stroke-width="1" /><line x1="95" y1="0" x2="95" y2="101" stroke="#fff" stroke-width="1" /><line x1="0" y1="40" x2="127" y2="40" stroke="#c4c4c4" stroke-width="1"/><line x1="0" y1="60" x2="127" y2="60" stroke="#c4c4c4" stroke-width="1"/><line x1="0" y1="81" x2="127" y2="81" stroke="#7a7672" stroke-width="1.3"/><line x1="32" y1="20" x2="32" y2="81" stroke="#7a7672" stroke-width="1.3"/><rect x=".5" y=".5" width="126" height="100" fill="none" stroke="#c8c8c8"/></svg>
<svg class="abs" style="left:2490.00px;top:440.00px;" width="127" height="101" viewBox="0 0 127 101"><defs><linearGradient id="tg2490440" x1="0" y1="0" x2="0" y2="1"><stop offset="0" stop-color="#fafafa"/><stop offset="1" stop-color="#e4e4e4"/></linearGradient></defs><rect x="0" y="0" width="127" height="101" fill="url(#tg2490440)"/><rect x="0" y="0" width="127" height="20" fill="#e54b2d"/><rect x="0" y="81" width="127" height="20" fill="#d6d6d6"/><line x1="32" y1="0" x2="32" y2="101" stroke="#fff" stroke-width="1" /><line x1="63" y1="0" x2="63" y2="101" stroke="#fff" stroke-width="1" /><line x1="95" y1="0" x2="95" y2="101" stroke="#fff" stroke-width="1" /><line x1="0" y1="40" x2="127" y2="40" stroke="#c4c4c4" stroke-width="1"/><line x1="0" y1="60" x2="127" y2="60" stroke="#c4c4c4" stroke-width="1"/><line x1="0" y1="81" x2="127" y2="81" stroke="#7a7672" stroke-width="1.3"/><line x1="32" y1="20" x2="32" y2="81" stroke="#7a7672" stroke-width="1.3"/><rect x=".5" y=".5" width="126" height="100" fill="none" stroke="#c8c8c8"/></svg>
<svg class="abs" style="left:2636.00px;top:440.00px;" width="127" height="101" viewBox="0 0 127 101"><defs><linearGradient id="tg2636440" x1="0" y1="0" x2="0" y2="1"><stop offset="0" stop-color="#fafafa"/><stop offset="1" stop-color="#e4e4e4"/></linearGradient></defs><rect x="0" y="0" width="127" height="101" fill="url(#tg2636440)"/><rect x="0" y="0" width="127" height="20" fill="#efb443"/><rect x="0" y="81" width="127" height="20" fill="#d6d6d6"/><line x1="32" y1="0" x2="32" y2="101" stroke="#fff" stroke-width="1" /><line x1="63" y1="0" x2="63" y2="101" stroke="#fff" stroke-width="1" /><line x1="95" y1="0" x2="95" y2="101" stroke="#fff" stroke-width="1" /><line x1="0" y1="40" x2="127" y2="40" stroke="#c4c4c4" stroke-width="1"/><line x1="0" y1="60" x2="127" y2="60" stroke="#c4c4c4" stroke-width="1"/><line x1="0" y1="81" x2="127" y2="81" stroke="#7a7672" stroke-width="1.3"/><line x1="32" y1="20" x2="32" y2="81" stroke="#7a7672" stroke-width="1.3"/><rect x=".5" y=".5" width="126" height="100" fill="none" stroke="#c8c8c8"/></svg>
<svg class="abs" style="left:2782.00px;top:440.00px;" width="127" height="101" viewBox="0 0 127 101"><defs><linearGradient id="tg2782440" x1="0" y1="0" x2="0" y2="1"><stop offset="0" stop-color="#fafafa"/><stop offset="1" stop-color="#e4e4e4"/></linearGradient></defs><rect x="0" y="0" width="127" height="101" fill="url(#tg2782440)"/><rect x="0" y="0" width="127" height="20" fill="#fcfcfc"/><rect x="0" y="81" width="127" height="20" fill="#d6d6d6"/><line x1="32" y1="0" x2="32" y2="101" stroke="#bbb" stroke-width="1" /><line x1="63" y1="0" x2="63" y2="101" stroke="#bbb" stroke-width="1" /><line x1="95" y1="0" x2="95" y2="101" stroke="#bbb" stroke-width="1" /><line x1="0" y1="40" x2="127" y2="40" stroke="#c4c4c4" stroke-width="1"/><line x1="0" y1="60" x2="127" y2="60" stroke="#c4c4c4" stroke-width="1"/><line x1="0" y1="81" x2="127" y2="81" stroke="#7a7672" stroke-width="1.3"/><line x1="32" y1="20" x2="32" y2="81" stroke="#7a7672" stroke-width="1.3"/><line x1="0" y1="20" x2="127" y2="20" stroke="#7a7672" stroke-width="1.3"/><rect x=".5" y=".5" width="126" height="100" fill="none" stroke="#c8c8c8"/></svg>
<svg class="abs" style="left:2444.00px;top:411.00px;" width="18" height="24" viewBox="0 0 18 24"><path d="M14 3 L4 12 L14 21" fill="none" stroke="#9a9a9c" stroke-width="2.6"/></svg>
<div class="t" style="top:571.35px;font-size:24.4px;color:#e6e6e6;font-weight:bold;left:2700.00px;transform:translateX(-50%);">Style tabeli</div>
<svg class="abs" style="left:2681.00px;top:604.00px;" width="38" height="12" viewBox="0 0 38 12"><circle cx="6" cy="6" r="5" fill="#a0a0a2"/><circle cx="32" cy="6" r="5" fill="#5a5a5c"/></svg>
<div class="abs" style="left:2462.00px;top:631.00px;width:478.00px;height:1.50px;background:#3d3d3f"></div>
<div class="t" style="top:675.51px;font-size:24.2px;color:#e6e6e6;font-weight:bold;left:2462.50px;">Opcje tabeli</div>
<svg class="abs" style="left:2470.00px;top:719.00px;" width="28" height="28" viewBox="0 0 28 28"><defs><linearGradient id="cg" x1="0" y1="0" x2="0" y2="1"><stop offset="0" stop-color="#5fbf5e"/><stop offset="1" stop-color="#45a248"/></linearGradient></defs><rect x="0" y="0" width="28" height="28" rx="6" fill="url(#cg)"/><path d="M6.5 14.5 L11.5 20 L21.5 7.5" fill="none" stroke="#eaf5ea" stroke-width="3.6" stroke-linecap="round" stroke-linejoin="round"/></svg>
<div class="t" style="top:720.65px;font-size:26.4px;color:#e6e6e6;left:2510.70px;">Tytuł</div>
<svg class="abs" style="left:2470.00px;top:761.00px;" width="28" height="28" viewBox="0 0 28 28"><defs><linearGradient id="cg" x1="0" y1="0" x2="0" y2="1"><stop offset="0" stop-color="#5fbf5e"/><stop offset="1" stop-color="#45a248"/></linearGradient></defs><rect x="0" y="0" width="28" height="28" rx="6" fill="url(#cg)"/><path d="M6.5 14.5 L11.5 20 L21.5 7.5" fill="none" stroke="#eaf5ea" stroke-width="3.6" stroke-linecap="round" stroke-linejoin="round"/></svg>
<div class="t" style="top:764.26px;font-size:24.5px;color:#e6e6e6;left:2510.70px;">Podpis</div>
<div class="abs" style="left:2462.00px;top:831.00px;width:478.00px;height:1.50px;background:#3d3d3f"></div>
<div class="t" style="top:871.60px;font-size:24.1px;color:#e6e6e6;font-weight:bold;left:2462.50px;">Nagłówki i stopki</div>
<div class="abs" style="left:2462.00px;top:916.00px;width:132.00px;height:40.00px;background:#5a5a5c;border-radius:10px"></div>
<svg class="abs" style="left:2559.00px;top:919.00px;" width="32" height="34" viewBox="0 0 32 34"><rect x="0" y="0" width="32" height="34" rx="8" fill="#4fa84e"/><path d="M10 13 L16 7 L22 13 M10 21 L16 27 L22 21" fill="none" stroke="#e8f3e8" stroke-width="2.6"/></svg>
<svg class="abs" style="left:2478.00px;top:925.00px;" width="32" height="23" viewBox="0 0 32 23"><rect x="1" y="1" width="30" height="21" fill="#888"/><g fill="#5a5a5c"><rect x="11" y="8" width="9" height="6"/><rect x="21" y="8" width="9" height="6"/><rect x="11" y="15" width="9" height="6"/><rect x="21" y="15" width="9" height="6"/></g><path d="M1 1 H31 V22 H1Z M11 1 V22 M21 1 V22 M1 8 H31 M1 15 H31" fill="none" stroke="#fff" stroke-width="2"/></svg>
<div class="t" style="top:921.99px;font-size:26px;color:#e6e6e6;left:2532.00px;transform:translateX(-50%);">1</div>
<div class="abs" style="left:2634.00px;top:916.00px;width:132.00px;height:40.00px;background:#5a5a5c;border-radius:10px"></div>
<svg class="abs" style="left:2731.00px;top:919.00px;" width="32" height="34" viewBox="0 0 32 34"><rect x="0" y="0" width="32" height="34" rx="8" fill="#4fa84e"/><path d="M10 13 L16 7 L22 13 M10 21 L16 27 L22 21" fill="none" stroke="#e8f3e8" stroke-width="2.6"/></svg>
<svg class="abs" style="left:2650.00px;top:925.00px;" width="32" height="23" viewBox="0 0 32 23"><rect x="1" y="1" width="30" height="7" fill="#999"/><path d="M1 1 H31 V22 H1Z M1 8 H31 M11 8 V22 M21 8 V22" fill="none" stroke="#fff" stroke-width="2"/></svg>
<div class="t" style="top:921.99px;font-size:26px;color:#e6e6e6;left:2704.00px;transform:translateX(-50%);">0</div>
<div class="abs" style="left:2806.00px;top:916.00px;width:132.00px;height:40.00px;background:#5a5a5c;border-radius:10px"></div>
<svg class="abs" style="left:2903.00px;top:919.00px;" width="32" height="34" viewBox="0 0 32 34"><rect x="0" y="0" width="32" height="34" rx="8" fill="#4fa84e"/><path d="M10 13 L16 7 L22 13 M10 21 L16 27 L22 21" fill="none" stroke="#e8f3e8" stroke-width="2.6"/></svg>
<svg class="abs" style="left:2822.00px;top:925.00px;" width="32" height="23" viewBox="0 0 32 23"><rect x="1" y="15" width="30" height="7" fill="#999"/><path d="M1 1 H31 V22 H1Z M1 15 H31 M11 1 V15 M21 1 V15" fill="none" stroke="#fff" stroke-width="2"/></svg>
<div class="t" style="top:921.99px;font-size:26px;color:#e6e6e6;left:2876.00px;transform:translateX(-50%);">0</div>
<div class="abs" style="left:2462.00px;top:997.00px;width:478.00px;height:1.50px;background:#3d3d3f"></div>
<div class="t" style="top:1029.51px;font-size:24.2px;color:#e6e6e6;font-weight:bold;left:2462.50px;">Wiersze</div>
<div class="t" style="top:1088.70px;font-size:22.8px;color:#e6e6e6;font-weight:bold;left:2462.50px;">Kolumny</div>
<div class="abs" style="left:2780.00px;top:1022.00px;width:124.00px;height:35.00px;background:#2f2f31;border:1px solid #454547;border-top-color:#3a3a3c"></div>
<div class="t" style="top:1026.99px;font-size:26px;color:#ececec;right:45.00px;">32</div>
<svg class="abs" style="left:2912.00px;top:1020.00px;" width="25" height="40" viewBox="0 0 25 40"><rect x="0" y="0" width="25" height="40" rx="8" fill="#59595b"/><path d="M6 12 L12.5 6 L19 12 M6 28 L12.5 34 L19 28" fill="none" stroke="#e8e8e8" stroke-width="2.4"/></svg>
<div class="abs" style="left:2780.00px;top:1082.00px;width:124.00px;height:36.00px;background:#2f2f31;border:1px solid #454547;border-top-color:#3a3a3c"></div>
<div class="t" style="top:1087.99px;font-size:26px;color:#ececec;right:45.00px;">7</div>
<svg class="abs" style="left:2912.00px;top:1080.00px;" width="25" height="40" viewBox="0 0 25 40"><rect x="0" y="0" width="25" height="40" rx="8" fill="#59595b"/><path d="M6 12 L12.5 6 L19 12 M6 28 L12.5 34 L19 28" fill="none" stroke="#e8e8e8" stroke-width="2.4"/></svg>
<div class="abs" style="left:2462.00px;top:1149.00px;width:478.00px;height:1.50px;background:#3d3d3f"></div>
<div class="t" style="top:1187.60px;font-size:24.1px;color:#e6e6e6;font-weight:bold;left:2462.50px;">Wielkość czcionki tabeli</div>
<div class="abs" style="left:2808.00px;top:1180.00px;width:128.00px;height:40.00px;background:#5a5a5c;border-radius:10px"></div>
<div class="abs" style="left:2872.00px;top:1189.00px;width:1.50px;height:22.00px;background:#444"></div>
<div class="t" style="top:1193.92px;font-size:19px;color:#e8e8e8;left:2840.00px;transform:translateX(-50%);">A</div>
<div class="t" style="top:1188.30px;font-size:28px;color:#e8e8e8;left:2905.00px;transform:translateX(-50%);">A</div>
<div class="abs" style="left:2462.00px;top:1251.00px;width:478.00px;height:1.50px;background:#3d3d3f"></div>
<div class="t" style="top:1290.68px;font-size:24px;color:#e6e6e6;font-weight:bold;left:2462.50px;">Obrys tabeli</div>
<div class="abs" style="left:2463.00px;top:1328.00px;width:166.00px;height:39.00px;background:#5a5a5c;border-radius:10px"></div>
<div class="abs" style="left:2478.00px;top:1346.00px;width:102.00px;height:4.00px;background:#e6e6e6"></div>
<svg class="abs" style="left:2594.00px;top:1331.00px;" width="31" height="33" viewBox="0 0 31 33"><rect x="0" y="0" width="31" height="33" rx="8" fill="#4fa84e"/><path d="M10 13 L16 7 L22 13 M10 21 L16 27 L22 21" fill="none" stroke="#e8f3e8" stroke-width="2.6"/></svg>
<div class="abs" style="left:2649.00px;top:1329.00px;width:128.00px;height:38.00px;background:#5a5a5c;border-radius:10px"></div>
<div class="abs" style="left:2649.00px;top:1329.00px;width:86.00px;height:38.00px;background:#000;border-radius:10px 0 0 10px"></div>
<svg class="abs" style="left:2742.00px;top:1333.00px;" width="30" height="30" viewBox="0 0 30 30"><defs><radialGradient id="wh" cx="50%" cy="50%" r="50%"><stop offset="0" stop-color="#fff"/><stop offset="1" stop-color="#fff" stop-opacity="0"/></radialGradient><linearGradient id="rb" x1="0" y1="0" x2="1" y2="1"><stop offset="0" stop-color="#ff5a5a"/><stop offset=".33" stop-color="#ffd24a"/><stop offset=".55" stop-color="#5ae07a"/><stop offset=".8" stop-color="#4a9aff"/><stop offset="1" stop-color="#c05aff"/></linearGradient></defs><circle cx="15" cy="15" r="14" fill="url(#rb)"/><circle cx="15" cy="15" r="14" fill="url(#wh)" opacity=".8"/></svg>
<div class="abs" style="left:2798.00px;top:1332.00px;width:106.00px;height:34.00px;background:#2f2f31;border:1px solid #454547;border-top-color:#3a3a3c"></div>
<div class="t" style="top:1336.84px;font-size:25px;color:#ececec;right:45.00px;">0,35 pkt</div>
<svg class="abs" style="left:2912.00px;top:1330.00px;" width="25" height="40" viewBox="0 0 25 40"><rect x="0" y="0" width="25" height="40" rx="8" fill="#59595b"/><path d="M6 12 L12.5 6 L19 12 M6 28 L12.5 34 L19 28" fill="none" stroke="#e8e8e8" stroke-width="2.4"/></svg>
<svg class="abs" style="left:2462.00px;top:1395.00px;" width="28" height="28" viewBox="0 0 28 28"><rect x="0" y="0" width="28" height="28" rx="6" fill="#58585a"/><rect x=".5" y=".5" width="27" height="27" rx="5.5" fill="none" stroke="#4a4a4c"/></svg>
<div class="t" style="top:1395.91px;font-size:26.1px;color:#e6e6e6;left:2502.50px;">Obrysuj tytuł tabeli</div>
<div class="abs" style="left:2462.00px;top:1457.00px;width:478.00px;height:1.50px;background:#3d3d3f"></div>
<div class="t" style="top:1500.19px;font-size:23.4px;color:#e6e6e6;font-weight:bold;left:2462.50px;">Linie siatki</div>
<div class="abs" style="left:2462.00px;top:1540.00px;width:178.00px;height:40.00px;background:#4fa84e;border-radius:10px"></div>
<div class="abs" style="left:2550.50px;top:1540.00px;width:1.50px;height:40.00px;background:#3f8a3e"></div>
<svg class="abs" style="left:2486.50px;top:1545.00px;" width="40" height="30" viewBox="0 0 40 30"><g fill="none" stroke="#9bd09a" stroke-width="1.4"><rect x="1" y="1" width="38" height="25"/><path d="M14 1 V26 M26 1 V26 M1 9.5 H39 M1 17.5 H39"/></g><path d="M1 9.5 H39 M1 17.5 H39" stroke="#fff" stroke-width="2.4"/></svg>
<svg class="abs" style="left:2575.50px;top:1545.00px;" width="40" height="30" viewBox="0 0 40 30"><g fill="none" stroke="#9bd09a" stroke-width="1.4"><rect x="1" y="1" width="38" height="25"/><path d="M14 1 V26 M26 1 V26 M1 9.5 H39 M1 17.5 H39"/></g><path d="M14 1 V26 M26 1 V26" stroke="#fff" stroke-width="2.4"/></svg>
<div class="abs" style="left:2670.00px;top:1540.00px;width:267.00px;height:40.00px;background:#4fa84e;border-radius:10px"></div>
<div class="abs" style="left:2758.50px;top:1540.00px;width:1.50px;height:40.00px;background:#3f8a3e"></div>
<div class="abs" style="left:2847.50px;top:1540.00px;width:1.50px;height:40.00px;background:#3f8a3e"></div>
<svg class="abs" style="left:2694.50px;top:1545.00px;" width="40" height="30" viewBox="0 0 40 30"><g fill="none" stroke="#9bd09a" stroke-width="1.4"><rect x="1" y="1" width="38" height="25"/><path d="M14 1 V26 M26 1 V26 M1 9.5 H39 M1 17.5 H39"/></g><rect x="1" y="1" width="13" height="25" fill="#8ac489" opacity=".5"/><path d="M1 9.5 H14 M1 17.5 H14" stroke="#fff" stroke-width="2.4"/></svg>
<svg class="abs" style="left:2783.50px;top:1545.00px;" width="40" height="30" viewBox="0 0 40 30"><g fill="none" stroke="#80be7f" stroke-width="1.4"><rect x="1" y="1" width="38" height="25"/><path d="M14 1 V26 M26 1 V26 M1 9.5 H39 M1 17.5 H39"/></g></svg>
<svg class="abs" style="left:2872.50px;top:1545.00px;" width="40" height="30" viewBox="0 0 40 30"><g fill="none" stroke="#80be7f" stroke-width="1.4"><rect x="1" y="1" width="38" height="25"/><path d="M14 1 V26 M26 1 V26 M1 9.5 H39 M1 17.5 H39"/></g></svg>
<div class="abs" style="left:2462.00px;top:1609.00px;width:478.00px;height:1.50px;background:#3d3d3f"></div>
<svg class="abs" style="left:2462.00px;top:1647.00px;" width="28" height="28" viewBox="0 0 28 28"><rect x="0" y="0" width="28" height="28" rx="6" fill="#58585a"/><rect x=".5" y=".5" width="27" height="27" rx="5.5" fill="none" stroke="#4a4a4c"/></svg>
<div class="t" style="top:1649.67px;font-size:25.2px;color:#e6e6e6;left:2503.00px;">Dwa kolory wierszy</div>
<div class="abs" style="left:2806.00px;top:1640.00px;width:128.00px;height:40.00px;background:#5a5a5c;border-radius:10px"></div>
<div class="abs" style="left:2806.00px;top:1640.00px;width:88.00px;height:40.00px;background:#f5f5f5;border-radius:10px 0 0 10px"></div>
<svg class="abs" style="left:2899.00px;top:1646.00px;" width="30" height="30" viewBox="0 0 30 30"><defs><radialGradient id="wh2" cx="50%" cy="50%" r="50%"><stop offset="0" stop-color="#fff"/><stop offset="1" stop-color="#fff" stop-opacity="0"/></radialGradient><linearGradient id="rb2" x1="0" y1="0" x2="1" y2="1"><stop offset="0" stop-color="#ff5a5a"/><stop offset=".33" stop-color="#ffd24a"/><stop offset=".55" stop-color="#5ae07a"/><stop offset=".8" stop-color="#4a9aff"/><stop offset="1" stop-color="#c05aff"/></linearGradient></defs><circle cx="15" cy="15" r="14" fill="url(#rb2)"/><circle cx="15" cy="15" r="14" fill="url(#wh2)" opacity=".8"/></svg>
<div class="abs" style="left:2462.00px;top:1711.00px;width:478.00px;height:1.50px;background:#3d3d3f"></div>
<div class="t" style="top:1751.94px;font-size:23.7px;color:#e6e6e6;font-weight:bold;left:2462.50px;">Rozmiar wiersza i kolumny</div>
<div class="abs" style="left:2630.00px;top:1795.50px;width:124.00px;height:6.00px;background:#2f2f31;border:1px solid #454547;border-bottom:none"></div>
<div class="abs" style="left:2762.00px;top:1794.00px;width:26.00px;height:8.00px;background:#59595b;border-radius:12px 12px 0 0"></div>
<div class="abs" style="left:2815.00px;top:1794.00px;width:125.00px;height:8.00px;background:#4a4a4c;border-radius:10px 0 0 0"></div>
<div class="abs" style="left:0.00px;top:1801.00px;width:2940.00px;height:9.00px;background:#050505"></div>
<div class="abs" style="left:56.00px;top:1810.00px;width:2827.00px;height:92.00px;background:linear-gradient(90deg,#2a4a4c 0%,#27393f 12%,#252c36 35%,#262d40 60%,#2a2f3c 80%,#2e2e33 100%);border-radius:24px;border:1.5px solid rgba(110,120,125,.55)"></div>
<svg class="abs" style="left:70.80px;top:1825.00px;" width="56" height="56" viewBox="0 0 56 56"><defs><linearGradient id="fd" x1="0" y1="0" x2="0" y2="1"><stop offset="0" stop-color="#63c6fa"/><stop offset="1" stop-color="#1f6fe6"/></linearGradient></defs><rect x="0" y="0" width="56" height="56" rx="12.5" fill="url(#fd)"/><path d="M30 0 H43.5 Q56 0 56 12.5 V43.5 Q56 56 43.5 56 H25.5 Q24 46 25 40 L31 40 Q29 33 30 26 Q22 27 20.5 27 Q24 12 30 0Z" fill="#e6ebf3"/><path d="M12 32 Q28 44 45 31" fill="none" stroke="#1b2430" stroke-width="1.8"/><rect x="13.5" y="16" width="2.6" height="6" rx="1.3" fill="#1b2430"/><rect x="38.5" y="16" width="2.6" height="6" rx="1.3" fill="#1b2430"/></svg>
<svg class="abs" style="left:145.10px;top:1825.00px;" width="56" height="56" viewBox="0 0 56 56"><rect x="0" y="0" width="56" height="56" rx="12.5" fill="#c2c6c8"/><rect x="9.5" y="9.5" width="10" height="10" rx="2.5" fill="#5bd65b"/><rect x="23.5" y="9.5" width="10" height="10" rx="2.5" fill="#f8c93a"/><rect x="37.5" y="9.5" width="10" height="10" rx="2.5" fill="#f3902a"/><rect x="9.5" y="23.5" width="10" height="10" rx="2.5" fill="#d8382a"/><rect x="23.5" y="23.5" width="10" height="10" rx="2.5" fill="#b8bcc0"/><rect x="37.5" y="23.5" width="10" height="10" rx="2.5" fill="#ee5a6a"/><rect x="9.5" y="37.5" width="10" height="10" rx="2.5" fill="#9a4ae0"/><rect x="23.5" y="37.5" width="10" height="10" rx="2.5" fill="#3a8af5"/><rect x="37.5" y="37.5" width="10" height="10" rx="2.5" fill="#5ad6a8"/></svg>
<svg class="abs" style="left:219.40px;top:1825.00px;" width="56" height="56" viewBox="0 0 56 56"><defs><linearGradient id="ff1" x1="0" y1="0" x2="0.3" y2="1"><stop offset="0" stop-color="#ffd84a"/><stop offset="1" stop-color="#ff4a6a"/></linearGradient></defs><rect x="0" y="0" width="56" height="56" rx="12.5" fill="#20123a"/><circle cx="28" cy="31" r="20.5" fill="url(#ff1)"/><path d="M9 24 Q14 8 30 7 Q37 9 40 4 Q48 12 48 24 Q46 14 38 12 Q30 10 22 15 Q14 20 9 24Z" fill="#ffb52a"/><circle cx="29" cy="30" r="10.5" fill="#7a3ad8"/><path d="M11 22 Q20 18 27 22 Q22 26 17 24Z" fill="#ffb02a"/><circle cx="17" cy="13" r="6" fill="#20123a"/></svg>
<svg class="abs" style="left:293.70px;top:1825.00px;" width="56" height="56" viewBox="0 0 56 56"><defs><linearGradient id="ml" x1="0" y1="0" x2="0" y2="1"><stop offset="0" stop-color="#3a7af0"/><stop offset="1" stop-color="#5ac0f8"/></linearGradient></defs><rect x="0" y="0" width="56" height="56" rx="12.5" fill="url(#ml)"/><rect x="8.5" y="15.5" width="39" height="26" rx="3" fill="#f2f3f5"/><path d="M9 17 L28 31 L47 17 M9 40 L23 27 M47 40 L33 27" fill="none" stroke="#c4c8cc" stroke-width="1.3"/></svg>
<svg class="abs" style="left:368.00px;top:1825.00px;" width="56" height="56" viewBox="0 0 56 56"><rect x="0" y="0" width="56" height="56" rx="12.5" fill="#fafafa"/><path d="M0 12.5 Q0 0 12.5 0 H43.5 Q56 0 56 12.5 V15 H0Z" fill="#e8574a"/><text x="28" y="12" font-size="10.5" font-weight="bold" fill="#fff" text-anchor="middle" font-family="Liberation Sans">WRZ</text><text x="28" y="48" font-size="29" fill="#222" text-anchor="middle" font-family="Liberation Sans">30</text></svg>
<svg class="abs" style="left:442.30px;top:1825.00px;" width="56" height="56" viewBox="0 0 56 56"><rect x="0" y="0" width="56" height="56" rx="12.5" fill="#b8bcc0"/><rect x="2" y="2" width="52" height="52" rx="11" fill="#050505"/><rect x="5.5" y="5.5" width="45" height="45" rx="8" fill="#1e1e1e"/><text x="10" y="21" font-size="13" fill="#f0f0f0" font-family="Liberation Mono">&gt;_</text></svg>
<svg class="abs" style="left:512.60px;top:1821.00px;" width="64" height="64" viewBox="0 0 64 64"><circle cx="32" cy="32" r="31.5" fill="#e8e0f4"/><circle cx="32" cy="32" r="29.5" fill="#7a3ec6"/><path d="M14 24 A11 11 0 1 1 36 24 A11 11 0 0 1 22 34 L18 38Z" fill="#dde0ee"/><circle cx="45" cy="34" r="9" fill="#dde0ee"/><path d="M48 42 L52 48 L44 42Z" fill="#dde0ee"/><circle cx="29" cy="44" r="11" fill="#dde0ee"/><path d="M24 53 L22 58 L30 54Z" fill="#dde0ee"/><text x="25" y="30" font-size="13" fill="#6a3ab8" text-anchor="middle" font-family="Liberation Sans">t</text><text x="29" y="50" font-size="13" fill="#6a3ab8" text-anchor="middle" font-family="Liberation Sans">t</text><text x="46" y="39" font-size="11" fill="#6a3ab8" text-anchor="middle" font-family="Liberation Sans">x</text></svg>
<svg class="abs" style="left:590.90px;top:1825.00px;" width="56" height="56" viewBox="0 0 56 56"><defs><linearGradient id="ms" x1="0" y1="0" x2="0" y2="1"><stop offset="0" stop-color="#84e07a"/><stop offset="1" stop-color="#36c046"/></linearGradient></defs><rect x="0" y="0" width="56" height="56" rx="12.5" fill="url(#ms)"/><ellipse cx="28.5" cy="27" rx="20" ry="15.5" fill="#eef6ee"/><path d="M15 37 L12.5 45 L23 40Z" fill="#eef6ee"/></svg>
<svg class="abs" style="left:665.20px;top:1825.00px;" width="56" height="56" viewBox="0 0 56 56"><rect x="0" y="0" width="56" height="56" rx="12.5" fill="#f4f4f6"/><circle cx="28" cy="28" r="23" fill="#2f7ee8"/><circle cx="28" cy="28" r="20" fill="none" stroke="#dfe9f8" stroke-width="2.5" stroke-dasharray="0.8 2.6" opacity=".8"/><path d="M44 12 L30 31 L25 25Z" fill="#e84a3a"/><path d="M12 44 L25 25 L30 31Z" fill="#f2f2f2"/></svg>
<svg class="abs" style="left:739.50px;top:1825.00px;" width="56" height="56" viewBox="0 0 56 56"><defs><clipPath id="mpc"><rect width="56" height="56" rx="12.5"/></clipPath></defs><g clip-path="url(#mpc)"><rect width="56" height="56" fill="#8ad68a"/><path d="M0 10 L18 26 L56 52 V56 H0Z" fill="#f2f2f2"/><path d="M0 36 L14 42 V56 H0Z" fill="#e88ac8"/><path d="M30 46 L56 40 V56 H30Z" fill="#f5d04a"/><rect x="15" y="0" width="10" height="40" fill="#3a7ae8"/><path d="M36 0 Q56 0 56 20 V0Z" fill="#c8c8c8"/><path d="M37 0 A18 18 0 0 0 56 20" fill="none" stroke="#d8d8d8" stroke-width="5"/><circle cx="21" cy="36" r="13" fill="#f4f4f4"/><circle cx="21" cy="36" r="10.5" fill="#3a7ae8"/><path d="M21 28 L26.5 41 L21 38 L15.5 41Z" fill="#fff"/></g></svg>
<svg class="abs" style="left:813.80px;top:1825.00px;" width="56" height="56" viewBox="0 0 56 56"><rect x="0" y="0" width="56" height="56" rx="12.5" fill="#fbfbfb"/><ellipse cx="28" cy="16.5" rx="7" ry="11.5" fill="#f29a2a" opacity=".82" transform="rotate(0 28 28)"/><ellipse cx="28" cy="16.5" rx="7" ry="11.5" fill="#f5d23a" opacity=".82" transform="rotate(45 28 28)"/><ellipse cx="28" cy="16.5" rx="7" ry="11.5" fill="#9ad04a" opacity=".82" transform="rotate(90 28 28)"/><ellipse cx="28" cy="16.5" rx="7" ry="11.5" fill="#5ac07a" opacity=".82" transform="rotate(135 28 28)"/><ellipse cx="28" cy="16.5" rx="7" ry="11.5" fill="#4aa8d8" opacity=".82" transform="rotate(180 28 28)"/><ellipse cx="28" cy="16.5" rx="7" ry="11.5" fill="#6a7ad8" opacity=".82" transform="rotate(225 28 28)"/><ellipse cx="28" cy="16.5" rx="7" ry="11.5" fill="#a86ac8" opacity=".82" transform="rotate(270 28 28)"/><ellipse cx="28" cy="16.5" rx="7" ry="11.5" fill="#e8584a" opacity=".82" transform="rotate(315 28 28)"/></svg>
<svg class="abs" style="left:888.10px;top:1825.00px;" width="56" height="56" viewBox="0 0 56 56"><defs><linearGradient id="ft" x1="0" y1="0" x2="0" y2="1"><stop offset="0" stop-color="#78e070"/><stop offset="1" stop-color="#38c048"/></linearGradient></defs><rect x="0" y="0" width="56" height="56" rx="12.5" fill="url(#ft)"/><rect x="8.5" y="17" width="26" height="22" rx="5" fill="#e8f4e8"/><path d="M36 25 L47 17.5 V38.5 L36 31Z" fill="#e8f4e8"/></svg>
<svg class="abs" style="left:962.40px;top:1825.00px;" width="56" height="56" viewBox="0 0 56 56"><rect x="48" y="9" width="7" height="11" rx="2" fill="#d8d8d8"/><rect x="48" y="20" width="7" height="11" fill="#5aaae8"/><rect x="48" y="31" width="7" height="11" fill="#f59a2a"/><rect x="48" y="42" width="7" height="10" rx="2" fill="#5ac85a"/><rect x="0" y="0" width="52" height="56" rx="11" fill="#b48a4e"/><rect x="2.5" y="0" width="2" height="56" fill="#9a7440" opacity=".5"/><circle cx="28" cy="28" r="17" fill="none" stroke="#8e6a38" stroke-width="1.6"/><circle cx="28" cy="24" r="6.5" fill="#9a7640"/><path d="M15.5 39 Q28 28 40.5 39 A17 17 0 0 1 15.5 39Z" fill="#9a7640"/></svg>
<svg class="abs" style="left:1036.70px;top:1825.00px;" width="56" height="56" viewBox="0 0 56 56"><rect x="0" y="0" width="56" height="56" rx="12.5" fill="#fbfbfb"/><circle cx="11" cy="14.5" r="4.2" fill="#2a7af0" stroke="#fff" stroke-width="1"/><circle cx="11" cy="14.5" r="5.2" fill="none" stroke="#2a7af0" stroke-width=".8"/><circle cx="11" cy="28" r="4.2" fill="#e8443a"/><circle cx="11" cy="28" r="5.2" fill="none" stroke="#e8443a" stroke-width=".8"/><circle cx="11" cy="41.5" r="4.2" fill="#f08a2a"/><circle cx="11" cy="41.5" r="5.2" fill="none" stroke="#f08a2a" stroke-width=".8"/><path d="M21 14.5 H50 M21 28 H50 M21 41.5 H50" stroke="#c8c8c8" stroke-width="1.4"/></svg>
<svg class="abs" style="left:1111.00px;top:1825.00px;" width="56" height="56" viewBox="0 0 56 56"><defs><linearGradient id="nt" x1="0" y1="0" x2="0" y2="1"><stop offset="0" stop-color="#f8f8f6"/><stop offset="1" stop-color="#e4e2dc"/></linearGradient></defs><rect x="0" y="0" width="56" height="56" rx="12.5" fill="url(#nt)"/><path d="M0 12.5 Q0 0 12.5 0 H43.5 Q56 0 56 12.5 V14.5 H0Z" fill="#f6cf48"/><path d="M0 28.5 H56 M0 42.5 H56" stroke="#d8d6d0" stroke-width="1.1"/></svg>
<svg class="abs" style="left:1185.30px;top:1825.00px;" width="56" height="56" viewBox="0 0 56 56"><defs><linearGradient id="pg" x1="0" y1="0" x2="0" y2="1"><stop offset="0" stop-color="#f5b04a"/><stop offset="1" stop-color="#ee8a24"/></linearGradient></defs><rect x="0" y="0" width="56" height="56" rx="12.5" fill="url(#pg)"/><path d="M9.5 46.5 L44 10.5 Q46.5 9.5 46 12.5 L12 48Z" fill="#f4f4f4"/><path d="M10 47.5 H48" stroke="#f8d8a8" stroke-width="1"/></svg>
<svg class="abs" style="left:1259.60px;top:1825.00px;" width="56" height="56" viewBox="0 0 56 56"><defs><linearGradient id="mu" x1="0" y1="0" x2="0" y2="1"><stop offset="0" stop-color="#f46a7a"/><stop offset="1" stop-color="#e83a48"/></linearGradient></defs><rect x="0" y="0" width="56" height="56" rx="12.5" fill="url(#mu)"/><path d="M22 41 V15 L41 10.5 V36" fill="none" stroke="#fff" stroke-width="3.6"/><ellipse cx="17" cy="41" rx="6" ry="5" fill="#fff"/><ellipse cx="36" cy="36.5" rx="6" ry="5" fill="#fff"/></svg>
<svg class="abs" style="left:1333.90px;top:1825.00px;" width="56" height="56" viewBox="0 0 56 56"><defs><linearGradient id="as" x1="0" y1="0" x2="0" y2="1"><stop offset="0" stop-color="#3aa4f2"/><stop offset="1" stop-color="#1a5ad8"/></linearGradient></defs><rect x="0" y="0" width="56" height="56" rx="12.5" fill="url(#as)"/><path d="M22 45 L36 12 M37 45 L24 16 M9.5 36 H47" stroke="#fff" stroke-width="3.6" stroke-linecap="round"/></svg>
<svg class="abs" style="left:1408.20px;top:1825.00px;" width="56" height="56" viewBox="0 0 56 56"><defs><linearGradient id="ss" x1="0" y1="0" x2="0" y2="1"><stop offset="0" stop-color="#d8d8dc"/><stop offset="1" stop-color="#8e8e92"/></linearGradient></defs><rect x="0" y="0" width="56" height="56" rx="12.5" fill="url(#ss)"/><circle cx="28" cy="28" r="22" fill="#6a6a6e"/><rect x="27" y="5" width="2" height="4" fill="#5a5a5e" transform="rotate(0 28 28)"/><rect x="27" y="5" width="2" height="4" fill="#5a5a5e" transform="rotate(10 28 28)"/><rect x="27" y="5" width="2" height="4" fill="#5a5a5e" transform="rotate(20 28 28)"/><rect x="27" y="5" width="2" height="4" fill="#5a5a5e" transform="rotate(30 28 28)"/><rect x="27" y="5" width="2" height="4" fill="#5a5a5e" transform="rotate(40 28 28)"/><rect x="27" y="5" width="2" height="4" fill="#5a5a5e" transform="rotate(50 28 28)"/><rect x="27" y="5" width="2" height="4" fill="#5a5a5e" transform="rotate(60 28 28)"/><rect x="27" y="5" width="2" height="4" fill="#5a5a5e" transform="rotate(70 28 28)"/><rect x="27" y="5" width="2" height="4" fill="#5a5a5e" transform="rotate(80 28 28)"/><rect x="27" y="5" width="2" height="4" fill="#5a5a5e" transform="rotate(90 28 28)"/><rect x="27" y="5" width="2" height="4" fill="#5a5a5e" transform="rotate(100 28 28)"/><rect x="27" y="5" width="2" height="4" fill="#5a5a5e" transform="rotate(110 28 28)"/><rect x="27" y="5" width="2" height="4" fill="#5a5a5e" transform="rotate(120 28 28)"/><rect x="27" y="5" width="2" height="4" fill="#5a5a5e" transform="rotate(130 28 28)"/><rect x="27" y="5" width="2" height="4" fill="#5a5a5e" transform="rotate(140 28 28)"/><rect x="27" y="5" width="2" height="4" fill="#5a5a5e" transform="rotate(150 28 28)"/><rect x="27" y="5" width="2" height="4" fill="#5a5a5e" transform="rotate(160 28 28)"/><rect x="27" y="5" width="2" height="4" fill="#5a5a5e" transform="rotate(170 28 28)"/><rect x="27" y="5" width="2" height="4" fill="#5a5a5e" transform="rotate(180 28 28)"/><rect x="27" y="5" width="2" height="4" fill="#5a5a5e" transform="rotate(190 28 28)"/><rect x="27" y="5" width="2" height="4" fill="#5a5a5e" transform="rotate(200 28 28)"/><rect x="27" y="5" width="2" height="4" fill="#5a5a5e" transform="rotate(210 28 28)"/><rect x="27" y="5" width="2" height="4" fill="#5a5a5e" transform="rotate(220 28 28)"/><rect x="27" y="5" width="2" height="4" fill="#5a5a5e" transform="rotate(230 28 28)"/><rect x="27" y="5" width="2" height="4" fill="#5a5a5e" transform="rotate(240 28 28)"/><rect x="27" y="5" width="2" height="4" fill="#5a5a5e" transform="rotate(250 28 28)"/><rect x="27" y="5" width="2" height="4" fill="#5a5a5e" transform="rotate(260 28 28)"/><rect x="27" y="5" width="2" height="4" fill="#5a5a5e" transform="rotate(270 28 28)"/><rect x="27" y="5" width="2" height="4" fill="#5a5a5e" transform="rotate(280 28 28)"/><rect x="27" y="5" width="2" height="4" fill="#5a5a5e" transform="rotate(290 28 28)"/><rect x="27" y="5" width="2" height="4" fill="#5a5a5e" transform="rotate(300 28 28)"/><rect x="27" y="5" width="2" height="4" fill="#5a5a5e" transform="rotate(310 28 28)"/><rect x="27" y="5" width="2" height="4" fill="#5a5a5e" transform="rotate(320 28 28)"/><rect x="27" y="5" width="2" height="4" fill="#5a5a5e" transform="rotate(330 28 28)"/><rect x="27" y="5" width="2" height="4" fill="#5a5a5e" transform="rotate(340 28 28)"/><rect x="27" y="5" width="2" height="4" fill="#5a5a5e" transform="rotate(350 28 28)"/><circle cx="28" cy="28" r="17" fill="#9a9a9e"/><circle cx="28" cy="28" r="13" fill="#7a7a7e"/><circle cx="28" cy="28" r="10.5" fill="#a8a8ac"/><path d="M28 17 V28 M18.5 33.5 L28 28 M37.5 33.5 L28 28" stroke="#55555a" stroke-width="3"/><circle cx="28" cy="28" r="3.5" fill="#55555a"/></svg>
<svg class="abs" style="left:1449.00px;top:1817.00px;" width="26" height="26" viewBox="0 0 26 26"><circle cx="13" cy="13" r="12.5" fill="#e8443a"/><text x="13" y="19" font-size="15" fill="#fff" text-anchor="middle" font-family="Liberation Sans">1</text></svg>
<svg class="abs" style="left:1478.80px;top:1820.60px;" width="64" height="64" viewBox="0 0 64 64"><rect x="0" y="0" width="64" height="64" fill="#000"/><path d="M0 64 V50 H3 V48 H6 V50 H12 V49 H16 V51 H22 V50 H28 V48 H32 V51 H38 V50 H42 V47 H45 V44 H47 V47 H50 V45 H53 V48 H57 V46 H60 V50 H64 V64Z" fill="#4ac848"/><rect x="0" y="60" width="64" height="4" fill="#e84a3a"/></svg>
<svg class="abs" style="left:1556.80px;top:1825.00px;" width="56" height="56" viewBox="0 0 56 56"><rect x="0" y="0" width="56" height="56" rx="12.5" fill="#3a76f0"/><circle cx="28" cy="27" r="17.5" fill="#fff"/><circle cx="28" cy="27" r="21" fill="none" stroke="#fff" stroke-width="2" stroke-dasharray="4.5 3"/><path d="M12.5 45.5 L15 37 L21 42Z" fill="#fff"/></svg>
<svg class="abs" style="left:1629.80px;top:1823.80px;" width="58" height="58" viewBox="0 0 58 58"><circle cx="29" cy="29" r="29" fill="#5ad16a"/><path d="M11 21 Q29 14 47 22 M13 30.5 Q29 25 44 31 M15.5 39.5 Q29 35 41 40" fill="none" stroke="#151515" stroke-width="4.6" stroke-linecap="round"/></svg>
<svg class="abs" style="left:1705.40px;top:1825.00px;" width="56" height="56" viewBox="0 0 56 56"><defs><linearGradient id="we" x1="0" y1="0" x2="0" y2="1"><stop offset="0" stop-color="#2a60c8"/><stop offset="1" stop-color="#3a8ae0"/></linearGradient></defs><rect x="0" y="0" width="56" height="56" rx="12.5" fill="url(#we)"/><circle cx="38" cy="22" r="9" fill="#f5c84a"/><ellipse cx="25" cy="34" rx="16" ry="8.5" fill="#f4f6fa"/><circle cx="23" cy="28" r="9" fill="#f4f6fa"/><circle cx="33" cy="30" r="7" fill="#eef2f8"/></svg>
<svg class="abs" style="left:1773.40px;top:1820.00px;" width="66" height="66" viewBox="0 0 66 66"><path d="M14 26 Q14 16 26 13 Q38 11 48 16 L60 5 L56 22 Q60 40 40 46 Q24 48 18 38Z" fill="#6e6658"/><path d="M18 38 Q28 46 42 44" fill="none" stroke="#4a443a" stroke-width="2"/><circle cx="30" cy="22" r="6.5" fill="#f4f4f4"/><circle cx="42" cy="21" r="6.5" fill="#f4f4f4"/><circle cx="31.5" cy="23" r="2.6" fill="#111"/><circle cx="43.5" cy="22" r="2.6" fill="#111"/><ellipse cx="8" cy="29" rx="6.5" ry="5.5" fill="#151515"/><path d="M32 38 L58 62" stroke="#c88a3a" stroke-width="3"/><path d="M55 58 L62 66" stroke="#222" stroke-width="4"/></svg>
<svg class="abs" style="left:1847.70px;top:1817.80px;" width="70" height="70" viewBox="0 0 70 70"><defs><linearGradient id="dr" x1="0" y1="0" x2="0.6" y2="1"><stop offset="0" stop-color="#9ad86a"/><stop offset="1" stop-color="#3a9a48"/></linearGradient></defs><rect x="0" y="0" width="70" height="70" rx="11" fill="url(#dr)"/><path d="M0 24 Q14 30 22 42 Q26 30 28 22 Q26 14 30 6 L36 2 L40 8 Q46 12 42 18 Q38 24 40 30 L62 20 L66 24 L40 40 Q36 52 30 60 L34 70 H0Z" fill="#fbfbfb"/><path d="M36 2 L38 -2 L42 4 L46 2 L44 8" fill="#fbfbfb"/><path d="M30 50 L26 60 M32 52 L34 58" stroke="#3a9a48" stroke-width="1.5"/></svg>
<svg class="abs" style="left:1925.00px;top:1821.00px;" width="64" height="64" viewBox="0 0 64 64"><defs><linearGradient id="st" x1="0" y1="0" x2="0" y2="1"><stop offset="0" stop-color="#0e1e50"/><stop offset="1" stop-color="#2a8ad0"/></linearGradient></defs><circle cx="32" cy="32" r="32" fill="url(#st)"/><circle cx="42" cy="22" r="10.5" fill="#f2f2f2"/><circle cx="42" cy="22" r="6.5" fill="#1a3a70"/><circle cx="42" cy="22" r="4.5" fill="#f2f2f2" opacity="0"/><circle cx="22" cy="44" r="9" fill="#f2f2f2"/><circle cx="22" cy="44" r="5.5" fill="#1e5090"/><path d="M0 30 L22 38 L34 24 L40 30 L26 46 L0 40Z" fill="#f2f2f2"/><circle cx="22" cy="44" r="5.5" fill="#2a6ab0"/></svg>
<svg class="abs" style="left:2003.00px;top:1825.00px;" width="56" height="56" viewBox="0 0 56 56"><rect x="0" y="0" width="56" height="56" rx="11" fill="#fafafa"/><path d="M28 5 L47 28 Q50 32 46 34 L38 36 Q40 40 36 42 L30 44 Q32 48 28 50 Q22 50 24 46 L18 42 Q14 40 16 36 L10 34 Q6 32 9 28Z" fill="#151515"/><path d="M28 7 L36 17 L33 20 L30 17 L26 22 L21 18 L18 21Z" fill="#f0f0f0"/><ellipse cx="42" cy="44" rx="4" ry="2" fill="#151515"/><ellipse cx="48" cy="40" rx="2.5" ry="1.5" fill="#151515"/></svg>
<svg class="abs" style="left:2073.00px;top:1818.00px;" width="64" height="64" viewBox="0 0 56 64"><rect x="1" y="14" width="54" height="50" rx="10" fill="#b82a2a"/><rect x="3" y="16" width="50" height="38" rx="8" fill="#2a1e3a"/><path d="M3 28 H53 M3 40 H53 M17 16 V54 M30 16 V54 M42 16 V54" stroke="#3a4a9a" stroke-width=".8"/><ellipse cx="28" cy="38" rx="12" ry="7" fill="#1a1a22"/><path d="M28 16 V38" stroke="#555" stroke-width="3"/><circle cx="28" cy="11" r="11" fill="#e0282a"/><circle cx="25" cy="8" r="3.5" fill="#f47a7a" opacity=".7"/><ellipse cx="12" cy="46" rx="7" ry="5" fill="#3a7ad0"/></svg>
<svg class="abs" style="left:2151.00px;top:1825.00px;" width="56" height="56" viewBox="0 0 56 56"><defs><linearGradient id="bq" x1="0" y1="0" x2="0" y2="1"><stop offset="0" stop-color="#2a5ae0"/><stop offset="1" stop-color="#0a1ab8"/></linearGradient></defs><rect x="0" y="0" width="56" height="56" rx="11" fill="url(#bq)"/><rect x="9" y="9" width="38" height="38" fill="none" stroke="#fff" stroke-width="3.2"/><rect x="16.5" y="16.5" width="23" height="23" fill="none" stroke="#fff" stroke-width="3.2"/><circle cx="28" cy="28" r="3.3" fill="#fff"/></svg>
<svg class="abs" style="left:2225.00px;top:1825.00px;" width="56" height="56" viewBox="0 0 56 56"><rect x="0" y="0" width="56" height="56" rx="11" fill="#cdcdcf"/><rect x="13" y="7" width="30" height="43" rx="5" fill="#2f2f33"/><rect x="17" y="11" width="22" height="8" rx="1" fill="#58585c"/><circle cx="19" cy="26.0" r="2.8" fill="#d8d8d8"/><circle cx="28" cy="26.0" r="2.8" fill="#d8d8d8"/><circle cx="37" cy="26.0" r="2.8" fill="#f5a02a"/><circle cx="19" cy="34.5" r="2.8" fill="#d8d8d8"/><circle cx="28" cy="34.5" r="2.8" fill="#d8d8d8"/><circle cx="37" cy="34.5" r="2.8" fill="#f5a02a"/><rect x="16" y="40.5" width="13" height="5.6" rx="2.8" fill="#d8d8d8"/><circle cx="37" cy="43.3" r="2.8" fill="#f5a02a"/></svg>
<svg class="abs" style="left:2294.80px;top:1823.70px;" width="64" height="64" viewBox="0 0 64 64"><circle cx="32" cy="32" r="31.5" fill="#f6f6f6" stroke="#111" stroke-width="1.5"/><path d="M19 6 V30 Q19 40 32 40 Q45 40 45 30 V6" fill="none" stroke="#111" stroke-width="7"/><path d="M12 30 Q8 40 14 48 L18 46 Q14 38 16 30Z M52 30 Q56 40 50 48 L46 46 Q50 38 48 30Z" fill="#111"/><rect x="19" y="28" width="26" height="18" fill="#111"/><rect x="20.5" y="29.5" width="23" height="15" fill="#f6f6f6"/><text x="32" y="42" font-size="12.5" font-weight="bold" fill="#111" text-anchor="middle" font-family="Liberation Sans">BLE</text><path d="M32 46 V52 Q32 56 28 56" fill="none" stroke="#111" stroke-width="1.5"/><ellipse cx="27" cy="56" rx="3" ry="2" fill="#111"/></svg>
<svg class="abs" style="left:2374.80px;top:1825.00px;" width="56" height="56" viewBox="0 0 56 56"><defs><linearGradient id="nu" x1="0" y1="0" x2="0" y2="1"><stop offset="0" stop-color="#7ae870"/><stop offset="1" stop-color="#3ec04a"/></linearGradient></defs><rect x="0" y="0" width="56" height="56" rx="11" fill="url(#nu)"/><g fill="#fff"><rect x="10" y="38" width="7" height="12" rx="1"/><rect x="20" y="27" width="7" height="23" rx="1"/><rect x="30" y="8" width="7" height="42" rx="1"/><rect x="40" y="18" width="7" height="32" rx="1"/></g></svg>
<div class="abs" style="left:2456.50px;top:1824.00px;width:2.50px;height:66.00px;background:rgba(190,195,200,.45)"></div>
<div class="abs" style="left:2712.50px;top:1824.00px;width:2.50px;height:66.00px;background:rgba(190,195,200,.45)"></div>
<svg class="abs" style="left:2480.20px;top:1825.00px;" width="58" height="58" viewBox="0 0 56 58"><rect x="0" y="1" width="56" height="54" rx="12" fill="#f4f4f4"/><rect x="4" y="5" width="48" height="46" rx="9" fill="#9ab6e8"/><path d="M4 28 H52 V51 H4Z" fill="#2a4a8a"/><path d="M4 34 Q16 30 24 40 Q32 48 44 42 V51 H4Z" fill="#e8eef4"/><path d="M4 44 Q12 42 18 46 L14 51 H4Z" fill="#5a5040"/><path d="M34 28 H52 V34 H34Z" fill="#151515"/><path d="M31 34 H55 L53 54 Q44 58 33 54Z" fill="#e4eaf0" stroke="#b8c0c8" stroke-width="1"/><rect x="33" y="27" width="20" height="8" rx="3" fill="#111"/></svg>
<svg class="abs" style="left:2556.80px;top:1825.00px;" width="56" height="56" viewBox="0 0 56 56"><rect x="0" y="0" width="56" height="56" rx="12" fill="#222224"/><path d="M33.5 9.5 A8.5 8.5 0 0 0 25.1 24.0" fill="none" stroke="#f08a2a" stroke-width="7" stroke-linecap="round"/><path d="M46.8 23.5 A8.5 8.5 0 0 0 30.0 23.5" fill="none" stroke="#e84a50" stroke-width="7" stroke-linecap="round"/><path d="M41.3 42.0 A8.5 8.5 0 0 0 32.9 27.5" fill="none" stroke="#9a5ae8" stroke-width="7" stroke-linecap="round"/><path d="M22.5 46.5 A8.5 8.5 0 0 0 30.9 32.0" fill="none" stroke="#5ab8d8" stroke-width="7" stroke-linecap="round"/><path d="M9.2 32.5 A8.5 8.5 0 0 0 26.0 32.5" fill="none" stroke="#5ac84a" stroke-width="7" stroke-linecap="round"/><path d="M14.7 14.0 A8.5 8.5 0 0 0 23.1 28.5" fill="none" stroke="#f2c83a" stroke-width="7" stroke-linecap="round"/></svg>
<svg class="abs" style="left:2629.00px;top:1826.00px;" width="60" height="60" viewBox="0 0 60 60"><rect x="0.75" y="0.75" width="58.5" height="51.5" rx="2" fill="#000" stroke="#8a8a8a" stroke-width="1.5"/><rect x="4" y="4" width="52" height="45" fill="#202020"/><text x="8" y="17" font-size="11" fill="#5ac85a" font-family="Liberation Mono">exec</text></svg>
<svg class="abs" style="left:2733.50px;top:1818.90px;" width="66" height="66" viewBox="0 0 45 66"><path d="M5 0 H30 L45 17 V65 H0 V6Z" fill="#fafafa"/><path d="M30 0 V17 H45" fill="#e4e4e4"/><path d="M8 28 H37 L38 53 H7Z" fill="#a8b0b6"/><circle cx="22.5" cy="40" r="8" fill="#c4cacf" stroke="#8a9096" stroke-width=".8"/><rect x="12" y="30" width="13" height="4" fill="#333"/><rect x="7" y="49" width="31" height="4" fill="#5a6066"/></svg>
<svg class="abs" style="left:2808.80px;top:1819.40px;" width="64" height="64" viewBox="0 0 52 66"><defs><linearGradient id="tr" x1="0" y1="0" x2="0" y2="1"><stop offset="0" stop-color="#9a9ea2"/><stop offset="1" stop-color="#5e6266"/></linearGradient></defs><path d="M2 12 H50 L44 62 Q26 67 8 62Z" fill="url(#tr)"/><ellipse cx="26" cy="12" rx="24" ry="5" fill="#7e8286"/><path d="M6 10 Q10 0 20 5 Q26 -2 34 4 Q44 0 48 10 Q26 15 6 10Z" fill="#e8e8e8"/><path d="M22 6 L28 3 L30 9Z" fill="#4a9ad8"/><path d="M36 6 L40 4 L41 9Z" fill="#e07a3a"/></svg>
<div class="abs" style="left:95.30px;top:1890.50px;width:7.00px;height:7.00px;background:#a8acb4;border-radius:50%"></div>
<div class="abs" style="left:243.90px;top:1890.50px;width:7.00px;height:7.00px;background:#a8acb4;border-radius:50%"></div>
<div class="abs" style="left:318.20px;top:1890.50px;width:7.00px;height:7.00px;background:#a8acb4;border-radius:50%"></div>
<div class="abs" style="left:392.50px;top:1890.50px;width:7.00px;height:7.00px;background:#a8acb4;border-radius:50%"></div>
<div class="abs" style="left:466.80px;top:1890.50px;width:7.00px;height:7.00px;background:#a8acb4;border-radius:50%"></div>
<div class="abs" style="left:541.10px;top:1890.50px;width:7.00px;height:7.00px;background:#a8acb4;border-radius:50%"></div>
<div class="abs" style="left:615.40px;top:1890.50px;width:7.00px;height:7.00px;background:#a8acb4;border-radius:50%"></div>
<div class="abs" style="left:689.70px;top:1890.50px;width:7.00px;height:7.00px;background:#a8acb4;border-radius:50%"></div>
<div class="abs" style="left:764.00px;top:1890.50px;width:7.00px;height:7.00px;background:#a8acb4;border-radius:50%"></div>
<div class="abs" style="left:838.30px;top:1890.50px;width:7.00px;height:7.00px;background:#a8acb4;border-radius:50%"></div>
<div class="abs" style="left:1061.20px;top:1890.50px;width:7.00px;height:7.00px;background:#a8acb4;border-radius:50%"></div>
<div class="abs" style="left:1135.50px;top:1890.50px;width:7.00px;height:7.00px;background:#a8acb4;border-radius:50%"></div>
<div class="abs" style="left:1209.80px;top:1890.50px;width:7.00px;height:7.00px;background:#a8acb4;border-radius:50%"></div>
<div class="abs" style="left:1284.10px;top:1890.50px;width:7.00px;height:7.00px;background:#a8acb4;border-radius:50%"></div>
<div class="abs" style="left:1507.00px;top:1890.50px;width:7.00px;height:7.00px;background:#a8acb4;border-radius:50%"></div>
<div class="abs" style="left:1581.30px;top:1890.50px;width:7.00px;height:7.00px;background:#a8acb4;border-radius:50%"></div>
<div class="abs" style="left:1655.60px;top:1890.50px;width:7.00px;height:7.00px;background:#a8acb4;border-radius:50%"></div>
<div class="abs" style="left:1729.90px;top:1890.50px;width:7.00px;height:7.00px;background:#a8acb4;border-radius:50%"></div>
<div class="abs" style="left:1804.20px;top:1890.50px;width:7.00px;height:7.00px;background:#a8acb4;border-radius:50%"></div>
<div class="abs" style="left:1952.80px;top:1890.50px;width:7.00px;height:7.00px;background:#a8acb4;border-radius:50%"></div>
<div class="abs" style="left:2027.10px;top:1890.50px;width:7.00px;height:7.00px;background:#a8acb4;border-radius:50%"></div>
<div class="abs" style="left:2101.40px;top:1890.50px;width:7.00px;height:7.00px;background:#a8acb4;border-radius:50%"></div>
<div class="abs" style="left:2175.70px;top:1890.50px;width:7.00px;height:7.00px;background:#a8acb4;border-radius:50%"></div>
<div class="abs" style="left:2250.00px;top:1890.50px;width:7.00px;height:7.00px;background:#a8acb4;border-radius:50%"></div>
<div class="abs" style="left:2324.30px;top:1890.50px;width:7.00px;height:7.00px;background:#a8acb4;border-radius:50%"></div>
<div class="abs" style="left:2398.60px;top:1890.50px;width:7.00px;height:7.00px;background:#a8acb4;border-radius:50%"></div>
<div class="abs" style="left:2505.50px;top:1890.50px;width:7.00px;height:7.00px;background:#a8acb4;border-radius:50%"></div>
<div class="abs" style="left:2581.50px;top:1890.50px;width:7.00px;height:7.00px;background:#a8acb4;border-radius:50%"></div>
</body></html>
